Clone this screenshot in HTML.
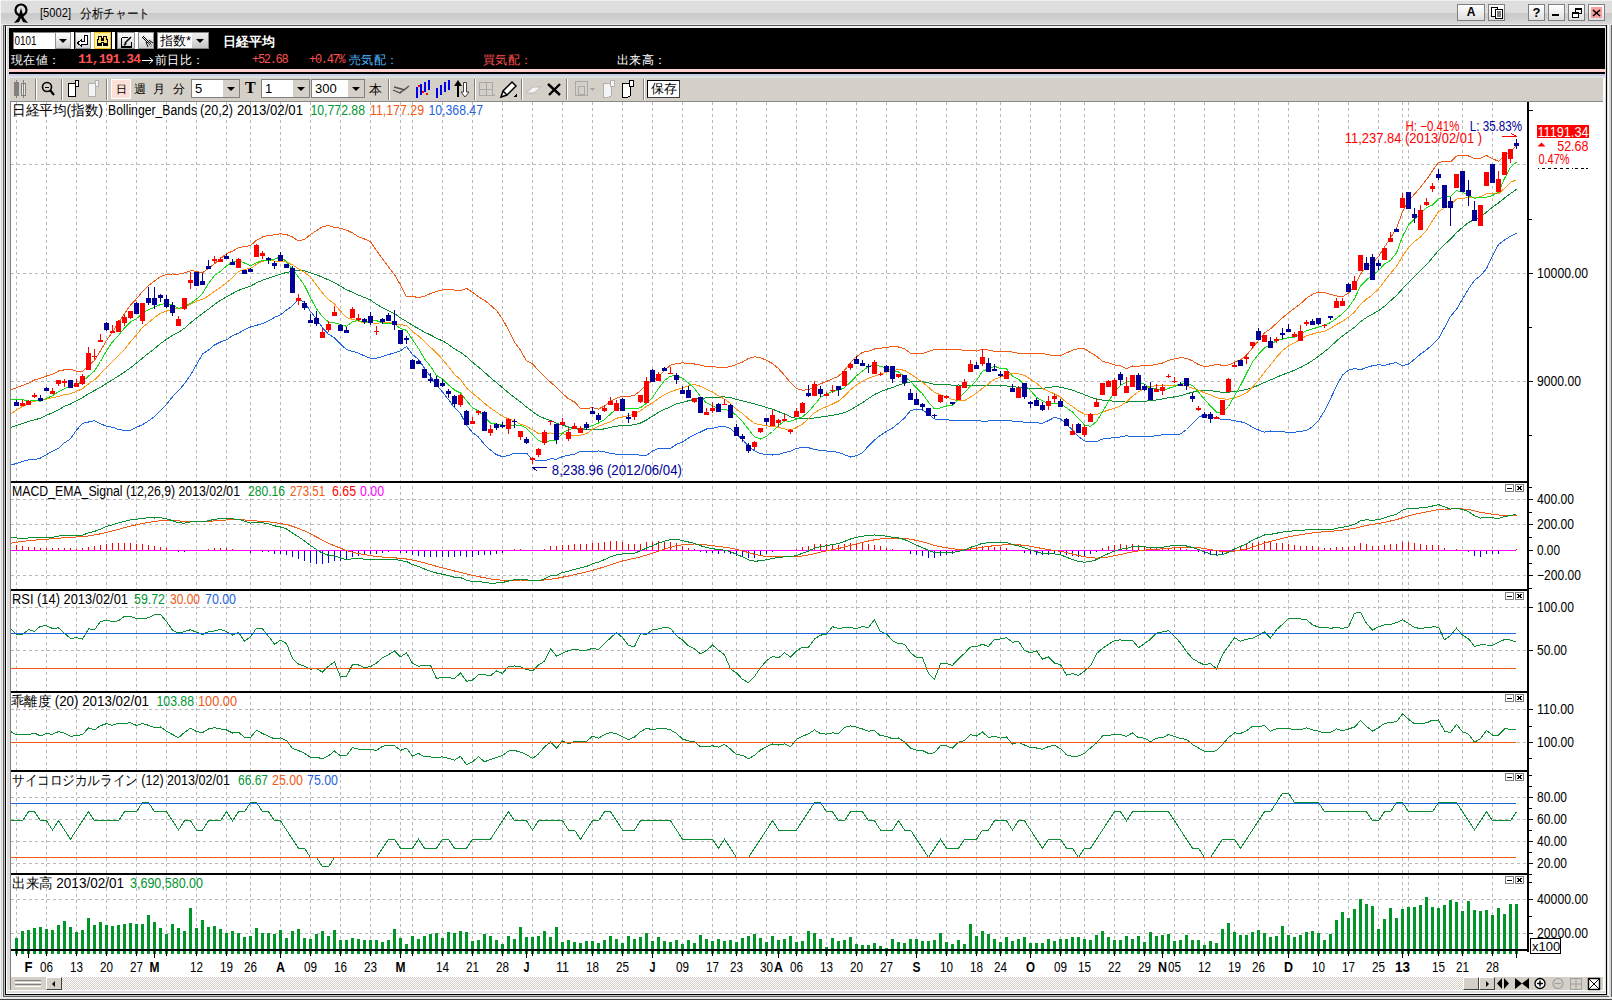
<!DOCTYPE html>
<html><head><meta charset="utf-8"><style>
*{margin:0;padding:0;box-sizing:border-box}
html,body{width:1612px;height:1000px;overflow:hidden;background:#d4d0c8;font-family:"Liberation Sans", sans-serif}
.a{position:absolute}
svg text{font-family:"Liberation Sans", sans-serif}
</style></head><body>
<!-- window frame -->
<div class="a" style="left:0;top:0;width:1612px;height:1000px;background:#ececec"></div>
<div class="a" style="left:0;top:0;width:1612px;height:25px;background:linear-gradient(#f0f0f0 0,#f0f0f0 1px,#dedede 1px,#dedede 13px,#cccccc 13px,#cccccc 17px,#dadada 24px,#e8e8e8 24px,#e8e8e8 25px)"></div>
<div class="a" style="left:0;top:0;width:1px;height:1000px;background:#f4f4f4"></div>
<div class="a" style="left:1px;top:25px;width:1px;height:975px;background:#d0d0d0"></div>
<div class="a" style="left:3px;top:25px;width:1606px;height:1px;background:#555"></div>
<div class="a" style="left:3px;top:25px;width:1px;height:972px;background:#606060"></div>
<div class="a" style="left:4px;top:26px;width:1px;height:970px;background:#c0c0c0"></div>
<div class="a" style="left:5px;top:26px;width:1px;height:969px;background:#000"></div>
<div class="a" style="left:6px;top:26px;width:1600px;height:2px;background:#f2f2f2"></div>
<div class="a" style="left:6px;top:27px;width:1px;height:967px;background:#fff"></div>
<div class="a" style="left:7px;top:27px;width:3px;height:964px;background:#dcdcdc"></div>
<div class="a" style="left:1603px;top:77px;width:2px;height:914px;background:#fafafa"></div>
<div class="a" style="left:1605px;top:26px;width:1px;height:968px;background:#dcdcdc"></div>
<div class="a" style="left:1606px;top:25px;width:1px;height:970px;background:#000"></div>
<div class="a" style="left:1607px;top:25px;width:1px;height:972px;background:#e0e0e0"></div>
<div class="a" style="left:1608px;top:25px;width:1px;height:974px;background:#fafafa"></div>
<div class="a" style="left:1609px;top:25px;width:2px;height:975px;background:#d8d8d8"></div>
<div class="a" style="left:1611px;top:25px;width:1px;height:975px;background:#606060"></div>
<div class="a" style="left:6px;top:990px;width:1600px;height:1px;background:#fff"></div>
<div class="a" style="left:7px;top:991px;width:1599px;height:2px;background:#dcdcdc"></div>
<div class="a" style="left:6px;top:993px;width:1600px;height:1px;background:#fff"></div>
<div class="a" style="left:5px;top:994px;width:1602px;height:1px;background:#000"></div>
<div class="a" style="left:4px;top:995px;width:1604px;height:1px;background:#c0c0c0"></div>
<div class="a" style="left:3px;top:996px;width:1606px;height:1px;background:#606060"></div>
<div class="a" style="left:0;top:997px;width:1612px;height:2px;background:#e8e8e8"></div>
<div class="a" style="left:0;top:999px;width:1612px;height:1px;background:#404040"></div>
<!-- title -->
<svg class="a" style="left:12px;top:2px" width="18" height="22" viewBox="0 0 18 22">
 <circle cx="9" cy="8" r="5.5" fill="none" stroke="#000" stroke-width="2.2"/>
 <path d="M9 6 L6 16 L2 21 L7 20 L9 16 L11 20 L16 21 L12 16 Z" fill="#000"/>
</svg>
<svg class="a" style="left:0;top:0" width="200" height="26"><text x="40" y="17" font-size="13" textLength="31" lengthAdjust="spacingAndGlyphs" font-family="Liberation Sans">[5002]</text><text x="80" y="17.5" font-size="13" textLength="70" lengthAdjust="spacingAndGlyphs" font-family="Liberation Sans">分析チャート</text></svg>
<div class="a" style="left:1457px;top:4px;width:28px;height:17px;background:linear-gradient(#fff,#e0e0e0);border:1px solid #808080;font:bold 12px 'Liberation Sans';text-align:center;line-height:15px">A</div>
<div class="a" style="left:1488px;top:4px;width:17px;height:17px;background:linear-gradient(#fff,#e0e0e0);border:1px solid #808080"></div>
<svg class="a" style="left:1490px;top:6px" width="14" height="14"><rect x="1.5" y="1.5" width="6" height="9" fill="#fff" stroke="#000"/><rect x="5.5" y="3.5" width="7" height="9" fill="#fff" stroke="#000"/><path d="M7 6h4M7 8h4M7 10h4" stroke="#000"/></svg>
<div class="a" style="left:1528px;top:4px;width:17px;height:17px;background:linear-gradient(#fff,#e0e0e0);border:1px solid #808080;font:bold 13px 'Liberation Sans';text-align:center;line-height:15px">?</div>
<div class="a" style="left:1548px;top:4px;width:17px;height:17px;background:linear-gradient(#fff,#e0e0e0);border:1px solid #808080"><div class="a" style="left:3px;top:9px;width:7px;height:2px;background:#000"></div></div>
<div class="a" style="left:1568px;top:4px;width:17px;height:17px;background:linear-gradient(#fff,#e0e0e0);border:1px solid #808080"><svg class="a" style="left:2px;top:2px" width="12" height="12"><rect x="4.5" y="1.5" width="6" height="5" fill="none" stroke="#000" stroke-width="1"/><rect x="4" y="1" width="7" height="2" fill="#000"/><rect x="1.5" y="5.5" width="6" height="5" fill="#fff" stroke="#000"/><rect x="1" y="5" width="7" height="2" fill="#000"/></svg></div>
<div class="a" style="left:1588px;top:4px;width:17px;height:17px;background:linear-gradient(#fff,#e0e0e0);border:1px solid #808080"></div>
<div class="a" style="left:1591px;top:7px;width:11px;height:11px;background:#f8a0a0"></div>
<svg class="a" style="left:1588px;top:4px" width="17" height="17"><path d="M5 6L12 12M12 6L5 12" stroke="#000" stroke-width="1.6"/></svg>

<!-- header black -->
<div class="a" style="left:9px;top:28px;width:1596px;height:41px;background:#000"></div>
<div class="a" style="left:9px;top:69px;width:1596px;height:3px;background:#ffd0d0"></div>
<div class="a" style="left:9px;top:72px;width:1596px;height:2px;background:#000"></div>
<div class="a" style="left:9px;top:74px;width:1596px;height:2px;background:#c8d0e8"></div>
<div class="a" style="left:9px;top:76px;width:1596px;height:2px;background:#e0e0e0"></div>
<!-- header row1 -->
<div class="a" style="left:13px;top:32px;width:42px;height:17px;background:#fff;border-top:1px solid #808080;border-left:1px solid #808080"></div>
<svg class="a" style="left:13px;top:32px" width="42" height="17"><text x="1.5" y="13" font-size="13" font-family="Liberation Sans" textLength="22" lengthAdjust="spacingAndGlyphs">0101</text></svg>
<div class="a" style="left:55px;top:32px;width:16px;height:17px;background:linear-gradient(#fff,#d0d0d0);border:1px solid #909090"><div class="a" style="left:3px;top:6px;width:0;height:0;border-left:4px solid transparent;border-right:4px solid transparent;border-top:4px solid #000"></div></div>
<div class="a" style="left:71px;top:32px;width:3px;height:17px;background:#fff"></div>
<div class="a" style="left:75px;top:32px;width:16px;height:17px;background:linear-gradient(#fff,#d0d0d0);border:1px solid #909090"></div>
<svg class="a" style="left:75px;top:32px" width="16" height="17" shape-rendering="crispEdges"><path d="M9.5 3.5h3v9h-6v2l-4-3.5 4-3.5v2h3z" fill="#fff" stroke="#000"/></svg>
<div class="a" style="left:91px;top:32px;width:3px;height:17px;background:#fff"></div>
<div class="a" style="left:94px;top:32px;width:17px;height:17px;background:#fff2a0;border:1px solid #f0c020"><svg class="a" style="left:0px;top:0px" width="16" height="16" shape-rendering="crispEdges"><path d="M3.5 3.5h3v2h2v-2h3v3h1v6h-4v-3h-2v3h-4v-6h1z" fill="#ffe060" stroke="#000"/><rect x="3" y="10" width="3" height="2" fill="#000"/><rect x="9" y="10" width="3" height="2" fill="#000"/><rect x="6" y="6" width="3" height="2" fill="#000"/></svg></div>
<div class="a" style="left:112px;top:32px;width:3px;height:17px;background:#fff"></div>
<div class="a" style="left:117px;top:32px;width:18px;height:17px;background:linear-gradient(#fff,#d0d0d0);border:1px solid #909090"><svg class="a" style="left:1px;top:1px" width="16" height="15" shape-rendering="crispEdges"><path d="M2.5 3.5h6M2.5 3.5v9h10v-5" fill="none" stroke="#000"/><path d="M6 9L12 3M6 8l1 2M7 10l-2 1" stroke="#000" stroke-width="1.5" shape-rendering="auto"/><rect x="2" y="12" width="11" height="1.5" fill="#000"/></svg></div>
<div class="a" style="left:135px;top:32px;width:3px;height:17px;background:#fff"></div>
<div class="a" style="left:138px;top:32px;width:16px;height:17px;background:linear-gradient(#fff,#d0d0d0);border:1px solid #909090"><svg class="a" style="left:1px;top:1px" width="14" height="15"><path d="M2 3L10 11M3 2L11 10M5 3L3 5M6 8L8 13M9 6L13 9" stroke="#000" stroke-width="1"/><path d="M8 9h4M9 11h3M11 8v5" stroke="#808080" stroke-dasharray="1,1"/></svg></div>
<div class="a" style="left:157px;top:32px;width:52px;height:17px;background:#fff;border:1px solid #808080;font:13px 'Liberation Sans';line-height:15px;padding-left:2px">指数*</div>
<div class="a" style="left:192px;top:33px;width:16px;height:15px;background:linear-gradient(#eee,#c8c8c8)"><div class="a" style="left:4px;top:6px;width:0;height:0;border-left:4px solid transparent;border-right:4px solid transparent;border-top:4px solid #000"></div></div>
<div class="a" style="left:223px;top:33px;font:bold 13px 'Liberation Sans';color:#fff;white-space:nowrap;letter-spacing:0px">日経平均</div>
<!-- header row2 -->
<div class="a" style="left:11px;top:52px;font:12px 'Liberation Sans';color:#fff;white-space:nowrap;letter-spacing:0.4px">現在値：</div>
<div class="a" style="left:78px;top:52px;font:bold 13px 'Liberation Mono';color:#ff5050;white-space:nowrap;letter-spacing:-0.9px">11,191.34</div>
<svg class="a" style="left:141px;top:51px" width="14" height="16"><path d="M1 9.5H12M8.5 6.5L12 9.5L8.5 12.5" stroke="#fff" fill="none" stroke-width="1"/></svg>
<div class="a" style="left:155px;top:52px;font:12px 'Liberation Sans';color:#fff;white-space:nowrap;letter-spacing:0.4px">前日比：</div>
<div class="a" style="left:252px;top:52.5px;font:12px 'Liberation Mono';color:#ff5050;white-space:nowrap;letter-spacing:-1.3px">+52.68</div>
<div class="a" style="left:309px;top:52.5px;font:12px 'Liberation Mono';color:#ff5050;white-space:nowrap;letter-spacing:-1.3px">+0.47%</div>
<div class="a" style="left:349px;top:52px;font:12px 'Liberation Sans';color:#50b8ff;white-space:nowrap;letter-spacing:0.4px">売気配：</div>
<div class="a" style="left:483px;top:52px;font:12px 'Liberation Sans';color:#ff5050;white-space:nowrap;letter-spacing:0.4px">買気配：</div>
<div class="a" style="left:617px;top:52px;font:12px 'Liberation Sans';color:#fff;white-space:nowrap;letter-spacing:0.4px">出来高：</div>

<!-- toolbar -->
<div class="a" style="left:10px;top:78px;width:1593px;height:23px;background:#d4d0c8"></div>
<div class="a" style="left:10px;top:101px;width:1593px;height:1px;background:#888"></div>
<svg class="a" style="left:10px;top:78px" width="700" height="23" shape-rendering="crispEdges">
 <rect x="4" y="4" width="5" height="14" fill="#808080"/><rect x="6" y="2" width="1" height="18" fill="#808080"/>
 <rect x="11.5" y="5.5" width="4" height="12" fill="#e8e8e8" stroke="#808080"/><rect x="13" y="2" width="1" height="18" fill="#808080"/>
 <rect x="25" y="1" width="1" height="21" fill="#808080"/><rect x="26" y="1" width="1" height="21" fill="#fff"/>
 <circle cx="37" cy="9" r="4.5" fill="none" stroke="#000" stroke-width="1.6" shape-rendering="auto"/><path d="M40 12L44 17" stroke="#000" stroke-width="2.2" shape-rendering="auto"/><path d="M35 9h4" stroke="#000"/>
 <rect x="51" y="1" width="1" height="21" fill="#808080"/><rect x="52" y="1" width="1" height="21" fill="#fff"/>
 <path d="M58.5 5.5h7v13h-7z" fill="#fff" stroke="#000"/><rect x="65.5" y="2.5" width="3" height="6" fill="#fff" stroke="#000"/>
 <path d="M78.5 5.5h7v13h-7z" fill="#f4f4f4" stroke="#b0b0b0"/><rect x="85.5" y="2.5" width="3" height="6" fill="#f4f4f4" stroke="#b0b0b0"/>
 <rect x="96" y="1" width="1" height="21" fill="#808080"/><rect x="97" y="1" width="1" height="21" fill="#fff"/>
 <rect x="101.5" y="1.5" width="19" height="19" fill="#fde0d8" stroke="#fff"/>
</svg>
<div class="a" style="left:116px;top:81.5px;font:11px 'Liberation Sans';white-space:nowrap">日</div>
<div class="a" style="left:134px;top:81px;font:12px 'Liberation Sans';white-space:nowrap">週</div>
<div class="a" style="left:153px;top:81px;font:12px 'Liberation Sans';white-space:nowrap">月</div>
<div class="a" style="left:173px;top:81px;font:12px 'Liberation Sans';white-space:nowrap">分</div>
<div class="a" style="left:191px;top:79px;width:49px;height:19px;background:#fff;border:1px solid #808080;font:13px 'Liberation Sans';line-height:17px;padding-left:3px">5</div>
<div class="a" style="left:223px;top:80px;width:16px;height:17px;background:#d4d0c8"><div class="a" style="left:4px;top:7px;border-left:4px solid transparent;border-right:4px solid transparent;border-top:4px solid #000"></div></div>
<div class="a" style="left:245px;top:79px;font:bold 16px 'Liberation Serif';white-space:nowrap">T</div>
<div class="a" style="left:261px;top:79px;width:49px;height:19px;background:#fff;border:1px solid #808080;font:13px 'Liberation Sans';line-height:17px;padding-left:3px">1</div>
<div class="a" style="left:293px;top:80px;width:16px;height:17px;background:#d4d0c8"><div class="a" style="left:4px;top:7px;border-left:4px solid transparent;border-right:4px solid transparent;border-top:4px solid #000"></div></div>
<div class="a" style="left:311px;top:79px;width:54px;height:19px;background:#fff;border:1px solid #808080;font:13px 'Liberation Sans';line-height:17px;padding-left:3px">300</div>
<div class="a" style="left:348px;top:80px;width:16px;height:17px;background:#d4d0c8"><div class="a" style="left:4px;top:7px;border-left:4px solid transparent;border-right:4px solid transparent;border-top:4px solid #000"></div></div>
<div class="a" style="left:369px;top:81px;font:13px 'Liberation Sans';white-space:nowrap">本</div>
<svg class="a" style="left:385px;top:78px" width="320" height="23" shape-rendering="crispEdges">
 <rect x="3" y="1" width="1" height="21" fill="#808080"/><rect x="4" y="1" width="1" height="21" fill="#fff"/>
 <path d="M8 12 L15 15 L24 8 M9 9 L20 12 M14 15 L22 10" stroke="#505050" fill="none" stroke-width="1.3" shape-rendering="auto"/>
 <rect x="31" y="9" width="2" height="11" fill="#0000f0"/><rect x="35" y="6" width="2" height="11" fill="#0000f0"/><rect x="39" y="4" width="2" height="10" fill="#0000f0"/><rect x="43" y="2" width="2" height="10" fill="#0000f0"/><rect x="33" y="7" width="2" height="2" fill="#f00"/><rect x="37" y="13" width="2" height="2" fill="#f00"/><rect x="41" y="15" width="2" height="2" fill="#f00"/>
 <rect x="51" y="10" width="2" height="10" fill="#0000f0"/><rect x="55" y="7" width="2" height="10" fill="#0000f0"/><rect x="59" y="4" width="2" height="10" fill="#0000f0"/><rect x="63" y="2" width="2" height="10" fill="#0000f0"/>
 <path d="M69 8 L73 2 L77 8 Z" fill="#000" shape-rendering="auto"/><rect x="72" y="6" width="2" height="13" fill="#000"/>
 <path d="M78.5 4.5 V14 H76 L80 19 L84 14 H81.5 V4.5 Z" fill="#fff" stroke="#404040" shape-rendering="auto"/>
 <rect x="89" y="1" width="1" height="21" fill="#808080"/><rect x="90" y="1" width="1" height="21" fill="#fff"/>
 <rect x="94.5" y="4.5" width="13" height="13" fill="none" stroke="#a8a8a8"/><path d="M101.5 4v14M94 11.5h14" stroke="#a8a8a8"/><path d="M107 18h3v-3z" fill="#a8a8a8"/>
 <path d="M116 19 L118 13 L127 4 L131 8 L122 17 Z M118 13 L122 17" fill="#fff" stroke="#000" stroke-width="1.5" shape-rendering="auto"/><path d="M128 19h4v-4z" fill="#000"/>
 <rect x="136" y="1" width="1" height="21" fill="#808080"/><rect x="137" y="1" width="1" height="21" fill="#fff"/>
 <path d="M141 15 L148 9 L156 9 L149 15 Z" fill="#f4f4f4" stroke="#b8b8b8" shape-rendering="auto"/>
 <path d="M163 6 L175 17 M175 6 L164 17" stroke="#000" stroke-width="2.4" shape-rendering="auto"/>
 <rect x="181" y="1" width="1" height="21" fill="#808080"/><rect x="182" y="1" width="1" height="21" fill="#fff"/>
 <rect x="190.5" y="3.5" width="12" height="14" fill="none" stroke="#a8a8a8"/><rect x="193.5" y="8.5" width="6" height="8" fill="none" stroke="#a8a8a8"/><rect x="193" y="4" width="7" height="3" fill="#d0d0d0"/><path d="M204 10h6l-3 3z" fill="#a8a8a8"/>
 <path d="M218.5 5.5h8v12l-3 2h-5z" fill="#f4f4f4" stroke="#b0b0b0"/><rect x="225.5" y="2.5" width="4" height="6" fill="#f4f4f4" stroke="#b0b0b0"/>
 <path d="M237.5 5.5h8v12l-3 2h-5z" fill="#fff" stroke="#000"/><rect x="244.5" y="2.5" width="4" height="6" fill="#fff" stroke="#000"/>
 <rect x="258" y="1" width="1" height="21" fill="#808080"/><rect x="259" y="1" width="1" height="21" fill="#fff"/>
</svg>
<div class="a" style="left:647px;top:80px;width:33px;height:18px;background:#fff;border:1px solid #000;border-right-color:#404040;border-bottom-color:#404040;font:13px 'Liberation Sans';line-height:16px;text-align:center">保存</div>

<!-- scrollbar -->
<div class="a" style="left:11px;top:977px;width:1592px;height:13px;background-color:#e8e8e8;background-image:repeating-conic-gradient(#d4d0c8 0 25%,#fff 0 50%);background-size:2px 2px"></div>
<div class="a" style="left:11px;top:977px;width:35px;height:13px;background:#d4d0c8"></div>
<div class="a" style="left:15px;top:980px;width:26px;height:1px;background:#808080"></div>
<div class="a" style="left:15px;top:982px;width:26px;height:1px;background:#fff"></div>
<div class="a" style="left:15px;top:984px;width:26px;height:1px;background:#808080"></div>
<div class="a" style="left:15px;top:986px;width:26px;height:1px;background:#fff"></div>
<div class="a" style="left:46px;top:977px;width:16px;height:13px;background:#d4d0c8;border-right:1px solid #404040;border-bottom:1px solid #404040;border-top:1px solid #fff;border-left:1px solid #fff"><div class="a" style="left:5px;top:3px;border-top:3px solid transparent;border-bottom:3px solid transparent;border-right:3px solid #000"></div></div>
<div class="a" style="left:1463px;top:977px;width:16px;height:13px;background:#d4d0c8;border-right:1px solid #404040;border-bottom:1px solid #404040;border-top:1px solid #fff;border-left:1px solid #fff"></div>
<div class="a" style="left:1479px;top:977px;width:16px;height:13px;background:#d4d0c8;border-right:1px solid #404040;border-bottom:1px solid #404040;border-top:1px solid #fff;border-left:1px solid #fff"><div class="a" style="left:6px;top:3px;border-top:3px solid transparent;border-bottom:3px solid transparent;border-left:3px solid #000"></div></div>
<div class="a" style="left:1495px;top:977px;width:108px;height:13px;background:#d4d0c8"></div>
<svg class="a" style="left:1495px;top:977px" width="110" height="14" shape-rendering="auto">
 <path d="M2 6.5 L7 1 V12 Z M9 1 L14 6.5 L9 12 Z" fill="#000"/>
 <path d="M20 1 L27 6.5 L20 12 Z M34 1 L27 6.5 L34 12 Z" fill="#000"/>
 <circle cx="45" cy="6.5" r="5" fill="#fff" stroke="#000" stroke-width="1.3"/><path d="M42 6.5h6M45 3.5v6" stroke="#000" stroke-width="1.5"/>
 <circle cx="63" cy="6.5" r="5" fill="none" stroke="#a0a0a0" stroke-width="1.2"/><path d="M60 6.5h6" stroke="#a0a0a0" stroke-width="1.3"/>
 <rect x="75.5" y="1.5" width="11" height="11" fill="none" stroke="#a0a0a0"/><path d="M81 1v12M75 7h12" stroke="#a0a0a0"/>
 <rect x="93.5" y="1.5" width="11" height="11" fill="#fff" stroke="#000" stroke-width="1.4"/><path d="M94 2L104 12M104 2L94 12" stroke="#000"/>
</svg>

<svg class="a" style="left:0;top:0" width="1612" height="1000" viewBox="0 0 1612 1000" shape-rendering="crispEdges">
<rect x="10" y="102" width="1593" height="875" fill="#fff"/>
<rect x="10" y="102" width="1" height="888" fill="#808080"/>
<line x1="16.5" y1="102" x2="16.5" y2="481" stroke="#b8b8b8" stroke-dasharray="3,3"/>
<line x1="46.5" y1="102" x2="46.5" y2="481" stroke="#b8b8b8" stroke-dasharray="3,3"/>
<line x1="76.5" y1="102" x2="76.5" y2="481" stroke="#b8b8b8" stroke-dasharray="3,3"/>
<line x1="106.5" y1="102" x2="106.5" y2="481" stroke="#b8b8b8" stroke-dasharray="3,3"/>
<line x1="136.5" y1="102" x2="136.5" y2="481" stroke="#b8b8b8" stroke-dasharray="3,3"/>
<line x1="166.5" y1="102" x2="166.5" y2="481" stroke="#b8b8b8" stroke-dasharray="3,3"/>
<line x1="196.5" y1="102" x2="196.5" y2="481" stroke="#b8b8b8" stroke-dasharray="3,3"/>
<line x1="226.5" y1="102" x2="226.5" y2="481" stroke="#b8b8b8" stroke-dasharray="3,3"/>
<line x1="250.5" y1="102" x2="250.5" y2="481" stroke="#b8b8b8" stroke-dasharray="3,3"/>
<line x1="280.5" y1="102" x2="280.5" y2="481" stroke="#b8b8b8" stroke-dasharray="3,3"/>
<line x1="310.5" y1="102" x2="310.5" y2="481" stroke="#b8b8b8" stroke-dasharray="3,3"/>
<line x1="340.5" y1="102" x2="340.5" y2="481" stroke="#b8b8b8" stroke-dasharray="3,3"/>
<line x1="370.5" y1="102" x2="370.5" y2="481" stroke="#b8b8b8" stroke-dasharray="3,3"/>
<line x1="400.5" y1="102" x2="400.5" y2="481" stroke="#b8b8b8" stroke-dasharray="3,3"/>
<line x1="412.5" y1="102" x2="412.5" y2="481" stroke="#b8b8b8" stroke-dasharray="3,3"/>
<line x1="442.5" y1="102" x2="442.5" y2="481" stroke="#b8b8b8" stroke-dasharray="3,3"/>
<line x1="472.5" y1="102" x2="472.5" y2="481" stroke="#b8b8b8" stroke-dasharray="3,3"/>
<line x1="502.5" y1="102" x2="502.5" y2="481" stroke="#b8b8b8" stroke-dasharray="3,3"/>
<line x1="532.5" y1="102" x2="532.5" y2="481" stroke="#b8b8b8" stroke-dasharray="3,3"/>
<line x1="562.5" y1="102" x2="562.5" y2="481" stroke="#b8b8b8" stroke-dasharray="3,3"/>
<line x1="592.5" y1="102" x2="592.5" y2="481" stroke="#b8b8b8" stroke-dasharray="3,3"/>
<line x1="622.5" y1="102" x2="622.5" y2="481" stroke="#b8b8b8" stroke-dasharray="3,3"/>
<line x1="652.5" y1="102" x2="652.5" y2="481" stroke="#b8b8b8" stroke-dasharray="3,3"/>
<line x1="682.5" y1="102" x2="682.5" y2="481" stroke="#b8b8b8" stroke-dasharray="3,3"/>
<line x1="712.5" y1="102" x2="712.5" y2="481" stroke="#b8b8b8" stroke-dasharray="3,3"/>
<line x1="736.5" y1="102" x2="736.5" y2="481" stroke="#b8b8b8" stroke-dasharray="3,3"/>
<line x1="766.5" y1="102" x2="766.5" y2="481" stroke="#b8b8b8" stroke-dasharray="3,3"/>
<line x1="796.5" y1="102" x2="796.5" y2="481" stroke="#b8b8b8" stroke-dasharray="3,3"/>
<line x1="826.5" y1="102" x2="826.5" y2="481" stroke="#b8b8b8" stroke-dasharray="3,3"/>
<line x1="856.5" y1="102" x2="856.5" y2="481" stroke="#b8b8b8" stroke-dasharray="3,3"/>
<line x1="886.5" y1="102" x2="886.5" y2="481" stroke="#b8b8b8" stroke-dasharray="3,3"/>
<line x1="916.5" y1="102" x2="916.5" y2="481" stroke="#b8b8b8" stroke-dasharray="3,3"/>
<line x1="946.5" y1="102" x2="946.5" y2="481" stroke="#b8b8b8" stroke-dasharray="3,3"/>
<line x1="976.5" y1="102" x2="976.5" y2="481" stroke="#b8b8b8" stroke-dasharray="3,3"/>
<line x1="1000.5" y1="102" x2="1000.5" y2="481" stroke="#b8b8b8" stroke-dasharray="3,3"/>
<line x1="1030.5" y1="102" x2="1030.5" y2="481" stroke="#b8b8b8" stroke-dasharray="3,3"/>
<line x1="1060.5" y1="102" x2="1060.5" y2="481" stroke="#b8b8b8" stroke-dasharray="3,3"/>
<line x1="1084.5" y1="102" x2="1084.5" y2="481" stroke="#b8b8b8" stroke-dasharray="3,3"/>
<line x1="1114.5" y1="102" x2="1114.5" y2="481" stroke="#b8b8b8" stroke-dasharray="3,3"/>
<line x1="1144.5" y1="102" x2="1144.5" y2="481" stroke="#b8b8b8" stroke-dasharray="3,3"/>
<line x1="1174.5" y1="102" x2="1174.5" y2="481" stroke="#b8b8b8" stroke-dasharray="3,3"/>
<line x1="1204.5" y1="102" x2="1204.5" y2="481" stroke="#b8b8b8" stroke-dasharray="3,3"/>
<line x1="1234.5" y1="102" x2="1234.5" y2="481" stroke="#b8b8b8" stroke-dasharray="3,3"/>
<line x1="1258.5" y1="102" x2="1258.5" y2="481" stroke="#b8b8b8" stroke-dasharray="3,3"/>
<line x1="1288.5" y1="102" x2="1288.5" y2="481" stroke="#b8b8b8" stroke-dasharray="3,3"/>
<line x1="1318.5" y1="102" x2="1318.5" y2="481" stroke="#b8b8b8" stroke-dasharray="3,3"/>
<line x1="1348.5" y1="102" x2="1348.5" y2="481" stroke="#b8b8b8" stroke-dasharray="3,3"/>
<line x1="1378.5" y1="102" x2="1378.5" y2="481" stroke="#b8b8b8" stroke-dasharray="3,3"/>
<line x1="1402.5" y1="102" x2="1402.5" y2="481" stroke="#b8b8b8" stroke-dasharray="3,3"/>
<line x1="1408.5" y1="102" x2="1408.5" y2="481" stroke="#b8b8b8" stroke-dasharray="3,3"/>
<line x1="1438.5" y1="102" x2="1438.5" y2="481" stroke="#b8b8b8" stroke-dasharray="3,3"/>
<line x1="1462.5" y1="102" x2="1462.5" y2="481" stroke="#b8b8b8" stroke-dasharray="3,3"/>
<line x1="1492.5" y1="102" x2="1492.5" y2="481" stroke="#b8b8b8" stroke-dasharray="3,3"/>
<line x1="16.5" y1="480" x2="16.5" y2="589" stroke="#b8b8b8" stroke-dasharray="3,3"/>
<line x1="46.5" y1="480" x2="46.5" y2="589" stroke="#b8b8b8" stroke-dasharray="3,3"/>
<line x1="76.5" y1="480" x2="76.5" y2="589" stroke="#b8b8b8" stroke-dasharray="3,3"/>
<line x1="106.5" y1="480" x2="106.5" y2="589" stroke="#b8b8b8" stroke-dasharray="3,3"/>
<line x1="136.5" y1="480" x2="136.5" y2="589" stroke="#b8b8b8" stroke-dasharray="3,3"/>
<line x1="166.5" y1="480" x2="166.5" y2="589" stroke="#b8b8b8" stroke-dasharray="3,3"/>
<line x1="196.5" y1="480" x2="196.5" y2="589" stroke="#b8b8b8" stroke-dasharray="3,3"/>
<line x1="226.5" y1="480" x2="226.5" y2="589" stroke="#b8b8b8" stroke-dasharray="3,3"/>
<line x1="250.5" y1="480" x2="250.5" y2="589" stroke="#b8b8b8" stroke-dasharray="3,3"/>
<line x1="280.5" y1="480" x2="280.5" y2="589" stroke="#b8b8b8" stroke-dasharray="3,3"/>
<line x1="310.5" y1="480" x2="310.5" y2="589" stroke="#b8b8b8" stroke-dasharray="3,3"/>
<line x1="340.5" y1="480" x2="340.5" y2="589" stroke="#b8b8b8" stroke-dasharray="3,3"/>
<line x1="370.5" y1="480" x2="370.5" y2="589" stroke="#b8b8b8" stroke-dasharray="3,3"/>
<line x1="400.5" y1="480" x2="400.5" y2="589" stroke="#b8b8b8" stroke-dasharray="3,3"/>
<line x1="412.5" y1="480" x2="412.5" y2="589" stroke="#b8b8b8" stroke-dasharray="3,3"/>
<line x1="442.5" y1="480" x2="442.5" y2="589" stroke="#b8b8b8" stroke-dasharray="3,3"/>
<line x1="472.5" y1="480" x2="472.5" y2="589" stroke="#b8b8b8" stroke-dasharray="3,3"/>
<line x1="502.5" y1="480" x2="502.5" y2="589" stroke="#b8b8b8" stroke-dasharray="3,3"/>
<line x1="532.5" y1="480" x2="532.5" y2="589" stroke="#b8b8b8" stroke-dasharray="3,3"/>
<line x1="562.5" y1="480" x2="562.5" y2="589" stroke="#b8b8b8" stroke-dasharray="3,3"/>
<line x1="592.5" y1="480" x2="592.5" y2="589" stroke="#b8b8b8" stroke-dasharray="3,3"/>
<line x1="622.5" y1="480" x2="622.5" y2="589" stroke="#b8b8b8" stroke-dasharray="3,3"/>
<line x1="652.5" y1="480" x2="652.5" y2="589" stroke="#b8b8b8" stroke-dasharray="3,3"/>
<line x1="682.5" y1="480" x2="682.5" y2="589" stroke="#b8b8b8" stroke-dasharray="3,3"/>
<line x1="712.5" y1="480" x2="712.5" y2="589" stroke="#b8b8b8" stroke-dasharray="3,3"/>
<line x1="736.5" y1="480" x2="736.5" y2="589" stroke="#b8b8b8" stroke-dasharray="3,3"/>
<line x1="766.5" y1="480" x2="766.5" y2="589" stroke="#b8b8b8" stroke-dasharray="3,3"/>
<line x1="796.5" y1="480" x2="796.5" y2="589" stroke="#b8b8b8" stroke-dasharray="3,3"/>
<line x1="826.5" y1="480" x2="826.5" y2="589" stroke="#b8b8b8" stroke-dasharray="3,3"/>
<line x1="856.5" y1="480" x2="856.5" y2="589" stroke="#b8b8b8" stroke-dasharray="3,3"/>
<line x1="886.5" y1="480" x2="886.5" y2="589" stroke="#b8b8b8" stroke-dasharray="3,3"/>
<line x1="916.5" y1="480" x2="916.5" y2="589" stroke="#b8b8b8" stroke-dasharray="3,3"/>
<line x1="946.5" y1="480" x2="946.5" y2="589" stroke="#b8b8b8" stroke-dasharray="3,3"/>
<line x1="976.5" y1="480" x2="976.5" y2="589" stroke="#b8b8b8" stroke-dasharray="3,3"/>
<line x1="1000.5" y1="480" x2="1000.5" y2="589" stroke="#b8b8b8" stroke-dasharray="3,3"/>
<line x1="1030.5" y1="480" x2="1030.5" y2="589" stroke="#b8b8b8" stroke-dasharray="3,3"/>
<line x1="1060.5" y1="480" x2="1060.5" y2="589" stroke="#b8b8b8" stroke-dasharray="3,3"/>
<line x1="1084.5" y1="480" x2="1084.5" y2="589" stroke="#b8b8b8" stroke-dasharray="3,3"/>
<line x1="1114.5" y1="480" x2="1114.5" y2="589" stroke="#b8b8b8" stroke-dasharray="3,3"/>
<line x1="1144.5" y1="480" x2="1144.5" y2="589" stroke="#b8b8b8" stroke-dasharray="3,3"/>
<line x1="1174.5" y1="480" x2="1174.5" y2="589" stroke="#b8b8b8" stroke-dasharray="3,3"/>
<line x1="1204.5" y1="480" x2="1204.5" y2="589" stroke="#b8b8b8" stroke-dasharray="3,3"/>
<line x1="1234.5" y1="480" x2="1234.5" y2="589" stroke="#b8b8b8" stroke-dasharray="3,3"/>
<line x1="1258.5" y1="480" x2="1258.5" y2="589" stroke="#b8b8b8" stroke-dasharray="3,3"/>
<line x1="1288.5" y1="480" x2="1288.5" y2="589" stroke="#b8b8b8" stroke-dasharray="3,3"/>
<line x1="1318.5" y1="480" x2="1318.5" y2="589" stroke="#b8b8b8" stroke-dasharray="3,3"/>
<line x1="1348.5" y1="480" x2="1348.5" y2="589" stroke="#b8b8b8" stroke-dasharray="3,3"/>
<line x1="1378.5" y1="480" x2="1378.5" y2="589" stroke="#b8b8b8" stroke-dasharray="3,3"/>
<line x1="1402.5" y1="480" x2="1402.5" y2="589" stroke="#b8b8b8" stroke-dasharray="3,3"/>
<line x1="1408.5" y1="480" x2="1408.5" y2="589" stroke="#b8b8b8" stroke-dasharray="3,3"/>
<line x1="1438.5" y1="480" x2="1438.5" y2="589" stroke="#b8b8b8" stroke-dasharray="3,3"/>
<line x1="1462.5" y1="480" x2="1462.5" y2="589" stroke="#b8b8b8" stroke-dasharray="3,3"/>
<line x1="1492.5" y1="480" x2="1492.5" y2="589" stroke="#b8b8b8" stroke-dasharray="3,3"/>
<line x1="16.5" y1="588" x2="16.5" y2="691" stroke="#b8b8b8" stroke-dasharray="3,3"/>
<line x1="46.5" y1="588" x2="46.5" y2="691" stroke="#b8b8b8" stroke-dasharray="3,3"/>
<line x1="76.5" y1="588" x2="76.5" y2="691" stroke="#b8b8b8" stroke-dasharray="3,3"/>
<line x1="106.5" y1="588" x2="106.5" y2="691" stroke="#b8b8b8" stroke-dasharray="3,3"/>
<line x1="136.5" y1="588" x2="136.5" y2="691" stroke="#b8b8b8" stroke-dasharray="3,3"/>
<line x1="166.5" y1="588" x2="166.5" y2="691" stroke="#b8b8b8" stroke-dasharray="3,3"/>
<line x1="196.5" y1="588" x2="196.5" y2="691" stroke="#b8b8b8" stroke-dasharray="3,3"/>
<line x1="226.5" y1="588" x2="226.5" y2="691" stroke="#b8b8b8" stroke-dasharray="3,3"/>
<line x1="250.5" y1="588" x2="250.5" y2="691" stroke="#b8b8b8" stroke-dasharray="3,3"/>
<line x1="280.5" y1="588" x2="280.5" y2="691" stroke="#b8b8b8" stroke-dasharray="3,3"/>
<line x1="310.5" y1="588" x2="310.5" y2="691" stroke="#b8b8b8" stroke-dasharray="3,3"/>
<line x1="340.5" y1="588" x2="340.5" y2="691" stroke="#b8b8b8" stroke-dasharray="3,3"/>
<line x1="370.5" y1="588" x2="370.5" y2="691" stroke="#b8b8b8" stroke-dasharray="3,3"/>
<line x1="400.5" y1="588" x2="400.5" y2="691" stroke="#b8b8b8" stroke-dasharray="3,3"/>
<line x1="412.5" y1="588" x2="412.5" y2="691" stroke="#b8b8b8" stroke-dasharray="3,3"/>
<line x1="442.5" y1="588" x2="442.5" y2="691" stroke="#b8b8b8" stroke-dasharray="3,3"/>
<line x1="472.5" y1="588" x2="472.5" y2="691" stroke="#b8b8b8" stroke-dasharray="3,3"/>
<line x1="502.5" y1="588" x2="502.5" y2="691" stroke="#b8b8b8" stroke-dasharray="3,3"/>
<line x1="532.5" y1="588" x2="532.5" y2="691" stroke="#b8b8b8" stroke-dasharray="3,3"/>
<line x1="562.5" y1="588" x2="562.5" y2="691" stroke="#b8b8b8" stroke-dasharray="3,3"/>
<line x1="592.5" y1="588" x2="592.5" y2="691" stroke="#b8b8b8" stroke-dasharray="3,3"/>
<line x1="622.5" y1="588" x2="622.5" y2="691" stroke="#b8b8b8" stroke-dasharray="3,3"/>
<line x1="652.5" y1="588" x2="652.5" y2="691" stroke="#b8b8b8" stroke-dasharray="3,3"/>
<line x1="682.5" y1="588" x2="682.5" y2="691" stroke="#b8b8b8" stroke-dasharray="3,3"/>
<line x1="712.5" y1="588" x2="712.5" y2="691" stroke="#b8b8b8" stroke-dasharray="3,3"/>
<line x1="736.5" y1="588" x2="736.5" y2="691" stroke="#b8b8b8" stroke-dasharray="3,3"/>
<line x1="766.5" y1="588" x2="766.5" y2="691" stroke="#b8b8b8" stroke-dasharray="3,3"/>
<line x1="796.5" y1="588" x2="796.5" y2="691" stroke="#b8b8b8" stroke-dasharray="3,3"/>
<line x1="826.5" y1="588" x2="826.5" y2="691" stroke="#b8b8b8" stroke-dasharray="3,3"/>
<line x1="856.5" y1="588" x2="856.5" y2="691" stroke="#b8b8b8" stroke-dasharray="3,3"/>
<line x1="886.5" y1="588" x2="886.5" y2="691" stroke="#b8b8b8" stroke-dasharray="3,3"/>
<line x1="916.5" y1="588" x2="916.5" y2="691" stroke="#b8b8b8" stroke-dasharray="3,3"/>
<line x1="946.5" y1="588" x2="946.5" y2="691" stroke="#b8b8b8" stroke-dasharray="3,3"/>
<line x1="976.5" y1="588" x2="976.5" y2="691" stroke="#b8b8b8" stroke-dasharray="3,3"/>
<line x1="1000.5" y1="588" x2="1000.5" y2="691" stroke="#b8b8b8" stroke-dasharray="3,3"/>
<line x1="1030.5" y1="588" x2="1030.5" y2="691" stroke="#b8b8b8" stroke-dasharray="3,3"/>
<line x1="1060.5" y1="588" x2="1060.5" y2="691" stroke="#b8b8b8" stroke-dasharray="3,3"/>
<line x1="1084.5" y1="588" x2="1084.5" y2="691" stroke="#b8b8b8" stroke-dasharray="3,3"/>
<line x1="1114.5" y1="588" x2="1114.5" y2="691" stroke="#b8b8b8" stroke-dasharray="3,3"/>
<line x1="1144.5" y1="588" x2="1144.5" y2="691" stroke="#b8b8b8" stroke-dasharray="3,3"/>
<line x1="1174.5" y1="588" x2="1174.5" y2="691" stroke="#b8b8b8" stroke-dasharray="3,3"/>
<line x1="1204.5" y1="588" x2="1204.5" y2="691" stroke="#b8b8b8" stroke-dasharray="3,3"/>
<line x1="1234.5" y1="588" x2="1234.5" y2="691" stroke="#b8b8b8" stroke-dasharray="3,3"/>
<line x1="1258.5" y1="588" x2="1258.5" y2="691" stroke="#b8b8b8" stroke-dasharray="3,3"/>
<line x1="1288.5" y1="588" x2="1288.5" y2="691" stroke="#b8b8b8" stroke-dasharray="3,3"/>
<line x1="1318.5" y1="588" x2="1318.5" y2="691" stroke="#b8b8b8" stroke-dasharray="3,3"/>
<line x1="1348.5" y1="588" x2="1348.5" y2="691" stroke="#b8b8b8" stroke-dasharray="3,3"/>
<line x1="1378.5" y1="588" x2="1378.5" y2="691" stroke="#b8b8b8" stroke-dasharray="3,3"/>
<line x1="1402.5" y1="588" x2="1402.5" y2="691" stroke="#b8b8b8" stroke-dasharray="3,3"/>
<line x1="1408.5" y1="588" x2="1408.5" y2="691" stroke="#b8b8b8" stroke-dasharray="3,3"/>
<line x1="1438.5" y1="588" x2="1438.5" y2="691" stroke="#b8b8b8" stroke-dasharray="3,3"/>
<line x1="1462.5" y1="588" x2="1462.5" y2="691" stroke="#b8b8b8" stroke-dasharray="3,3"/>
<line x1="1492.5" y1="588" x2="1492.5" y2="691" stroke="#b8b8b8" stroke-dasharray="3,3"/>
<line x1="16.5" y1="690" x2="16.5" y2="770" stroke="#b8b8b8" stroke-dasharray="3,3"/>
<line x1="46.5" y1="690" x2="46.5" y2="770" stroke="#b8b8b8" stroke-dasharray="3,3"/>
<line x1="76.5" y1="690" x2="76.5" y2="770" stroke="#b8b8b8" stroke-dasharray="3,3"/>
<line x1="106.5" y1="690" x2="106.5" y2="770" stroke="#b8b8b8" stroke-dasharray="3,3"/>
<line x1="136.5" y1="690" x2="136.5" y2="770" stroke="#b8b8b8" stroke-dasharray="3,3"/>
<line x1="166.5" y1="690" x2="166.5" y2="770" stroke="#b8b8b8" stroke-dasharray="3,3"/>
<line x1="196.5" y1="690" x2="196.5" y2="770" stroke="#b8b8b8" stroke-dasharray="3,3"/>
<line x1="226.5" y1="690" x2="226.5" y2="770" stroke="#b8b8b8" stroke-dasharray="3,3"/>
<line x1="250.5" y1="690" x2="250.5" y2="770" stroke="#b8b8b8" stroke-dasharray="3,3"/>
<line x1="280.5" y1="690" x2="280.5" y2="770" stroke="#b8b8b8" stroke-dasharray="3,3"/>
<line x1="310.5" y1="690" x2="310.5" y2="770" stroke="#b8b8b8" stroke-dasharray="3,3"/>
<line x1="340.5" y1="690" x2="340.5" y2="770" stroke="#b8b8b8" stroke-dasharray="3,3"/>
<line x1="370.5" y1="690" x2="370.5" y2="770" stroke="#b8b8b8" stroke-dasharray="3,3"/>
<line x1="400.5" y1="690" x2="400.5" y2="770" stroke="#b8b8b8" stroke-dasharray="3,3"/>
<line x1="412.5" y1="690" x2="412.5" y2="770" stroke="#b8b8b8" stroke-dasharray="3,3"/>
<line x1="442.5" y1="690" x2="442.5" y2="770" stroke="#b8b8b8" stroke-dasharray="3,3"/>
<line x1="472.5" y1="690" x2="472.5" y2="770" stroke="#b8b8b8" stroke-dasharray="3,3"/>
<line x1="502.5" y1="690" x2="502.5" y2="770" stroke="#b8b8b8" stroke-dasharray="3,3"/>
<line x1="532.5" y1="690" x2="532.5" y2="770" stroke="#b8b8b8" stroke-dasharray="3,3"/>
<line x1="562.5" y1="690" x2="562.5" y2="770" stroke="#b8b8b8" stroke-dasharray="3,3"/>
<line x1="592.5" y1="690" x2="592.5" y2="770" stroke="#b8b8b8" stroke-dasharray="3,3"/>
<line x1="622.5" y1="690" x2="622.5" y2="770" stroke="#b8b8b8" stroke-dasharray="3,3"/>
<line x1="652.5" y1="690" x2="652.5" y2="770" stroke="#b8b8b8" stroke-dasharray="3,3"/>
<line x1="682.5" y1="690" x2="682.5" y2="770" stroke="#b8b8b8" stroke-dasharray="3,3"/>
<line x1="712.5" y1="690" x2="712.5" y2="770" stroke="#b8b8b8" stroke-dasharray="3,3"/>
<line x1="736.5" y1="690" x2="736.5" y2="770" stroke="#b8b8b8" stroke-dasharray="3,3"/>
<line x1="766.5" y1="690" x2="766.5" y2="770" stroke="#b8b8b8" stroke-dasharray="3,3"/>
<line x1="796.5" y1="690" x2="796.5" y2="770" stroke="#b8b8b8" stroke-dasharray="3,3"/>
<line x1="826.5" y1="690" x2="826.5" y2="770" stroke="#b8b8b8" stroke-dasharray="3,3"/>
<line x1="856.5" y1="690" x2="856.5" y2="770" stroke="#b8b8b8" stroke-dasharray="3,3"/>
<line x1="886.5" y1="690" x2="886.5" y2="770" stroke="#b8b8b8" stroke-dasharray="3,3"/>
<line x1="916.5" y1="690" x2="916.5" y2="770" stroke="#b8b8b8" stroke-dasharray="3,3"/>
<line x1="946.5" y1="690" x2="946.5" y2="770" stroke="#b8b8b8" stroke-dasharray="3,3"/>
<line x1="976.5" y1="690" x2="976.5" y2="770" stroke="#b8b8b8" stroke-dasharray="3,3"/>
<line x1="1000.5" y1="690" x2="1000.5" y2="770" stroke="#b8b8b8" stroke-dasharray="3,3"/>
<line x1="1030.5" y1="690" x2="1030.5" y2="770" stroke="#b8b8b8" stroke-dasharray="3,3"/>
<line x1="1060.5" y1="690" x2="1060.5" y2="770" stroke="#b8b8b8" stroke-dasharray="3,3"/>
<line x1="1084.5" y1="690" x2="1084.5" y2="770" stroke="#b8b8b8" stroke-dasharray="3,3"/>
<line x1="1114.5" y1="690" x2="1114.5" y2="770" stroke="#b8b8b8" stroke-dasharray="3,3"/>
<line x1="1144.5" y1="690" x2="1144.5" y2="770" stroke="#b8b8b8" stroke-dasharray="3,3"/>
<line x1="1174.5" y1="690" x2="1174.5" y2="770" stroke="#b8b8b8" stroke-dasharray="3,3"/>
<line x1="1204.5" y1="690" x2="1204.5" y2="770" stroke="#b8b8b8" stroke-dasharray="3,3"/>
<line x1="1234.5" y1="690" x2="1234.5" y2="770" stroke="#b8b8b8" stroke-dasharray="3,3"/>
<line x1="1258.5" y1="690" x2="1258.5" y2="770" stroke="#b8b8b8" stroke-dasharray="3,3"/>
<line x1="1288.5" y1="690" x2="1288.5" y2="770" stroke="#b8b8b8" stroke-dasharray="3,3"/>
<line x1="1318.5" y1="690" x2="1318.5" y2="770" stroke="#b8b8b8" stroke-dasharray="3,3"/>
<line x1="1348.5" y1="690" x2="1348.5" y2="770" stroke="#b8b8b8" stroke-dasharray="3,3"/>
<line x1="1378.5" y1="690" x2="1378.5" y2="770" stroke="#b8b8b8" stroke-dasharray="3,3"/>
<line x1="1402.5" y1="690" x2="1402.5" y2="770" stroke="#b8b8b8" stroke-dasharray="3,3"/>
<line x1="1408.5" y1="690" x2="1408.5" y2="770" stroke="#b8b8b8" stroke-dasharray="3,3"/>
<line x1="1438.5" y1="690" x2="1438.5" y2="770" stroke="#b8b8b8" stroke-dasharray="3,3"/>
<line x1="1462.5" y1="690" x2="1462.5" y2="770" stroke="#b8b8b8" stroke-dasharray="3,3"/>
<line x1="1492.5" y1="690" x2="1492.5" y2="770" stroke="#b8b8b8" stroke-dasharray="3,3"/>
<line x1="16.5" y1="768" x2="16.5" y2="873" stroke="#b8b8b8" stroke-dasharray="3,3"/>
<line x1="46.5" y1="768" x2="46.5" y2="873" stroke="#b8b8b8" stroke-dasharray="3,3"/>
<line x1="76.5" y1="768" x2="76.5" y2="873" stroke="#b8b8b8" stroke-dasharray="3,3"/>
<line x1="106.5" y1="768" x2="106.5" y2="873" stroke="#b8b8b8" stroke-dasharray="3,3"/>
<line x1="136.5" y1="768" x2="136.5" y2="873" stroke="#b8b8b8" stroke-dasharray="3,3"/>
<line x1="166.5" y1="768" x2="166.5" y2="873" stroke="#b8b8b8" stroke-dasharray="3,3"/>
<line x1="196.5" y1="768" x2="196.5" y2="873" stroke="#b8b8b8" stroke-dasharray="3,3"/>
<line x1="226.5" y1="768" x2="226.5" y2="873" stroke="#b8b8b8" stroke-dasharray="3,3"/>
<line x1="250.5" y1="768" x2="250.5" y2="873" stroke="#b8b8b8" stroke-dasharray="3,3"/>
<line x1="280.5" y1="768" x2="280.5" y2="873" stroke="#b8b8b8" stroke-dasharray="3,3"/>
<line x1="310.5" y1="768" x2="310.5" y2="873" stroke="#b8b8b8" stroke-dasharray="3,3"/>
<line x1="340.5" y1="768" x2="340.5" y2="873" stroke="#b8b8b8" stroke-dasharray="3,3"/>
<line x1="370.5" y1="768" x2="370.5" y2="873" stroke="#b8b8b8" stroke-dasharray="3,3"/>
<line x1="400.5" y1="768" x2="400.5" y2="873" stroke="#b8b8b8" stroke-dasharray="3,3"/>
<line x1="412.5" y1="768" x2="412.5" y2="873" stroke="#b8b8b8" stroke-dasharray="3,3"/>
<line x1="442.5" y1="768" x2="442.5" y2="873" stroke="#b8b8b8" stroke-dasharray="3,3"/>
<line x1="472.5" y1="768" x2="472.5" y2="873" stroke="#b8b8b8" stroke-dasharray="3,3"/>
<line x1="502.5" y1="768" x2="502.5" y2="873" stroke="#b8b8b8" stroke-dasharray="3,3"/>
<line x1="532.5" y1="768" x2="532.5" y2="873" stroke="#b8b8b8" stroke-dasharray="3,3"/>
<line x1="562.5" y1="768" x2="562.5" y2="873" stroke="#b8b8b8" stroke-dasharray="3,3"/>
<line x1="592.5" y1="768" x2="592.5" y2="873" stroke="#b8b8b8" stroke-dasharray="3,3"/>
<line x1="622.5" y1="768" x2="622.5" y2="873" stroke="#b8b8b8" stroke-dasharray="3,3"/>
<line x1="652.5" y1="768" x2="652.5" y2="873" stroke="#b8b8b8" stroke-dasharray="3,3"/>
<line x1="682.5" y1="768" x2="682.5" y2="873" stroke="#b8b8b8" stroke-dasharray="3,3"/>
<line x1="712.5" y1="768" x2="712.5" y2="873" stroke="#b8b8b8" stroke-dasharray="3,3"/>
<line x1="736.5" y1="768" x2="736.5" y2="873" stroke="#b8b8b8" stroke-dasharray="3,3"/>
<line x1="766.5" y1="768" x2="766.5" y2="873" stroke="#b8b8b8" stroke-dasharray="3,3"/>
<line x1="796.5" y1="768" x2="796.5" y2="873" stroke="#b8b8b8" stroke-dasharray="3,3"/>
<line x1="826.5" y1="768" x2="826.5" y2="873" stroke="#b8b8b8" stroke-dasharray="3,3"/>
<line x1="856.5" y1="768" x2="856.5" y2="873" stroke="#b8b8b8" stroke-dasharray="3,3"/>
<line x1="886.5" y1="768" x2="886.5" y2="873" stroke="#b8b8b8" stroke-dasharray="3,3"/>
<line x1="916.5" y1="768" x2="916.5" y2="873" stroke="#b8b8b8" stroke-dasharray="3,3"/>
<line x1="946.5" y1="768" x2="946.5" y2="873" stroke="#b8b8b8" stroke-dasharray="3,3"/>
<line x1="976.5" y1="768" x2="976.5" y2="873" stroke="#b8b8b8" stroke-dasharray="3,3"/>
<line x1="1000.5" y1="768" x2="1000.5" y2="873" stroke="#b8b8b8" stroke-dasharray="3,3"/>
<line x1="1030.5" y1="768" x2="1030.5" y2="873" stroke="#b8b8b8" stroke-dasharray="3,3"/>
<line x1="1060.5" y1="768" x2="1060.5" y2="873" stroke="#b8b8b8" stroke-dasharray="3,3"/>
<line x1="1084.5" y1="768" x2="1084.5" y2="873" stroke="#b8b8b8" stroke-dasharray="3,3"/>
<line x1="1114.5" y1="768" x2="1114.5" y2="873" stroke="#b8b8b8" stroke-dasharray="3,3"/>
<line x1="1144.5" y1="768" x2="1144.5" y2="873" stroke="#b8b8b8" stroke-dasharray="3,3"/>
<line x1="1174.5" y1="768" x2="1174.5" y2="873" stroke="#b8b8b8" stroke-dasharray="3,3"/>
<line x1="1204.5" y1="768" x2="1204.5" y2="873" stroke="#b8b8b8" stroke-dasharray="3,3"/>
<line x1="1234.5" y1="768" x2="1234.5" y2="873" stroke="#b8b8b8" stroke-dasharray="3,3"/>
<line x1="1258.5" y1="768" x2="1258.5" y2="873" stroke="#b8b8b8" stroke-dasharray="3,3"/>
<line x1="1288.5" y1="768" x2="1288.5" y2="873" stroke="#b8b8b8" stroke-dasharray="3,3"/>
<line x1="1318.5" y1="768" x2="1318.5" y2="873" stroke="#b8b8b8" stroke-dasharray="3,3"/>
<line x1="1348.5" y1="768" x2="1348.5" y2="873" stroke="#b8b8b8" stroke-dasharray="3,3"/>
<line x1="1378.5" y1="768" x2="1378.5" y2="873" stroke="#b8b8b8" stroke-dasharray="3,3"/>
<line x1="1402.5" y1="768" x2="1402.5" y2="873" stroke="#b8b8b8" stroke-dasharray="3,3"/>
<line x1="1408.5" y1="768" x2="1408.5" y2="873" stroke="#b8b8b8" stroke-dasharray="3,3"/>
<line x1="1438.5" y1="768" x2="1438.5" y2="873" stroke="#b8b8b8" stroke-dasharray="3,3"/>
<line x1="1462.5" y1="768" x2="1462.5" y2="873" stroke="#b8b8b8" stroke-dasharray="3,3"/>
<line x1="1492.5" y1="768" x2="1492.5" y2="873" stroke="#b8b8b8" stroke-dasharray="3,3"/>
<line x1="16.5" y1="870" x2="16.5" y2="949" stroke="#b8b8b8" stroke-dasharray="3,3"/>
<line x1="46.5" y1="870" x2="46.5" y2="949" stroke="#b8b8b8" stroke-dasharray="3,3"/>
<line x1="76.5" y1="870" x2="76.5" y2="949" stroke="#b8b8b8" stroke-dasharray="3,3"/>
<line x1="106.5" y1="870" x2="106.5" y2="949" stroke="#b8b8b8" stroke-dasharray="3,3"/>
<line x1="136.5" y1="870" x2="136.5" y2="949" stroke="#b8b8b8" stroke-dasharray="3,3"/>
<line x1="166.5" y1="870" x2="166.5" y2="949" stroke="#b8b8b8" stroke-dasharray="3,3"/>
<line x1="196.5" y1="870" x2="196.5" y2="949" stroke="#b8b8b8" stroke-dasharray="3,3"/>
<line x1="226.5" y1="870" x2="226.5" y2="949" stroke="#b8b8b8" stroke-dasharray="3,3"/>
<line x1="250.5" y1="870" x2="250.5" y2="949" stroke="#b8b8b8" stroke-dasharray="3,3"/>
<line x1="280.5" y1="870" x2="280.5" y2="949" stroke="#b8b8b8" stroke-dasharray="3,3"/>
<line x1="310.5" y1="870" x2="310.5" y2="949" stroke="#b8b8b8" stroke-dasharray="3,3"/>
<line x1="340.5" y1="870" x2="340.5" y2="949" stroke="#b8b8b8" stroke-dasharray="3,3"/>
<line x1="370.5" y1="870" x2="370.5" y2="949" stroke="#b8b8b8" stroke-dasharray="3,3"/>
<line x1="400.5" y1="870" x2="400.5" y2="949" stroke="#b8b8b8" stroke-dasharray="3,3"/>
<line x1="412.5" y1="870" x2="412.5" y2="949" stroke="#b8b8b8" stroke-dasharray="3,3"/>
<line x1="442.5" y1="870" x2="442.5" y2="949" stroke="#b8b8b8" stroke-dasharray="3,3"/>
<line x1="472.5" y1="870" x2="472.5" y2="949" stroke="#b8b8b8" stroke-dasharray="3,3"/>
<line x1="502.5" y1="870" x2="502.5" y2="949" stroke="#b8b8b8" stroke-dasharray="3,3"/>
<line x1="532.5" y1="870" x2="532.5" y2="949" stroke="#b8b8b8" stroke-dasharray="3,3"/>
<line x1="562.5" y1="870" x2="562.5" y2="949" stroke="#b8b8b8" stroke-dasharray="3,3"/>
<line x1="592.5" y1="870" x2="592.5" y2="949" stroke="#b8b8b8" stroke-dasharray="3,3"/>
<line x1="622.5" y1="870" x2="622.5" y2="949" stroke="#b8b8b8" stroke-dasharray="3,3"/>
<line x1="652.5" y1="870" x2="652.5" y2="949" stroke="#b8b8b8" stroke-dasharray="3,3"/>
<line x1="682.5" y1="870" x2="682.5" y2="949" stroke="#b8b8b8" stroke-dasharray="3,3"/>
<line x1="712.5" y1="870" x2="712.5" y2="949" stroke="#b8b8b8" stroke-dasharray="3,3"/>
<line x1="736.5" y1="870" x2="736.5" y2="949" stroke="#b8b8b8" stroke-dasharray="3,3"/>
<line x1="766.5" y1="870" x2="766.5" y2="949" stroke="#b8b8b8" stroke-dasharray="3,3"/>
<line x1="796.5" y1="870" x2="796.5" y2="949" stroke="#b8b8b8" stroke-dasharray="3,3"/>
<line x1="826.5" y1="870" x2="826.5" y2="949" stroke="#b8b8b8" stroke-dasharray="3,3"/>
<line x1="856.5" y1="870" x2="856.5" y2="949" stroke="#b8b8b8" stroke-dasharray="3,3"/>
<line x1="886.5" y1="870" x2="886.5" y2="949" stroke="#b8b8b8" stroke-dasharray="3,3"/>
<line x1="916.5" y1="870" x2="916.5" y2="949" stroke="#b8b8b8" stroke-dasharray="3,3"/>
<line x1="946.5" y1="870" x2="946.5" y2="949" stroke="#b8b8b8" stroke-dasharray="3,3"/>
<line x1="976.5" y1="870" x2="976.5" y2="949" stroke="#b8b8b8" stroke-dasharray="3,3"/>
<line x1="1000.5" y1="870" x2="1000.5" y2="949" stroke="#b8b8b8" stroke-dasharray="3,3"/>
<line x1="1030.5" y1="870" x2="1030.5" y2="949" stroke="#b8b8b8" stroke-dasharray="3,3"/>
<line x1="1060.5" y1="870" x2="1060.5" y2="949" stroke="#b8b8b8" stroke-dasharray="3,3"/>
<line x1="1084.5" y1="870" x2="1084.5" y2="949" stroke="#b8b8b8" stroke-dasharray="3,3"/>
<line x1="1114.5" y1="870" x2="1114.5" y2="949" stroke="#b8b8b8" stroke-dasharray="3,3"/>
<line x1="1144.5" y1="870" x2="1144.5" y2="949" stroke="#b8b8b8" stroke-dasharray="3,3"/>
<line x1="1174.5" y1="870" x2="1174.5" y2="949" stroke="#b8b8b8" stroke-dasharray="3,3"/>
<line x1="1204.5" y1="870" x2="1204.5" y2="949" stroke="#b8b8b8" stroke-dasharray="3,3"/>
<line x1="1234.5" y1="870" x2="1234.5" y2="949" stroke="#b8b8b8" stroke-dasharray="3,3"/>
<line x1="1258.5" y1="870" x2="1258.5" y2="949" stroke="#b8b8b8" stroke-dasharray="3,3"/>
<line x1="1288.5" y1="870" x2="1288.5" y2="949" stroke="#b8b8b8" stroke-dasharray="3,3"/>
<line x1="1318.5" y1="870" x2="1318.5" y2="949" stroke="#b8b8b8" stroke-dasharray="3,3"/>
<line x1="1348.5" y1="870" x2="1348.5" y2="949" stroke="#b8b8b8" stroke-dasharray="3,3"/>
<line x1="1378.5" y1="870" x2="1378.5" y2="949" stroke="#b8b8b8" stroke-dasharray="3,3"/>
<line x1="1402.5" y1="870" x2="1402.5" y2="949" stroke="#b8b8b8" stroke-dasharray="3,3"/>
<line x1="1408.5" y1="870" x2="1408.5" y2="949" stroke="#b8b8b8" stroke-dasharray="3,3"/>
<line x1="1438.5" y1="870" x2="1438.5" y2="949" stroke="#b8b8b8" stroke-dasharray="3,3"/>
<line x1="1462.5" y1="870" x2="1462.5" y2="949" stroke="#b8b8b8" stroke-dasharray="3,3"/>
<line x1="1492.5" y1="870" x2="1492.5" y2="949" stroke="#b8b8b8" stroke-dasharray="3,3"/>
<line x1="11" y1="164.5" x2="1527" y2="164.5" stroke="#b8b8b8" stroke-dasharray="3,3"/>
<line x1="11" y1="273.5" x2="1527" y2="273.5" stroke="#b8b8b8" stroke-dasharray="3,3"/>
<line x1="1528" y1="273.5" x2="1533" y2="273.5" stroke="#000"/>
<text x="1537" y="278" fill="#000" font-size="14" text-anchor="start" font-weight="normal" textLength="51" lengthAdjust="spacingAndGlyphs">10000.00</text>
<line x1="11" y1="381.5" x2="1527" y2="381.5" stroke="#b8b8b8" stroke-dasharray="3,3"/>
<line x1="1528" y1="381.5" x2="1533" y2="381.5" stroke="#000"/>
<text x="1537" y="386" fill="#000" font-size="14" text-anchor="start" font-weight="normal" textLength="44" lengthAdjust="spacingAndGlyphs">9000.00</text>
<line x1="1528" y1="219.5" x2="1532" y2="219.5" stroke="#000"/>
<line x1="1528" y1="327.5" x2="1532" y2="327.5" stroke="#000"/>
<line x1="1528" y1="435.5" x2="1532" y2="435.5" stroke="#000"/>
<line x1="1528" y1="110.5" x2="1533" y2="110.5" stroke="#000"/>
<line x1="11" y1="499.5" x2="1527" y2="499.5" stroke="#b8b8b8" stroke-dasharray="3,3"/>
<line x1="1528" y1="499.5" x2="1533" y2="499.5" stroke="#000"/>
<text x="1537" y="504" fill="#000" font-size="14" text-anchor="start" font-weight="normal" textLength="37" lengthAdjust="spacingAndGlyphs">400.00</text>
<line x1="11" y1="524.5" x2="1527" y2="524.5" stroke="#b8b8b8" stroke-dasharray="3,3"/>
<line x1="1528" y1="524.5" x2="1533" y2="524.5" stroke="#000"/>
<text x="1537" y="529" fill="#000" font-size="14" text-anchor="start" font-weight="normal" textLength="37" lengthAdjust="spacingAndGlyphs">200.00</text>
<line x1="11" y1="575.5" x2="1527" y2="575.5" stroke="#b8b8b8" stroke-dasharray="3,3"/>
<line x1="1528" y1="575.5" x2="1533" y2="575.5" stroke="#000"/>
<text x="1537" y="580" fill="#000" font-size="14" text-anchor="start" font-weight="normal" textLength="44" lengthAdjust="spacingAndGlyphs">&#8722;200.00</text>
<line x1="1528" y1="550.5" x2="1533" y2="550.5" stroke="#000"/>
<text x="1537" y="555" fill="#000" font-size="14" text-anchor="start" font-weight="normal" textLength="23" lengthAdjust="spacingAndGlyphs">0.00</text>
<line x1="1528" y1="487.5" x2="1532" y2="487.5" stroke="#000"/>
<line x1="1528" y1="512.5" x2="1532" y2="512.5" stroke="#000"/>
<line x1="1528" y1="537.5" x2="1532" y2="537.5" stroke="#000"/>
<line x1="1528" y1="563.5" x2="1532" y2="563.5" stroke="#000"/>
<line x1="1528" y1="588.5" x2="1532" y2="588.5" stroke="#000"/>
<line x1="11" y1="607.5" x2="1527" y2="607.5" stroke="#b8b8b8" stroke-dasharray="3,3"/>
<line x1="1528" y1="607.5" x2="1533" y2="607.5" stroke="#000"/>
<text x="1537" y="612" fill="#000" font-size="14" text-anchor="start" font-weight="normal" textLength="37" lengthAdjust="spacingAndGlyphs">100.00</text>
<line x1="11" y1="650.5" x2="1527" y2="650.5" stroke="#b8b8b8" stroke-dasharray="3,3"/>
<line x1="1528" y1="650.5" x2="1533" y2="650.5" stroke="#000"/>
<text x="1537" y="655" fill="#000" font-size="14" text-anchor="start" font-weight="normal" textLength="30" lengthAdjust="spacingAndGlyphs">50.00</text>
<line x1="11" y1="709.5" x2="1527" y2="709.5" stroke="#b8b8b8" stroke-dasharray="3,3"/>
<line x1="1528" y1="709.5" x2="1533" y2="709.5" stroke="#000"/>
<text x="1537" y="714" fill="#000" font-size="14" text-anchor="start" font-weight="normal" textLength="37" lengthAdjust="spacingAndGlyphs">110.00</text>
<line x1="11" y1="742.5" x2="1527" y2="742.5" stroke="#b8b8b8" stroke-dasharray="3,3"/>
<line x1="1528" y1="742.5" x2="1533" y2="742.5" stroke="#000"/>
<text x="1537" y="747" fill="#000" font-size="14" text-anchor="start" font-weight="normal" textLength="37" lengthAdjust="spacingAndGlyphs">100.00</text>
<line x1="1528" y1="726.5" x2="1532" y2="726.5" stroke="#000"/>
<line x1="1528" y1="758.5" x2="1532" y2="758.5" stroke="#000"/>
<line x1="11" y1="797.5" x2="1527" y2="797.5" stroke="#b8b8b8" stroke-dasharray="3,3"/>
<line x1="1528" y1="797.5" x2="1533" y2="797.5" stroke="#000"/>
<text x="1537" y="802" fill="#000" font-size="14" text-anchor="start" font-weight="normal" textLength="30" lengthAdjust="spacingAndGlyphs">80.00</text>
<line x1="11" y1="819.5" x2="1527" y2="819.5" stroke="#b8b8b8" stroke-dasharray="3,3"/>
<line x1="1528" y1="819.5" x2="1533" y2="819.5" stroke="#000"/>
<text x="1537" y="824" fill="#000" font-size="14" text-anchor="start" font-weight="normal" textLength="30" lengthAdjust="spacingAndGlyphs">60.00</text>
<line x1="11" y1="841.5" x2="1527" y2="841.5" stroke="#b8b8b8" stroke-dasharray="3,3"/>
<line x1="1528" y1="841.5" x2="1533" y2="841.5" stroke="#000"/>
<text x="1537" y="846" fill="#000" font-size="14" text-anchor="start" font-weight="normal" textLength="30" lengthAdjust="spacingAndGlyphs">40.00</text>
<line x1="11" y1="863.5" x2="1527" y2="863.5" stroke="#b8b8b8" stroke-dasharray="3,3"/>
<line x1="1528" y1="863.5" x2="1533" y2="863.5" stroke="#000"/>
<text x="1537" y="868" fill="#000" font-size="14" text-anchor="start" font-weight="normal" textLength="30" lengthAdjust="spacingAndGlyphs">20.00</text>
<line x1="1528" y1="775.5" x2="1532" y2="775.5" stroke="#000"/>
<line x1="1528" y1="786.5" x2="1532" y2="786.5" stroke="#000"/>
<line x1="1528" y1="808.5" x2="1532" y2="808.5" stroke="#000"/>
<line x1="1528" y1="830.5" x2="1532" y2="830.5" stroke="#000"/>
<line x1="1528" y1="852.5" x2="1532" y2="852.5" stroke="#000"/>
<line x1="1528" y1="874.5" x2="1532" y2="874.5" stroke="#000"/>
<line x1="11" y1="899.5" x2="1527" y2="899.5" stroke="#b8b8b8" stroke-dasharray="3,3"/>
<line x1="1528" y1="899.5" x2="1533" y2="899.5" stroke="#000"/>
<text x="1537" y="904" fill="#000" font-size="14" text-anchor="start" font-weight="normal" textLength="51" lengthAdjust="spacingAndGlyphs">40000.00</text>
<line x1="11" y1="933.5" x2="1527" y2="933.5" stroke="#b8b8b8" stroke-dasharray="3,3"/>
<line x1="1528" y1="933.5" x2="1533" y2="933.5" stroke="#000"/>
<text x="1537" y="938" fill="#000" font-size="14" text-anchor="start" font-weight="normal" textLength="51" lengthAdjust="spacingAndGlyphs">20000.00</text>
<line x1="1528" y1="882.5" x2="1532" y2="882.5" stroke="#000"/>
<line x1="1528" y1="916.5" x2="1532" y2="916.5" stroke="#000"/>
<svg x="11" y="102" width="1516" height="379" viewBox="11 102 1516 379" overflow="hidden">
<polyline points="10.5,389.9 16.5,387.7 22.5,385.5 28.5,383.2 34.5,380.0 40.5,378.1 46.5,376.0 52.5,374.3 58.5,371.0 64.5,369.8 70.5,369.1 76.5,371.2 82.5,371.8 88.5,365.5 94.5,360.3 100.5,350.8 106.5,340.4 112.5,332.2 118.5,322.7 124.5,313.8 130.5,305.0 136.5,298.8 142.5,291.5 148.5,285.5 154.5,280.9 160.5,276.7 166.5,274.3 172.5,274.0 178.5,274.2 184.5,272.8 190.5,270.7 196.5,271.3 202.5,272.8 208.5,268.4 214.5,263.8 220.5,258.6 226.5,253.6 232.5,251.2 238.5,247.6 244.5,246.6 250.5,245.5 256.5,240.3 262.5,237.0 268.5,235.3 274.5,234.9 280.5,233.8 286.5,234.6 292.5,237.0 298.5,240.9 304.5,239.4 310.5,234.4 316.5,230.6 322.5,226.6 328.5,225.6 334.5,227.4 340.5,228.3 346.5,230.1 352.5,232.9 358.5,236.8 364.5,239.0 370.5,241.8 376.5,250.5 382.5,258.9 388.5,266.9 394.5,274.7 400.5,285.0 406.5,296.6 412.5,296.3 418.5,297.7 424.5,296.1 430.5,293.6 436.5,291.5 442.5,289.9 448.5,289.1 454.5,290.1 460.5,290.7 466.5,288.4 472.5,292.2 478.5,296.9 484.5,300.3 490.5,305.3 496.5,310.4 502.5,318.9 508.5,330.0 514.5,342.0 520.5,350.3 526.5,360.9 532.5,363.8 538.5,370.6 544.5,376.4 550.5,382.2 556.5,387.3 562.5,393.4 568.5,398.8 574.5,402.0 580.5,408.4 586.5,408.7 592.5,407.5 598.5,409.1 604.5,405.9 610.5,401.4 616.5,398.1 622.5,396.4 628.5,396.5 634.5,395.3 640.5,390.8 646.5,384.4 652.5,381.4 658.5,376.4 664.5,370.3 670.5,365.2 676.5,363.5 682.5,362.8 688.5,363.5 694.5,364.0 700.5,365.1 706.5,366.5 712.5,366.7 718.5,367.2 724.5,367.3 730.5,366.8 736.5,364.3 742.5,362.0 748.5,358.5 754.5,356.8 760.5,357.6 766.5,360.4 772.5,363.5 778.5,368.7 784.5,375.3 790.5,382.6 796.5,388.5 802.5,390.2 808.5,389.8 814.5,386.5 820.5,383.8 826.5,381.5 832.5,378.8 838.5,376.2 844.5,370.3 850.5,362.8 856.5,356.7 862.5,352.4 868.5,351.1 874.5,349.0 880.5,348.2 886.5,347.2 892.5,346.8 898.5,347.0 904.5,348.6 910.5,353.2 916.5,354.0 922.5,353.6 928.5,351.3 934.5,349.7 940.5,349.7 946.5,349.7 952.5,349.4 958.5,349.3 964.5,350.4 970.5,350.3 976.5,351.1 982.5,349.4 988.5,350.1 994.5,351.4 1000.5,351.5 1006.5,351.4 1012.5,352.1 1018.5,353.4 1024.5,353.8 1030.5,353.7 1036.5,353.7 1042.5,353.5 1048.5,354.6 1054.5,356.0 1060.5,355.5 1066.5,352.9 1072.5,350.2 1078.5,348.5 1084.5,348.6 1090.5,352.6 1096.5,356.2 1102.5,361.4 1108.5,362.9 1114.5,364.9 1120.5,365.9 1126.5,368.6 1132.5,366.0 1138.5,366.2 1144.5,365.6 1150.5,365.4 1156.5,364.3 1162.5,363.0 1168.5,360.3 1174.5,358.8 1180.5,357.8 1186.5,358.2 1192.5,360.9 1198.5,364.6 1204.5,366.5 1210.5,365.8 1216.5,364.4 1222.5,365.3 1228.5,365.0 1234.5,362.2 1240.5,359.9 1246.5,355.1 1252.5,348.1 1258.5,340.5 1264.5,332.8 1270.5,328.8 1276.5,323.4 1282.5,317.8 1288.5,312.7 1294.5,308.2 1300.5,303.7 1306.5,298.2 1312.5,294.3 1318.5,292.0 1324.5,292.5 1330.5,294.5 1336.5,295.9 1342.5,296.7 1348.5,293.1 1354.5,286.3 1360.5,273.9 1366.5,267.3 1372.5,263.0 1378.5,256.6 1384.5,247.1 1390.5,237.9 1396.5,228.3 1402.5,211.8 1408.5,200.9 1414.5,194.1 1420.5,187.2 1426.5,179.6 1432.5,170.8 1438.5,162.3 1444.5,161.6 1450.5,161.9 1456.5,156.1 1462.5,155.5 1468.5,156.0 1474.5,158.7 1480.5,158.2 1486.5,155.5 1492.5,158.8 1498.5,161.2 1504.5,156.3 1510.5,151.0 1516.5,145.6" fill="none" stroke="#f05a14" stroke-width="1" shape-rendering="crispEdges"/>
<polyline points="10.5,465.0 16.5,463.5 22.5,461.4 28.5,459.9 34.5,459.7 40.5,458.0 46.5,454.6 52.5,451.1 58.5,448.3 64.5,442.8 70.5,438.8 76.5,430.2 82.5,423.3 88.5,422.0 94.5,420.7 100.5,423.6 106.5,426.4 112.5,427.2 118.5,429.5 124.5,430.4 130.5,430.4 136.5,427.4 142.5,424.7 148.5,420.9 154.5,416.6 160.5,410.4 166.5,404.4 172.5,396.8 178.5,390.6 184.5,383.7 190.5,375.1 196.5,364.7 202.5,354.1 208.5,350.0 214.5,345.0 220.5,342.0 226.5,339.9 232.5,335.7 238.5,333.2 244.5,329.8 250.5,327.0 256.5,325.3 262.5,323.6 268.5,320.9 274.5,317.4 280.5,314.8 286.5,310.1 292.5,305.8 298.5,299.7 304.5,302.2 310.5,311.4 316.5,319.0 322.5,327.8 328.5,334.3 334.5,337.8 340.5,344.0 346.5,349.7 352.5,351.3 358.5,353.3 364.5,355.9 370.5,358.3 376.5,358.2 382.5,356.6 388.5,354.6 394.5,352.8 400.5,350.8 406.5,346.4 412.5,354.4 418.5,359.5 424.5,368.2 430.5,376.5 436.5,384.9 442.5,391.9 448.5,399.6 454.5,407.7 460.5,413.6 466.5,425.1 472.5,432.5 478.5,437.1 484.5,444.5 490.5,450.1 496.5,454.7 502.5,456.7 508.5,455.5 514.5,453.2 520.5,453.6 526.5,453.2 532.5,459.3 538.5,460.9 544.5,460.6 550.5,458.9 556.5,459.1 562.5,456.6 568.5,455.2 574.5,454.2 580.5,451.1 586.5,451.1 592.5,451.6 598.5,450.9 604.5,451.8 610.5,453.4 616.5,454.3 622.5,454.3 628.5,454.3 634.5,454.4 640.5,455.2 646.5,455.6 652.5,450.9 658.5,448.4 664.5,448.3 670.5,448.6 676.5,444.2 682.5,442.1 688.5,438.0 694.5,434.7 700.5,432.0 706.5,429.0 712.5,428.3 718.5,426.9 724.5,426.5 730.5,428.7 736.5,434.5 742.5,439.6 748.5,446.2 754.5,450.9 760.5,453.6 766.5,454.7 772.5,455.0 778.5,454.4 784.5,452.7 790.5,451.1 796.5,448.3 802.5,447.5 808.5,447.7 814.5,449.6 820.5,450.3 826.5,450.9 832.5,451.7 838.5,452.2 844.5,454.8 850.5,457.0 856.5,455.8 862.5,452.9 868.5,445.9 874.5,440.0 880.5,435.3 886.5,431.4 892.5,428.1 898.5,423.2 904.5,418.0 910.5,410.5 916.5,409.1 922.5,409.9 928.5,414.2 934.5,419.0 940.5,419.2 946.5,419.4 952.5,421.0 958.5,420.6 964.5,420.6 970.5,420.7 976.5,420.4 982.5,421.2 988.5,421.0 994.5,420.5 1000.5,420.5 1006.5,420.5 1012.5,421.1 1018.5,421.3 1024.5,422.2 1030.5,422.8 1036.5,422.8 1042.5,423.3 1048.5,420.6 1054.5,417.3 1060.5,418.9 1066.5,424.5 1072.5,430.0 1078.5,436.5 1084.5,440.9 1090.5,441.9 1096.5,441.6 1102.5,439.1 1108.5,438.4 1114.5,437.5 1120.5,437.0 1126.5,435.8 1132.5,436.7 1138.5,436.7 1144.5,436.6 1150.5,436.4 1156.5,435.8 1162.5,434.8 1168.5,435.0 1174.5,434.9 1180.5,433.9 1186.5,429.5 1192.5,423.6 1198.5,417.4 1204.5,414.6 1210.5,415.7 1216.5,418.6 1222.5,419.4 1228.5,419.5 1234.5,420.8 1240.5,421.7 1246.5,423.6 1252.5,427.3 1258.5,430.0 1264.5,432.2 1270.5,431.0 1276.5,431.4 1282.5,431.7 1288.5,432.4 1294.5,432.2 1300.5,431.3 1306.5,430.5 1312.5,426.8 1318.5,420.7 1324.5,410.9 1330.5,398.9 1336.5,385.8 1342.5,375.1 1348.5,370.1 1354.5,368.5 1360.5,369.7 1366.5,367.6 1372.5,365.7 1378.5,364.7 1384.5,365.5 1390.5,363.7 1396.5,362.6 1402.5,365.6 1408.5,364.1 1414.5,359.3 1420.5,354.1 1426.5,349.7 1432.5,344.7 1438.5,338.6 1444.5,327.6 1450.5,316.3 1456.5,309.4 1462.5,299.0 1468.5,289.0 1474.5,280.2 1480.5,275.7 1486.5,268.6 1492.5,255.6 1498.5,244.6 1504.5,239.9 1510.5,236.3 1516.5,233.1" fill="none" stroke="#1e64dc" stroke-width="1" shape-rendering="crispEdges"/>
<polyline points="10.5,427.5 16.5,425.6 22.5,423.5 28.5,421.5 34.5,419.9 40.5,418.1 46.5,415.3 52.5,412.7 58.5,409.7 64.5,406.3 70.5,404.0 76.5,400.7 82.5,397.6 88.5,393.7 94.5,390.5 100.5,387.2 106.5,383.4 112.5,379.7 118.5,376.1 124.5,372.1 130.5,367.7 136.5,363.1 142.5,358.1 148.5,353.2 154.5,348.7 160.5,343.6 166.5,339.3 172.5,335.4 178.5,332.4 184.5,328.2 190.5,322.9 196.5,318.0 202.5,313.4 208.5,309.2 214.5,304.4 220.5,300.3 226.5,296.8 232.5,293.5 238.5,290.4 244.5,288.2 250.5,286.2 256.5,282.8 262.5,280.3 268.5,278.1 274.5,276.1 280.5,274.3 286.5,272.4 292.5,271.4 298.5,270.3 304.5,270.8 310.5,272.9 316.5,274.8 322.5,277.2 328.5,279.9 334.5,282.6 340.5,286.2 346.5,289.9 352.5,292.1 358.5,295.1 364.5,297.5 370.5,300.0 376.5,304.3 382.5,307.7 388.5,310.8 394.5,313.7 400.5,317.9 406.5,321.5 412.5,325.3 418.5,328.6 424.5,332.1 430.5,335.0 436.5,338.2 442.5,340.9 448.5,344.4 454.5,348.9 460.5,352.2 466.5,356.7 472.5,362.3 478.5,367.0 484.5,372.4 490.5,377.7 496.5,382.6 502.5,387.8 508.5,392.8 514.5,397.6 520.5,401.9 526.5,407.1 532.5,411.5 538.5,415.8 544.5,418.5 550.5,420.5 556.5,423.2 562.5,425.0 568.5,427.0 574.5,428.1 580.5,429.7 586.5,429.9 592.5,429.5 598.5,430.0 604.5,428.8 610.5,427.4 616.5,426.2 622.5,425.4 628.5,425.4 634.5,424.8 640.5,423.0 646.5,420.0 652.5,416.2 658.5,412.4 664.5,409.3 670.5,406.9 676.5,403.9 682.5,402.5 688.5,400.7 694.5,399.3 700.5,398.6 706.5,397.8 712.5,397.5 718.5,397.1 724.5,396.9 730.5,397.7 736.5,399.4 742.5,400.8 748.5,402.4 754.5,403.9 760.5,405.6 766.5,407.6 772.5,409.2 778.5,411.6 784.5,414.0 790.5,416.8 796.5,418.4 802.5,418.9 808.5,418.8 814.5,418.0 820.5,417.1 826.5,416.2 832.5,415.3 838.5,414.2 844.5,412.6 850.5,409.9 856.5,406.3 862.5,402.6 868.5,398.5 874.5,394.5 880.5,391.7 886.5,389.3 892.5,387.5 898.5,385.1 904.5,383.3 910.5,381.8 916.5,381.5 922.5,381.7 928.5,382.8 934.5,384.4 940.5,384.4 946.5,384.5 952.5,385.2 958.5,385.0 964.5,385.5 970.5,385.5 976.5,385.7 982.5,385.3 988.5,385.6 994.5,385.9 1000.5,386.0 1006.5,385.9 1012.5,386.6 1018.5,387.3 1024.5,388.0 1030.5,388.2 1036.5,388.2 1042.5,388.4 1048.5,387.6 1054.5,386.6 1060.5,387.2 1066.5,388.7 1072.5,390.1 1078.5,392.5 1084.5,394.7 1090.5,397.2 1096.5,398.9 1102.5,400.2 1108.5,400.7 1114.5,401.2 1120.5,401.5 1126.5,402.2 1132.5,401.4 1138.5,401.4 1144.5,401.1 1150.5,400.9 1156.5,400.0 1162.5,398.9 1168.5,397.6 1174.5,396.9 1180.5,395.8 1186.5,393.8 1192.5,392.2 1198.5,391.0 1204.5,390.5 1210.5,390.7 1216.5,391.5 1222.5,392.4 1228.5,392.2 1234.5,391.5 1240.5,390.8 1246.5,389.4 1252.5,387.7 1258.5,385.2 1264.5,382.5 1270.5,379.9 1276.5,377.4 1282.5,374.7 1288.5,372.6 1294.5,370.2 1300.5,367.5 1306.5,364.3 1312.5,360.6 1318.5,356.3 1324.5,351.7 1330.5,346.7 1336.5,340.9 1342.5,335.9 1348.5,331.6 1354.5,327.4 1360.5,321.8 1366.5,317.4 1372.5,314.3 1378.5,310.7 1384.5,306.3 1390.5,300.8 1396.5,295.5 1402.5,288.7 1408.5,282.5 1414.5,276.7 1420.5,270.7 1426.5,264.7 1432.5,257.7 1438.5,250.4 1444.5,244.6 1450.5,239.1 1456.5,232.7 1462.5,227.3 1468.5,222.5 1474.5,219.5 1480.5,216.9 1486.5,212.1 1492.5,207.2 1498.5,202.9 1504.5,198.1 1510.5,193.6 1516.5,189.3" fill="none" stroke="#0a8c32" stroke-width="1" shape-rendering="crispEdges"/>
<polyline points="10.5,414.2 16.5,410.0 22.5,406.5 28.5,403.6 34.5,401.1 40.5,400.6 46.5,399.0 52.5,397.7 58.5,396.4 64.5,394.7 70.5,393.7 76.5,391.4 82.5,388.7 88.5,383.9 94.5,379.9 100.5,373.8 106.5,367.7 112.5,361.7 118.5,355.8 124.5,349.4 130.5,341.8 136.5,334.8 142.5,327.5 148.5,322.6 154.5,317.5 160.5,313.3 166.5,311.0 172.5,309.1 178.5,308.9 184.5,307.1 190.5,304.0 196.5,301.2 202.5,299.3 208.5,295.9 214.5,291.2 220.5,287.4 226.5,282.6 232.5,277.8 238.5,271.8 244.5,269.3 250.5,268.5 256.5,264.4 262.5,261.3 268.5,260.4 274.5,261.1 280.5,261.3 286.5,262.1 292.5,264.9 298.5,268.9 304.5,272.3 310.5,277.3 316.5,285.2 322.5,293.1 328.5,299.5 334.5,304.1 340.5,311.1 346.5,317.6 352.5,319.3 358.5,321.3 364.5,322.7 370.5,322.7 376.5,323.4 382.5,322.4 388.5,322.1 394.5,323.4 400.5,324.7 406.5,325.4 412.5,331.4 418.5,336.0 424.5,341.6 430.5,347.3 436.5,352.9 442.5,359.3 448.5,366.6 454.5,374.5 460.5,379.6 466.5,388.0 472.5,393.3 478.5,398.0 484.5,403.3 490.5,408.1 496.5,412.2 502.5,416.3 508.5,418.9 514.5,420.7 520.5,424.3 526.5,426.1 532.5,429.8 538.5,433.6 544.5,433.8 550.5,432.9 556.5,434.2 562.5,433.7 568.5,435.0 574.5,435.5 580.5,435.2 586.5,433.7 592.5,429.3 598.5,426.3 604.5,423.9 610.5,421.9 616.5,418.2 622.5,417.0 628.5,415.7 634.5,414.2 640.5,410.8 646.5,406.2 652.5,403.0 658.5,398.4 664.5,394.7 670.5,391.9 676.5,389.6 682.5,387.9 688.5,385.8 694.5,384.5 700.5,386.3 706.5,389.3 712.5,392.0 718.5,395.8 724.5,399.1 730.5,403.6 736.5,409.2 742.5,413.6 748.5,418.9 754.5,423.3 760.5,424.8 766.5,425.8 772.5,426.5 778.5,427.3 784.5,428.9 790.5,430.1 796.5,427.6 802.5,424.1 808.5,418.6 814.5,412.8 820.5,409.3 826.5,406.6 832.5,404.0 838.5,401.0 844.5,396.2 850.5,389.7 856.5,384.9 862.5,381.2 868.5,378.3 874.5,376.1 880.5,374.1 886.5,372.0 892.5,370.9 898.5,369.2 904.5,370.4 910.5,374.0 916.5,378.1 922.5,382.2 928.5,387.2 934.5,392.6 940.5,394.7 946.5,397.1 952.5,399.5 958.5,400.7 964.5,400.6 970.5,397.0 976.5,393.3 982.5,388.3 988.5,383.9 994.5,379.3 1000.5,377.3 1006.5,374.8 1012.5,373.7 1018.5,373.9 1024.5,375.4 1030.5,379.4 1036.5,383.1 1042.5,388.5 1048.5,391.3 1054.5,393.9 1060.5,397.1 1066.5,402.6 1072.5,406.5 1078.5,411.0 1084.5,414.1 1090.5,415.0 1096.5,414.7 1102.5,412.0 1108.5,410.0 1114.5,408.4 1120.5,405.8 1126.5,401.8 1132.5,396.2 1138.5,391.9 1144.5,388.1 1150.5,386.7 1156.5,385.4 1162.5,385.8 1168.5,385.3 1174.5,385.3 1180.5,385.9 1186.5,385.9 1192.5,388.3 1198.5,390.1 1204.5,392.9 1210.5,394.8 1216.5,397.6 1222.5,398.9 1228.5,399.2 1234.5,397.7 1240.5,395.8 1246.5,392.9 1252.5,387.1 1258.5,380.3 1264.5,372.0 1270.5,365.0 1276.5,357.2 1282.5,350.6 1288.5,345.9 1294.5,342.8 1300.5,339.3 1306.5,335.8 1312.5,334.0 1318.5,332.4 1324.5,331.4 1330.5,328.3 1336.5,324.6 1342.5,321.3 1348.5,317.2 1354.5,312.0 1360.5,304.4 1366.5,299.1 1372.5,294.7 1378.5,288.9 1384.5,281.3 1390.5,273.3 1396.5,266.4 1402.5,256.1 1408.5,247.8 1414.5,241.5 1420.5,237.0 1426.5,230.2 1432.5,220.8 1438.5,211.9 1444.5,207.9 1450.5,204.8 1456.5,199.1 1462.5,198.5 1468.5,197.2 1474.5,197.4 1480.5,196.9 1486.5,193.9 1492.5,193.7 1498.5,193.9 1504.5,188.3 1510.5,182.4 1516.5,179.6" fill="none" stroke="#ff9614" stroke-width="1" shape-rendering="crispEdges"/>
<polyline points="10.5,399.9 16.5,399.9 22.5,399.6 28.5,401.1 34.5,400.6 40.5,401.2 46.5,398.2 52.5,395.8 58.5,391.6 64.5,388.8 70.5,386.1 76.5,384.5 82.5,381.5 88.5,376.1 94.5,371.0 100.5,361.5 106.5,350.9 112.5,341.9 118.5,335.5 124.5,327.8 130.5,322.0 136.5,318.7 142.5,313.2 148.5,309.6 154.5,307.3 160.5,304.6 166.5,303.2 172.5,305.1 178.5,308.3 184.5,306.9 190.5,303.3 196.5,299.2 202.5,293.5 208.5,283.4 214.5,275.6 220.5,271.4 226.5,266.0 232.5,262.0 238.5,260.2 244.5,263.0 250.5,265.6 256.5,262.8 262.5,260.5 268.5,260.7 274.5,259.1 280.5,256.9 286.5,261.4 292.5,269.4 298.5,277.1 304.5,285.4 310.5,297.7 316.5,309.0 322.5,316.8 328.5,321.9 334.5,322.8 340.5,324.4 346.5,326.3 352.5,321.8 358.5,320.6 364.5,322.6 370.5,321.0 376.5,320.6 382.5,323.1 388.5,323.5 394.5,324.1 400.5,328.4 406.5,330.3 412.5,339.7 418.5,348.4 424.5,359.0 430.5,366.3 436.5,375.5 442.5,378.9 448.5,384.9 454.5,390.0 460.5,393.0 466.5,400.6 472.5,407.6 478.5,411.1 484.5,416.5 490.5,423.2 496.5,423.8 502.5,425.1 508.5,426.7 514.5,424.9 520.5,425.3 526.5,428.3 532.5,434.5 538.5,440.5 544.5,442.6 550.5,440.6 556.5,440.1 562.5,433.0 568.5,429.6 574.5,428.4 580.5,429.9 586.5,427.4 592.5,425.6 598.5,423.1 604.5,419.5 610.5,414.0 616.5,409.0 622.5,408.4 628.5,408.3 634.5,408.9 640.5,407.7 646.5,403.4 652.5,397.6 658.5,388.5 664.5,380.5 670.5,376.1 676.5,375.8 682.5,378.2 688.5,383.0 694.5,388.5 700.5,396.5 706.5,402.9 712.5,405.8 718.5,408.5 724.5,409.6 730.5,410.6 736.5,415.5 742.5,421.5 748.5,429.3 754.5,436.9 760.5,439.0 766.5,436.2 772.5,431.5 778.5,425.4 784.5,420.9 790.5,421.2 796.5,419.1 802.5,416.7 808.5,411.8 814.5,404.7 820.5,397.5 826.5,394.1 832.5,391.4 838.5,390.3 844.5,387.7 850.5,381.9 856.5,375.8 862.5,371.0 868.5,366.4 874.5,364.6 880.5,366.4 886.5,368.1 892.5,370.7 898.5,372.0 904.5,376.3 910.5,381.5 916.5,388.1 922.5,393.7 928.5,402.3 934.5,408.9 940.5,407.9 946.5,406.0 952.5,405.3 958.5,399.2 964.5,392.3 970.5,386.2 976.5,380.7 982.5,371.3 988.5,368.7 994.5,366.3 1000.5,368.4 1006.5,368.9 1012.5,376.1 1018.5,379.2 1024.5,384.6 1030.5,390.5 1036.5,397.4 1042.5,400.9 1048.5,403.4 1054.5,403.3 1060.5,403.8 1066.5,407.8 1072.5,412.1 1078.5,418.6 1084.5,424.8 1090.5,426.3 1096.5,421.5 1102.5,411.8 1108.5,401.5 1114.5,392.1 1120.5,385.2 1126.5,382.1 1132.5,380.6 1138.5,382.2 1144.5,384.2 1150.5,388.2 1156.5,388.7 1162.5,391.0 1168.5,388.3 1174.5,386.5 1180.5,383.6 1186.5,383.0 1192.5,385.5 1198.5,392.0 1204.5,399.4 1210.5,406.0 1216.5,412.2 1222.5,412.3 1228.5,406.5 1234.5,396.0 1240.5,385.5 1246.5,373.5 1252.5,362.0 1258.5,354.1 1264.5,348.1 1270.5,344.5 1276.5,340.8 1282.5,339.1 1288.5,337.7 1294.5,337.5 1300.5,334.0 1306.5,330.7 1312.5,328.9 1318.5,327.1 1324.5,325.3 1330.5,322.6 1336.5,318.4 1342.5,313.7 1348.5,307.3 1354.5,298.7 1360.5,286.1 1366.5,279.8 1372.5,275.7 1378.5,270.5 1384.5,263.9 1390.5,260.5 1396.5,252.9 1402.5,236.5 1408.5,225.1 1414.5,219.1 1420.5,213.4 1426.5,207.5 1432.5,205.0 1438.5,198.8 1444.5,196.8 1450.5,196.3 1456.5,190.6 1462.5,191.9 1468.5,195.6 1474.5,198.1 1480.5,197.6 1486.5,197.2 1492.5,195.5 1498.5,192.2 1504.5,178.5 1510.5,167.3 1516.5,162.0" fill="none" stroke="#14dc14" stroke-width="1" shape-rendering="crispEdges"/>
<rect x="16" y="400.0" width="1" height="6.0" fill="#000096"/>
<rect x="14" y="402.0" width="5" height="4.0" fill="#000096"/>
<rect x="22" y="400.0" width="1" height="6.0" fill="#ff0000"/>
<rect x="20" y="403.0" width="5" height="3.0" fill="#ff0000"/>
<rect x="28" y="400.0" width="1" height="5.0" fill="#ff0000"/>
<rect x="26" y="401.0" width="5" height="4.0" fill="#ff0000"/>
<rect x="34" y="393.0" width="1" height="5.0" fill="#ff0000"/>
<rect x="32" y="395.0" width="5" height="2.0" fill="#ff0000"/>
<rect x="40" y="395.0" width="1" height="6.0" fill="#000096"/>
<rect x="38" y="397.5" width="5" height="3.5" fill="#000096"/>
<rect x="46" y="387.0" width="1" height="4.0" fill="#000096"/>
<rect x="44" y="388.0" width="5" height="3.0" fill="#000096"/>
<rect x="52" y="388.0" width="1" height="6.0" fill="#ff0000"/>
<rect x="50" y="391.2" width="5" height="2.3" fill="#ff0000"/>
<rect x="58" y="380.0" width="1" height="6.0" fill="#ff0000"/>
<rect x="56" y="380.0" width="5" height="4.0" fill="#ff0000"/>
<rect x="64" y="379.0" width="1" height="8.0" fill="#ff0000"/>
<rect x="62" y="381.0" width="5" height="1.5" fill="#ff0000"/>
<rect x="70" y="380.0" width="1" height="8.0" fill="#000096"/>
<rect x="68" y="380.0" width="5" height="7.5" fill="#000096"/>
<rect x="76" y="379.0" width="1" height="8.0" fill="#ff0000"/>
<rect x="74" y="383.0" width="5" height="4.0" fill="#ff0000"/>
<rect x="82" y="374.0" width="1" height="11.0" fill="#ff0000"/>
<rect x="80" y="376.0" width="5" height="8.0" fill="#ff0000"/>
<rect x="88" y="347.0" width="1" height="23.0" fill="#ff0000"/>
<rect x="86" y="353.0" width="5" height="17.0" fill="#ff0000"/>
<rect x="94" y="348.5" width="1" height="10.5" fill="#ff0000"/>
<rect x="92" y="355.5" width="5" height="1.5" fill="#ff0000"/>
<rect x="100" y="334.0" width="1" height="7.5" fill="#ff0000"/>
<rect x="98" y="340.0" width="5" height="1.5" fill="#ff0000"/>
<rect x="106" y="322.0" width="1" height="9.0" fill="#000096"/>
<rect x="104" y="323.0" width="5" height="7.0" fill="#000096"/>
<rect x="112" y="325.0" width="1" height="8.0" fill="#ff0000"/>
<rect x="110" y="331.0" width="5" height="2.0" fill="#ff0000"/>
<rect x="118" y="320.0" width="1" height="12.0" fill="#ff0000"/>
<rect x="116" y="321.0" width="5" height="11.0" fill="#ff0000"/>
<rect x="124" y="315.0" width="1" height="11.0" fill="#ff0000"/>
<rect x="122" y="317.0" width="5" height="6.0" fill="#ff0000"/>
<rect x="130" y="311.0" width="1" height="7.6" fill="#ff0000"/>
<rect x="128" y="311.0" width="5" height="6.5" fill="#ff0000"/>
<rect x="136" y="302.0" width="1" height="11.7" fill="#000096"/>
<rect x="134" y="303.2" width="5" height="10.5" fill="#000096"/>
<rect x="142" y="303.2" width="1" height="20.4" fill="#ff0000"/>
<rect x="140" y="303.2" width="5" height="17.6" fill="#ff0000"/>
<rect x="148" y="286.7" width="1" height="18.2" fill="#000096"/>
<rect x="146" y="298.3" width="5" height="4.8" fill="#000096"/>
<rect x="154" y="286.7" width="1" height="22.0" fill="#000096"/>
<rect x="152" y="298.3" width="5" height="7.1" fill="#000096"/>
<rect x="160" y="293.9" width="1" height="7.7" fill="#000096"/>
<rect x="158" y="295.0" width="5" height="2.7" fill="#000096"/>
<rect x="166" y="295.0" width="1" height="13.2" fill="#000096"/>
<rect x="164" y="299.4" width="5" height="7.1" fill="#000096"/>
<rect x="172" y="302.1" width="1" height="13.8" fill="#000096"/>
<rect x="170" y="305.4" width="5" height="7.2" fill="#000096"/>
<rect x="178" y="316.4" width="1" height="9.9" fill="#ff0000"/>
<rect x="176" y="319.2" width="5" height="7.1" fill="#ff0000"/>
<rect x="184" y="298.3" width="1" height="11.5" fill="#ff0000"/>
<rect x="182" y="298.3" width="5" height="10.4" fill="#ff0000"/>
<rect x="190" y="272.4" width="1" height="16.5" fill="#ff0000"/>
<rect x="188" y="280.1" width="5" height="3.3" fill="#ff0000"/>
<rect x="196" y="271.9" width="1" height="13.7" fill="#000096"/>
<rect x="194" y="271.9" width="5" height="13.7" fill="#000096"/>
<rect x="202" y="273.0" width="1" height="11.5" fill="#000096"/>
<rect x="200" y="281.2" width="5" height="3.3" fill="#000096"/>
<rect x="208" y="260.3" width="1" height="8.3" fill="#000096"/>
<rect x="206" y="266.4" width="5" height="2.2" fill="#000096"/>
<rect x="214" y="255.9" width="1" height="6.6" fill="#ff0000"/>
<rect x="212" y="259.2" width="5" height="1.7" fill="#ff0000"/>
<rect x="220" y="257.0" width="1" height="5.0" fill="#ff0000"/>
<rect x="218" y="259.0" width="5" height="3.0" fill="#ff0000"/>
<rect x="226" y="253.7" width="1" height="5.0" fill="#000096"/>
<rect x="224" y="255.9" width="5" height="2.8" fill="#000096"/>
<rect x="232" y="258.7" width="1" height="6.0" fill="#000096"/>
<rect x="230" y="262.0" width="5" height="2.7" fill="#000096"/>
<rect x="238" y="258.1" width="1" height="9.4" fill="#ff0000"/>
<rect x="236" y="259.2" width="5" height="8.3" fill="#ff0000"/>
<rect x="244" y="270.0" width="1" height="3.5" fill="#000096"/>
<rect x="242" y="270.2" width="5" height="3.3" fill="#000096"/>
<rect x="250" y="268.0" width="1" height="3.9" fill="#000096"/>
<rect x="248" y="268.6" width="5" height="3.3" fill="#000096"/>
<rect x="256" y="244.0" width="1" height="12.5" fill="#ff0000"/>
<rect x="254" y="244.9" width="5" height="11.6" fill="#ff0000"/>
<rect x="262" y="251.0" width="1" height="7.7" fill="#ff0000"/>
<rect x="260" y="253.2" width="5" height="2.7" fill="#ff0000"/>
<rect x="268" y="256.5" width="1" height="7.1" fill="#000096"/>
<rect x="266" y="257.6" width="5" height="2.2" fill="#000096"/>
<rect x="274" y="260.9" width="1" height="7.7" fill="#000096"/>
<rect x="272" y="263.0" width="5" height="2.8" fill="#000096"/>
<rect x="280" y="252.0" width="1" height="8.9" fill="#000096"/>
<rect x="278" y="254.8" width="5" height="6.1" fill="#000096"/>
<rect x="286" y="264.0" width="1" height="3.5" fill="#000096"/>
<rect x="284" y="264.2" width="5" height="3.3" fill="#000096"/>
<rect x="292" y="266.4" width="1" height="26.4" fill="#000096"/>
<rect x="290" y="268.0" width="5" height="24.8" fill="#000096"/>
<rect x="298" y="294.4" width="1" height="11.0" fill="#ff0000"/>
<rect x="296" y="298.3" width="5" height="2.7" fill="#ff0000"/>
<rect x="304" y="301.0" width="1" height="8.8" fill="#000096"/>
<rect x="302" y="302.7" width="5" height="4.9" fill="#000096"/>
<rect x="310" y="313.7" width="1" height="8.8" fill="#000096"/>
<rect x="308" y="320.3" width="5" height="2.2" fill="#000096"/>
<rect x="316" y="310.9" width="1" height="14.9" fill="#000096"/>
<rect x="314" y="318.1" width="5" height="5.5" fill="#000096"/>
<rect x="322" y="328.0" width="1" height="10.4" fill="#ff0000"/>
<rect x="320" y="331.8" width="5" height="6.6" fill="#ff0000"/>
<rect x="328" y="320.8" width="1" height="11.6" fill="#ff0000"/>
<rect x="326" y="324.1" width="5" height="5.5" fill="#ff0000"/>
<rect x="334" y="306.0" width="1" height="9.9" fill="#ff0000"/>
<rect x="332" y="312.0" width="5" height="3.9" fill="#ff0000"/>
<rect x="340" y="324.0" width="1" height="6.7" fill="#000096"/>
<rect x="338" y="324.7" width="5" height="6.0" fill="#000096"/>
<rect x="346" y="326.9" width="1" height="6.0" fill="#000096"/>
<rect x="344" y="330.2" width="5" height="2.7" fill="#000096"/>
<rect x="352" y="307.1" width="1" height="10.4" fill="#ff0000"/>
<rect x="350" y="309.3" width="5" height="8.2" fill="#ff0000"/>
<rect x="358" y="314.2" width="1" height="6.6" fill="#ff0000"/>
<rect x="356" y="318.1" width="5" height="1.6" fill="#ff0000"/>
<rect x="364" y="317.5" width="1" height="6.1" fill="#000096"/>
<rect x="362" y="318.6" width="5" height="3.3" fill="#000096"/>
<rect x="370" y="312.0" width="1" height="13.2" fill="#000096"/>
<rect x="368" y="316.4" width="5" height="6.6" fill="#000096"/>
<rect x="376" y="326.3" width="1" height="8.3" fill="#ff0000"/>
<rect x="374" y="330.7" width="5" height="1.7" fill="#ff0000"/>
<rect x="382" y="318.3" width="1" height="5.5" fill="#000096"/>
<rect x="380" y="319.4" width="5" height="2.2" fill="#000096"/>
<rect x="388" y="313.3" width="1" height="7.2" fill="#000096"/>
<rect x="386" y="315.0" width="5" height="5.5" fill="#000096"/>
<rect x="394" y="310.0" width="1" height="20.4" fill="#000096"/>
<rect x="392" y="320.5" width="5" height="4.4" fill="#000096"/>
<rect x="400" y="330.0" width="1" height="14.1" fill="#000096"/>
<rect x="398" y="330.4" width="5" height="13.7" fill="#000096"/>
<rect x="406" y="336.4" width="1" height="7.2" fill="#000096"/>
<rect x="404" y="338.4" width="5" height="1.9" fill="#000096"/>
<rect x="412" y="359.0" width="1" height="9.9" fill="#000096"/>
<rect x="410" y="360.0" width="5" height="8.9" fill="#000096"/>
<rect x="418" y="360.0" width="1" height="3.9" fill="#000096"/>
<rect x="416" y="360.6" width="5" height="3.3" fill="#000096"/>
<rect x="424" y="369.0" width="1" height="8.7" fill="#000096"/>
<rect x="422" y="369.4" width="5" height="8.3" fill="#000096"/>
<rect x="430" y="373.3" width="1" height="9.3" fill="#000096"/>
<rect x="428" y="379.0" width="5" height="1.6" fill="#000096"/>
<rect x="436" y="376.0" width="1" height="10.5" fill="#000096"/>
<rect x="434" y="379.3" width="5" height="7.2" fill="#000096"/>
<rect x="442" y="378.8" width="1" height="8.2" fill="#000096"/>
<rect x="440" y="383.2" width="5" height="2.7" fill="#000096"/>
<rect x="448" y="389.2" width="1" height="8.8" fill="#000096"/>
<rect x="446" y="391.4" width="5" height="2.2" fill="#000096"/>
<rect x="454" y="394.7" width="1" height="12.1" fill="#000096"/>
<rect x="452" y="396.4" width="5" height="7.1" fill="#000096"/>
<rect x="460" y="394.2" width="1" height="12.6" fill="#ff0000"/>
<rect x="458" y="395.3" width="5" height="9.3" fill="#ff0000"/>
<rect x="466" y="410.0" width="1" height="14.6" fill="#000096"/>
<rect x="464" y="411.1" width="5" height="13.5" fill="#000096"/>
<rect x="472" y="416.9" width="1" height="6.9" fill="#ff0000"/>
<rect x="470" y="421.0" width="5" height="2.8" fill="#ff0000"/>
<rect x="478" y="410.0" width="1" height="5.0" fill="#ff0000"/>
<rect x="476" y="410.9" width="5" height="1.9" fill="#ff0000"/>
<rect x="484" y="411.0" width="1" height="19.7" fill="#000096"/>
<rect x="482" y="412.0" width="5" height="18.7" fill="#000096"/>
<rect x="490" y="425.2" width="1" height="10.7" fill="#ff0000"/>
<rect x="488" y="429.0" width="5" height="3.6" fill="#ff0000"/>
<rect x="496" y="422.8" width="1" height="7.0" fill="#000096"/>
<rect x="494" y="423.8" width="5" height="3.8" fill="#000096"/>
<rect x="502" y="421.7" width="1" height="6.6" fill="#000096"/>
<rect x="500" y="425.0" width="5" height="2.2" fill="#000096"/>
<rect x="508" y="417.9" width="1" height="15.9" fill="#ff0000"/>
<rect x="506" y="419.0" width="5" height="10.4" fill="#ff0000"/>
<rect x="514" y="419.0" width="1" height="8.8" fill="#000096"/>
<rect x="512" y="420.6" width="5" height="1.5" fill="#000096"/>
<rect x="520" y="431.0" width="1" height="9.4" fill="#ff0000"/>
<rect x="518" y="431.0" width="5" height="5.6" fill="#ff0000"/>
<rect x="526" y="437.1" width="1" height="6.6" fill="#000096"/>
<rect x="524" y="438.8" width="5" height="3.8" fill="#000096"/>
<rect x="532" y="456.9" width="1" height="7.1" fill="#ff0000"/>
<rect x="530" y="458.0" width="5" height="2.2" fill="#ff0000"/>
<rect x="538" y="448.1" width="1" height="8.8" fill="#ff0000"/>
<rect x="536" y="449.2" width="5" height="5.5" fill="#ff0000"/>
<rect x="544" y="430.0" width="1" height="14.8" fill="#ff0000"/>
<rect x="542" y="432.2" width="5" height="10.4" fill="#ff0000"/>
<rect x="550" y="420.6" width="1" height="4.4" fill="#ff0000"/>
<rect x="548" y="420.8" width="5" height="1.5" fill="#ff0000"/>
<rect x="556" y="423.9" width="1" height="19.8" fill="#000096"/>
<rect x="554" y="423.9" width="5" height="16.5" fill="#000096"/>
<rect x="562" y="417.9" width="1" height="7.1" fill="#ff0000"/>
<rect x="560" y="422.3" width="5" height="2.7" fill="#ff0000"/>
<rect x="568" y="428.3" width="1" height="12.7" fill="#ff0000"/>
<rect x="566" y="432.2" width="5" height="6.6" fill="#ff0000"/>
<rect x="574" y="422.8" width="1" height="6.6" fill="#ff0000"/>
<rect x="572" y="426.1" width="5" height="3.3" fill="#ff0000"/>
<rect x="580" y="426.1" width="1" height="6.6" fill="#ff0000"/>
<rect x="578" y="428.3" width="5" height="4.4" fill="#ff0000"/>
<rect x="586" y="421.7" width="1" height="8.3" fill="#000096"/>
<rect x="584" y="423.9" width="5" height="4.1" fill="#000096"/>
<rect x="592" y="407.4" width="1" height="6.1" fill="#000096"/>
<rect x="590" y="410.7" width="5" height="2.8" fill="#000096"/>
<rect x="598" y="412.9" width="1" height="8.8" fill="#000096"/>
<rect x="596" y="415.1" width="5" height="4.4" fill="#000096"/>
<rect x="604" y="405.2" width="1" height="7.2" fill="#ff0000"/>
<rect x="602" y="408.0" width="5" height="2.7" fill="#ff0000"/>
<rect x="610" y="397.0" width="1" height="7.7" fill="#ff0000"/>
<rect x="608" y="400.8" width="5" height="3.9" fill="#ff0000"/>
<rect x="616" y="399.7" width="1" height="11.0" fill="#ff0000"/>
<rect x="614" y="403.0" width="5" height="7.7" fill="#ff0000"/>
<rect x="622" y="398.0" width="1" height="12.5" fill="#000096"/>
<rect x="620" y="399.0" width="5" height="11.5" fill="#000096"/>
<rect x="628" y="413.3" width="1" height="9.3" fill="#000096"/>
<rect x="626" y="417.1" width="5" height="2.2" fill="#000096"/>
<rect x="634" y="411.0" width="1" height="8.9" fill="#ff0000"/>
<rect x="632" y="411.0" width="5" height="5.6" fill="#ff0000"/>
<rect x="640" y="394.6" width="1" height="8.2" fill="#ff0000"/>
<rect x="638" y="394.6" width="5" height="7.1" fill="#ff0000"/>
<rect x="646" y="377.0" width="1" height="25.8" fill="#ff0000"/>
<rect x="644" y="381.4" width="5" height="21.4" fill="#ff0000"/>
<rect x="652" y="369.0" width="1" height="12.9" fill="#000096"/>
<rect x="650" y="369.8" width="5" height="12.1" fill="#000096"/>
<rect x="658" y="372.0" width="1" height="8.8" fill="#ff0000"/>
<rect x="656" y="373.7" width="5" height="7.1" fill="#ff0000"/>
<rect x="664" y="367.0" width="1" height="3.9" fill="#000096"/>
<rect x="662" y="367.8" width="5" height="3.1" fill="#000096"/>
<rect x="670" y="367.0" width="1" height="6.7" fill="#ff0000"/>
<rect x="668" y="372.6" width="5" height="1.5" fill="#ff0000"/>
<rect x="676" y="373.1" width="1" height="10.5" fill="#000096"/>
<rect x="674" y="375.3" width="5" height="4.4" fill="#000096"/>
<rect x="682" y="385.8" width="1" height="8.2" fill="#000096"/>
<rect x="680" y="390.2" width="5" height="3.8" fill="#000096"/>
<rect x="688" y="386.3" width="1" height="11.6" fill="#000096"/>
<rect x="686" y="390.2" width="5" height="7.7" fill="#000096"/>
<rect x="694" y="398.0" width="1" height="4.8" fill="#ff0000"/>
<rect x="692" y="398.4" width="5" height="3.3" fill="#ff0000"/>
<rect x="700" y="397.0" width="1" height="15.7" fill="#000096"/>
<rect x="698" y="397.3" width="5" height="15.4" fill="#000096"/>
<rect x="706" y="407.8" width="1" height="7.1" fill="#ff0000"/>
<rect x="704" y="411.6" width="5" height="3.3" fill="#ff0000"/>
<rect x="712" y="402.3" width="1" height="10.4" fill="#ff0000"/>
<rect x="710" y="408.3" width="5" height="2.2" fill="#ff0000"/>
<rect x="718" y="402.8" width="1" height="8.8" fill="#000096"/>
<rect x="716" y="403.9" width="5" height="7.7" fill="#000096"/>
<rect x="724" y="399.0" width="1" height="6.0" fill="#ff0000"/>
<rect x="722" y="403.9" width="5" height="1.5" fill="#ff0000"/>
<rect x="730" y="404.0" width="1" height="13.7" fill="#000096"/>
<rect x="728" y="404.5" width="5" height="13.2" fill="#000096"/>
<rect x="736" y="424.3" width="1" height="11.5" fill="#000096"/>
<rect x="734" y="427.0" width="5" height="8.8" fill="#000096"/>
<rect x="742" y="433.6" width="1" height="8.3" fill="#000096"/>
<rect x="740" y="436.4" width="5" height="2.2" fill="#000096"/>
<rect x="748" y="443.0" width="1" height="10.4" fill="#000096"/>
<rect x="746" y="445.2" width="5" height="5.5" fill="#000096"/>
<rect x="754" y="441.0" width="1" height="8.6" fill="#ff0000"/>
<rect x="752" y="441.9" width="5" height="5.0" fill="#ff0000"/>
<rect x="760" y="428.0" width="1" height="4.6" fill="#ff0000"/>
<rect x="758" y="428.2" width="5" height="3.3" fill="#ff0000"/>
<rect x="766" y="418.0" width="1" height="6.9" fill="#000096"/>
<rect x="764" y="418.3" width="5" height="3.3" fill="#000096"/>
<rect x="772" y="410.0" width="1" height="16.0" fill="#ff0000"/>
<rect x="770" y="415.0" width="5" height="11.0" fill="#ff0000"/>
<rect x="778" y="418.8" width="1" height="8.3" fill="#ff0000"/>
<rect x="776" y="420.1" width="5" height="2.6" fill="#ff0000"/>
<rect x="784" y="413.9" width="1" height="6.9" fill="#ff0000"/>
<rect x="782" y="419.4" width="5" height="1.5" fill="#ff0000"/>
<rect x="790" y="428.9" width="1" height="4.8" fill="#ff0000"/>
<rect x="788" y="429.8" width="5" height="1.7" fill="#ff0000"/>
<rect x="796" y="408.4" width="1" height="8.2" fill="#ff0000"/>
<rect x="794" y="411.1" width="5" height="5.5" fill="#ff0000"/>
<rect x="802" y="402.1" width="1" height="10.7" fill="#ff0000"/>
<rect x="800" y="402.9" width="5" height="9.9" fill="#ff0000"/>
<rect x="808" y="384.7" width="1" height="12.7" fill="#000096"/>
<rect x="806" y="393.0" width="5" height="2.7" fill="#000096"/>
<rect x="814" y="380.9" width="1" height="14.8" fill="#ff0000"/>
<rect x="812" y="384.2" width="5" height="11.5" fill="#ff0000"/>
<rect x="820" y="386.4" width="1" height="10.4" fill="#000096"/>
<rect x="818" y="389.1" width="5" height="4.4" fill="#000096"/>
<rect x="826" y="392.4" width="1" height="3.3" fill="#ff0000"/>
<rect x="824" y="394.0" width="5" height="1.7" fill="#ff0000"/>
<rect x="832" y="385.3" width="1" height="7.7" fill="#ff0000"/>
<rect x="830" y="389.7" width="5" height="1.6" fill="#ff0000"/>
<rect x="838" y="386.0" width="1" height="9.7" fill="#000096"/>
<rect x="836" y="386.4" width="5" height="3.8" fill="#000096"/>
<rect x="844" y="371.0" width="1" height="14.8" fill="#ff0000"/>
<rect x="842" y="371.0" width="5" height="14.8" fill="#ff0000"/>
<rect x="850" y="362.7" width="1" height="7.7" fill="#ff0000"/>
<rect x="848" y="364.4" width="5" height="3.8" fill="#ff0000"/>
<rect x="856" y="356.1" width="1" height="7.7" fill="#000096"/>
<rect x="854" y="358.9" width="5" height="4.9" fill="#000096"/>
<rect x="862" y="360.0" width="1" height="6.0" fill="#000096"/>
<rect x="860" y="362.9" width="5" height="2.6" fill="#000096"/>
<rect x="868" y="364.4" width="1" height="8.2" fill="#000096"/>
<rect x="866" y="365.5" width="5" height="1.6" fill="#000096"/>
<rect x="874" y="360.0" width="1" height="14.3" fill="#ff0000"/>
<rect x="872" y="362.2" width="5" height="12.1" fill="#ff0000"/>
<rect x="880" y="372.0" width="1" height="3.5" fill="#ff0000"/>
<rect x="878" y="373.5" width="5" height="1.5" fill="#ff0000"/>
<rect x="886" y="364.7" width="1" height="7.7" fill="#000096"/>
<rect x="884" y="366.4" width="5" height="6.0" fill="#000096"/>
<rect x="892" y="366.0" width="1" height="16.9" fill="#000096"/>
<rect x="890" y="366.4" width="5" height="12.1" fill="#000096"/>
<rect x="898" y="373.5" width="1" height="4.4" fill="#ff0000"/>
<rect x="896" y="373.5" width="5" height="3.3" fill="#ff0000"/>
<rect x="904" y="375.0" width="1" height="10.6" fill="#000096"/>
<rect x="902" y="375.2" width="5" height="8.2" fill="#000096"/>
<rect x="910" y="388.9" width="1" height="11.0" fill="#000096"/>
<rect x="908" y="392.8" width="5" height="7.1" fill="#000096"/>
<rect x="916" y="392.8" width="1" height="12.6" fill="#000096"/>
<rect x="914" y="398.8" width="5" height="6.6" fill="#000096"/>
<rect x="922" y="403.2" width="1" height="7.2" fill="#000096"/>
<rect x="920" y="403.8" width="5" height="2.7" fill="#000096"/>
<rect x="928" y="408.0" width="1" height="8.4" fill="#000096"/>
<rect x="926" y="408.2" width="5" height="8.2" fill="#000096"/>
<rect x="934" y="413.7" width="1" height="3.8" fill="#000096"/>
<rect x="932" y="414.8" width="5" height="1.5" fill="#000096"/>
<rect x="940" y="395.0" width="1" height="7.7" fill="#ff0000"/>
<rect x="938" y="395.0" width="5" height="6.6" fill="#ff0000"/>
<rect x="946" y="395.0" width="1" height="3.8" fill="#ff0000"/>
<rect x="944" y="396.0" width="5" height="1.7" fill="#ff0000"/>
<rect x="952" y="402.0" width="1" height="3.4" fill="#000096"/>
<rect x="950" y="402.3" width="5" height="1.5" fill="#000096"/>
<rect x="958" y="385.6" width="1" height="14.3" fill="#ff0000"/>
<rect x="956" y="385.6" width="5" height="14.3" fill="#ff0000"/>
<rect x="964" y="379.0" width="1" height="8.8" fill="#ff0000"/>
<rect x="962" y="381.8" width="5" height="6.0" fill="#ff0000"/>
<rect x="970" y="360.3" width="1" height="11.6" fill="#ff0000"/>
<rect x="968" y="364.2" width="5" height="7.7" fill="#ff0000"/>
<rect x="976" y="362.0" width="1" height="6.6" fill="#000096"/>
<rect x="974" y="365.3" width="5" height="3.3" fill="#000096"/>
<rect x="982" y="349.3" width="1" height="16.5" fill="#ff0000"/>
<rect x="980" y="356.5" width="5" height="7.7" fill="#ff0000"/>
<rect x="988" y="358.1" width="1" height="14.3" fill="#000096"/>
<rect x="986" y="363.0" width="5" height="9.4" fill="#000096"/>
<rect x="994" y="364.2" width="1" height="5.5" fill="#000096"/>
<rect x="992" y="369.1" width="5" height="1.5" fill="#000096"/>
<rect x="1000" y="371.3" width="1" height="5.5" fill="#000096"/>
<rect x="998" y="374.0" width="5" height="1.5" fill="#000096"/>
<rect x="1006" y="371.3" width="1" height="7.2" fill="#ff0000"/>
<rect x="1004" y="371.3" width="5" height="7.2" fill="#ff0000"/>
<rect x="1012" y="384.0" width="1" height="8.3" fill="#000096"/>
<rect x="1010" y="387.9" width="5" height="4.4" fill="#000096"/>
<rect x="1018" y="386.3" width="1" height="11.5" fill="#ff0000"/>
<rect x="1016" y="387.9" width="5" height="9.9" fill="#ff0000"/>
<rect x="1024" y="383.0" width="1" height="15.9" fill="#000096"/>
<rect x="1022" y="383.0" width="5" height="13.7" fill="#000096"/>
<rect x="1030" y="400.6" width="1" height="7.1" fill="#000096"/>
<rect x="1028" y="401.7" width="5" height="2.7" fill="#000096"/>
<rect x="1036" y="398.4" width="1" height="7.1" fill="#000096"/>
<rect x="1034" y="400.0" width="5" height="5.5" fill="#000096"/>
<rect x="1042" y="402.2" width="1" height="8.8" fill="#000096"/>
<rect x="1040" y="405.0" width="5" height="4.9" fill="#000096"/>
<rect x="1048" y="396.2" width="1" height="13.7" fill="#ff0000"/>
<rect x="1046" y="400.6" width="5" height="4.9" fill="#ff0000"/>
<rect x="1054" y="394.0" width="1" height="8.8" fill="#ff0000"/>
<rect x="1052" y="396.2" width="5" height="2.7" fill="#ff0000"/>
<rect x="1060" y="398.9" width="1" height="7.7" fill="#000096"/>
<rect x="1058" y="401.1" width="5" height="5.5" fill="#000096"/>
<rect x="1066" y="417.6" width="1" height="8.3" fill="#000096"/>
<rect x="1064" y="418.7" width="5" height="7.2" fill="#000096"/>
<rect x="1072" y="424.2" width="1" height="10.5" fill="#ff0000"/>
<rect x="1070" y="431.4" width="5" height="3.3" fill="#ff0000"/>
<rect x="1078" y="423.1" width="1" height="9.9" fill="#000096"/>
<rect x="1076" y="424.2" width="5" height="8.8" fill="#000096"/>
<rect x="1084" y="425.3" width="1" height="11.6" fill="#ff0000"/>
<rect x="1082" y="427.0" width="5" height="7.7" fill="#ff0000"/>
<rect x="1090" y="413.2" width="1" height="8.3" fill="#ff0000"/>
<rect x="1088" y="414.3" width="5" height="7.2" fill="#ff0000"/>
<rect x="1096" y="398.9" width="1" height="8.3" fill="#ff0000"/>
<rect x="1094" y="401.7" width="5" height="5.5" fill="#ff0000"/>
<rect x="1102" y="383.0" width="1" height="11.5" fill="#ff0000"/>
<rect x="1100" y="383.0" width="5" height="11.5" fill="#ff0000"/>
<rect x="1108" y="380.2" width="1" height="7.2" fill="#ff0000"/>
<rect x="1106" y="381.3" width="5" height="6.1" fill="#ff0000"/>
<rect x="1114" y="378.0" width="1" height="17.6" fill="#ff0000"/>
<rect x="1112" y="380.2" width="5" height="15.4" fill="#ff0000"/>
<rect x="1120" y="372.0" width="1" height="12.6" fill="#000096"/>
<rect x="1118" y="374.2" width="5" height="5.7" fill="#000096"/>
<rect x="1126" y="376.9" width="1" height="16.5" fill="#ff0000"/>
<rect x="1124" y="386.3" width="5" height="7.1" fill="#ff0000"/>
<rect x="1132" y="375.0" width="1" height="12.4" fill="#ff0000"/>
<rect x="1130" y="375.3" width="5" height="12.1" fill="#ff0000"/>
<rect x="1138" y="373.0" width="1" height="16.5" fill="#000096"/>
<rect x="1136" y="375.2" width="5" height="14.3" fill="#000096"/>
<rect x="1144" y="383.5" width="1" height="7.1" fill="#000096"/>
<rect x="1142" y="386.2" width="5" height="3.6" fill="#000096"/>
<rect x="1150" y="382.4" width="1" height="17.6" fill="#000096"/>
<rect x="1148" y="388.4" width="5" height="11.6" fill="#000096"/>
<rect x="1156" y="383.5" width="1" height="8.2" fill="#ff0000"/>
<rect x="1154" y="389.0" width="5" height="2.7" fill="#ff0000"/>
<rect x="1162" y="384.0" width="1" height="11.0" fill="#ff0000"/>
<rect x="1160" y="386.8" width="5" height="3.8" fill="#ff0000"/>
<rect x="1168" y="374.1" width="1" height="3.9" fill="#ff0000"/>
<rect x="1166" y="375.8" width="5" height="1.5" fill="#ff0000"/>
<rect x="1174" y="377.4" width="1" height="5.5" fill="#ff0000"/>
<rect x="1172" y="380.7" width="5" height="1.7" fill="#ff0000"/>
<rect x="1180" y="382.4" width="1" height="3.3" fill="#000096"/>
<rect x="1178" y="383.5" width="5" height="2.2" fill="#000096"/>
<rect x="1186" y="378.0" width="1" height="11.5" fill="#000096"/>
<rect x="1184" y="378.0" width="5" height="8.0" fill="#000096"/>
<rect x="1192" y="392.8" width="1" height="8.8" fill="#000096"/>
<rect x="1190" y="396.1" width="5" height="3.3" fill="#000096"/>
<rect x="1198" y="405.5" width="1" height="5.5" fill="#ff0000"/>
<rect x="1196" y="408.2" width="5" height="1.7" fill="#ff0000"/>
<rect x="1204" y="411.5" width="1" height="6.1" fill="#000096"/>
<rect x="1202" y="414.3" width="5" height="3.3" fill="#000096"/>
<rect x="1210" y="411.5" width="1" height="11.0" fill="#000096"/>
<rect x="1208" y="413.7" width="5" height="5.0" fill="#000096"/>
<rect x="1216" y="415.9" width="1" height="2.4" fill="#ff0000"/>
<rect x="1214" y="417.0" width="5" height="1.5" fill="#ff0000"/>
<rect x="1222" y="400.0" width="1" height="14.8" fill="#ff0000"/>
<rect x="1220" y="400.0" width="5" height="14.8" fill="#ff0000"/>
<rect x="1228" y="378.0" width="1" height="13.7" fill="#ff0000"/>
<rect x="1226" y="379.0" width="5" height="12.7" fill="#ff0000"/>
<rect x="1234" y="362.0" width="1" height="4.4" fill="#ff0000"/>
<rect x="1232" y="365.3" width="5" height="1.5" fill="#ff0000"/>
<rect x="1240" y="360.0" width="1" height="6.4" fill="#000096"/>
<rect x="1238" y="360.4" width="5" height="6.0" fill="#000096"/>
<rect x="1246" y="354.3" width="1" height="9.4" fill="#ff0000"/>
<rect x="1244" y="357.0" width="5" height="1.7" fill="#ff0000"/>
<rect x="1252" y="342.0" width="1" height="5.7" fill="#ff0000"/>
<rect x="1250" y="342.2" width="5" height="3.3" fill="#ff0000"/>
<rect x="1258" y="328.0" width="1" height="11.6" fill="#000096"/>
<rect x="1256" y="330.8" width="5" height="8.8" fill="#000096"/>
<rect x="1264" y="335.0" width="1" height="6.8" fill="#ff0000"/>
<rect x="1262" y="335.2" width="5" height="6.6" fill="#ff0000"/>
<rect x="1270" y="336.8" width="1" height="11.6" fill="#000096"/>
<rect x="1268" y="341.2" width="5" height="7.2" fill="#000096"/>
<rect x="1276" y="336.8" width="1" height="6.1" fill="#ff0000"/>
<rect x="1274" y="338.5" width="5" height="2.7" fill="#ff0000"/>
<rect x="1282" y="328.0" width="1" height="11.0" fill="#000096"/>
<rect x="1280" y="333.0" width="5" height="1.5" fill="#000096"/>
<rect x="1288" y="324.2" width="1" height="8.2" fill="#000096"/>
<rect x="1286" y="329.1" width="5" height="3.3" fill="#000096"/>
<rect x="1294" y="331.9" width="1" height="4.9" fill="#ff0000"/>
<rect x="1292" y="334.0" width="5" height="2.8" fill="#ff0000"/>
<rect x="1300" y="325.3" width="1" height="15.4" fill="#ff0000"/>
<rect x="1298" y="331.3" width="5" height="9.4" fill="#ff0000"/>
<rect x="1306" y="320.3" width="1" height="6.1" fill="#ff0000"/>
<rect x="1304" y="322.0" width="5" height="1.6" fill="#ff0000"/>
<rect x="1312" y="319.2" width="1" height="5.5" fill="#000096"/>
<rect x="1310" y="321.4" width="5" height="3.3" fill="#000096"/>
<rect x="1318" y="318.0" width="1" height="6.7" fill="#000096"/>
<rect x="1316" y="318.1" width="5" height="5.5" fill="#000096"/>
<rect x="1324" y="323.6" width="1" height="3.9" fill="#ff0000"/>
<rect x="1322" y="324.7" width="5" height="1.7" fill="#ff0000"/>
<rect x="1330" y="315.9" width="1" height="3.9" fill="#000096"/>
<rect x="1328" y="315.9" width="5" height="2.2" fill="#000096"/>
<rect x="1336" y="298.3" width="1" height="9.4" fill="#ff0000"/>
<rect x="1334" y="301.1" width="5" height="6.6" fill="#ff0000"/>
<rect x="1342" y="297.8" width="1" height="8.2" fill="#ff0000"/>
<rect x="1340" y="301.1" width="5" height="4.9" fill="#ff0000"/>
<rect x="1348" y="282.9" width="1" height="8.8" fill="#000096"/>
<rect x="1346" y="284.0" width="5" height="7.7" fill="#000096"/>
<rect x="1354" y="276.3" width="1" height="13.2" fill="#ff0000"/>
<rect x="1352" y="281.3" width="5" height="8.2" fill="#ff0000"/>
<rect x="1360" y="255.0" width="1" height="15.8" fill="#ff0000"/>
<rect x="1358" y="255.4" width="5" height="15.4" fill="#ff0000"/>
<rect x="1366" y="257.1" width="1" height="12.6" fill="#000096"/>
<rect x="1364" y="263.1" width="5" height="6.6" fill="#000096"/>
<rect x="1372" y="254.3" width="1" height="25.9" fill="#000096"/>
<rect x="1370" y="257.1" width="5" height="23.1" fill="#000096"/>
<rect x="1378" y="259.8" width="1" height="10.5" fill="#000096"/>
<rect x="1376" y="263.1" width="5" height="2.8" fill="#000096"/>
<rect x="1384" y="248.0" width="1" height="12.4" fill="#ff0000"/>
<rect x="1382" y="248.3" width="5" height="12.1" fill="#ff0000"/>
<rect x="1390" y="232.4" width="1" height="9.5" fill="#ff0000"/>
<rect x="1388" y="238.3" width="5" height="3.6" fill="#ff0000"/>
<rect x="1396" y="228.0" width="1" height="3.8" fill="#000096"/>
<rect x="1394" y="228.9" width="5" height="2.9" fill="#000096"/>
<rect x="1402" y="192.9" width="1" height="14.7" fill="#ff0000"/>
<rect x="1400" y="198.2" width="5" height="9.4" fill="#ff0000"/>
<rect x="1408" y="192.0" width="1" height="16.8" fill="#000096"/>
<rect x="1406" y="192.3" width="5" height="16.5" fill="#000096"/>
<rect x="1414" y="208.2" width="1" height="14.8" fill="#000096"/>
<rect x="1412" y="214.1" width="5" height="4.2" fill="#000096"/>
<rect x="1420" y="205.3" width="1" height="24.2" fill="#ff0000"/>
<rect x="1418" y="210.0" width="5" height="19.5" fill="#ff0000"/>
<rect x="1426" y="198.2" width="1" height="7.7" fill="#ff0000"/>
<rect x="1424" y="202.3" width="5" height="2.4" fill="#ff0000"/>
<rect x="1432" y="182.9" width="1" height="8.8" fill="#ff0000"/>
<rect x="1430" y="185.8" width="5" height="3.0" fill="#ff0000"/>
<rect x="1438" y="169.3" width="1" height="10.6" fill="#000096"/>
<rect x="1436" y="174.0" width="5" height="3.5" fill="#000096"/>
<rect x="1444" y="185.0" width="1" height="23.2" fill="#000096"/>
<rect x="1442" y="185.2" width="5" height="23.0" fill="#000096"/>
<rect x="1450" y="197.0" width="1" height="29.0" fill="#000096"/>
<rect x="1448" y="201.2" width="5" height="6.4" fill="#000096"/>
<rect x="1456" y="174.0" width="1" height="13.6" fill="#ff0000"/>
<rect x="1454" y="174.0" width="5" height="13.6" fill="#ff0000"/>
<rect x="1462" y="171.0" width="1" height="21.3" fill="#000096"/>
<rect x="1460" y="171.0" width="5" height="21.3" fill="#000096"/>
<rect x="1468" y="179.9" width="1" height="26.0" fill="#000096"/>
<rect x="1466" y="189.9" width="5" height="5.9" fill="#000096"/>
<rect x="1474" y="201.2" width="1" height="19.4" fill="#000096"/>
<rect x="1472" y="210.0" width="5" height="10.6" fill="#000096"/>
<rect x="1480" y="205.3" width="1" height="20.6" fill="#ff0000"/>
<rect x="1478" y="205.3" width="5" height="20.6" fill="#ff0000"/>
<rect x="1486" y="172.2" width="1" height="14.2" fill="#ff0000"/>
<rect x="1484" y="172.2" width="5" height="14.2" fill="#ff0000"/>
<rect x="1492" y="164.0" width="1" height="19.4" fill="#000096"/>
<rect x="1490" y="164.0" width="5" height="19.4" fill="#000096"/>
<rect x="1498" y="171.0" width="1" height="21.3" fill="#ff0000"/>
<rect x="1496" y="179.3" width="5" height="13.0" fill="#ff0000"/>
<rect x="1504" y="152.0" width="1" height="22.6" fill="#ff0000"/>
<rect x="1502" y="152.2" width="5" height="22.4" fill="#ff0000"/>
<rect x="1510" y="149.0" width="1" height="13.8" fill="#ff0000"/>
<rect x="1508" y="149.2" width="5" height="9.4" fill="#ff0000"/>
<rect x="1516" y="139.2" width="1" height="9.4" fill="#000096"/>
<rect x="1514" y="142.7" width="5" height="3.0" fill="#000096"/>
</svg>
<svg x="11" y="483" width="1516" height="106" viewBox="11 483 1516 106" overflow="hidden">
<rect x="16" y="545.4" width="1" height="4.6" fill="#ff0000"/>
<rect x="22" y="546.3" width="1" height="3.7" fill="#ff0000"/>
<rect x="28" y="547.0" width="1" height="3.0" fill="#ff0000"/>
<rect x="34" y="547.2" width="1" height="2.8" fill="#ff0000"/>
<rect x="40" y="548.1" width="1" height="1.9" fill="#ff0000"/>
<rect x="46" y="548.0" width="1" height="2.0" fill="#ff0000"/>
<rect x="52" y="548.2" width="1" height="1.8" fill="#ff0000"/>
<rect x="58" y="547.6" width="1" height="2.4" fill="#ff0000"/>
<rect x="64" y="547.5" width="1" height="2.5" fill="#ff0000"/>
<rect x="70" y="548.3" width="1" height="1.7" fill="#ff0000"/>
<rect x="76" y="548.6" width="1" height="1.4" fill="#ff0000"/>
<rect x="82" y="548.4" width="1" height="1.6" fill="#ff0000"/>
<rect x="88" y="546.7" width="1" height="3.3" fill="#ff0000"/>
<rect x="94" y="546.1" width="1" height="3.9" fill="#ff0000"/>
<rect x="100" y="544.8" width="1" height="5.2" fill="#ff0000"/>
<rect x="106" y="543.6" width="1" height="6.4" fill="#ff0000"/>
<rect x="112" y="543.4" width="1" height="6.6" fill="#ff0000"/>
<rect x="118" y="543.0" width="1" height="7.0" fill="#ff0000"/>
<rect x="124" y="543.0" width="1" height="7.0" fill="#ff0000"/>
<rect x="130" y="543.1" width="1" height="6.9" fill="#ff0000"/>
<rect x="136" y="544.0" width="1" height="6.0" fill="#ff0000"/>
<rect x="142" y="544.3" width="1" height="5.7" fill="#ff0000"/>
<rect x="148" y="545.0" width="1" height="5.0" fill="#ff0000"/>
<rect x="154" y="546.2" width="1" height="3.8" fill="#ff0000"/>
<rect x="160" y="546.8" width="1" height="3.2" fill="#ff0000"/>
<rect x="166" y="548.3" width="1" height="1.7" fill="#ff0000"/>
<rect x="172" y="550" width="1" height="0.2" fill="#0000ff"/>
<rect x="178" y="550" width="1" height="2.2" fill="#0000ff"/>
<rect x="184" y="550" width="1" height="1.9" fill="#0000ff"/>
<rect x="190" y="550" width="1" height="0.4" fill="#0000ff"/>
<rect x="196" y="550" width="1" height="0.2" fill="#0000ff"/>
<rect x="202" y="550" width="1" height="0.2" fill="#0000ff"/>
<rect x="208" y="549.2" width="1" height="0.8" fill="#ff0000"/>
<rect x="214" y="548.2" width="1" height="1.8" fill="#ff0000"/>
<rect x="220" y="547.9" width="1" height="2.1" fill="#ff0000"/>
<rect x="226" y="548.1" width="1" height="1.9" fill="#ff0000"/>
<rect x="232" y="549.1" width="1" height="0.9" fill="#ff0000"/>
<rect x="238" y="549.6" width="1" height="0.4" fill="#ff0000"/>
<rect x="244" y="550" width="1" height="1.4" fill="#0000ff"/>
<rect x="250" y="550" width="1" height="2.7" fill="#0000ff"/>
<rect x="256" y="550" width="1" height="1.4" fill="#0000ff"/>
<rect x="262" y="550" width="1" height="1.5" fill="#0000ff"/>
<rect x="268" y="550" width="1" height="2.3" fill="#0000ff"/>
<rect x="274" y="550" width="1" height="3.5" fill="#0000ff"/>
<rect x="280" y="550" width="1" height="3.9" fill="#0000ff"/>
<rect x="286" y="550" width="1" height="4.8" fill="#0000ff"/>
<rect x="292" y="550" width="1" height="7.4" fill="#0000ff"/>
<rect x="298" y="550" width="1" height="9.3" fill="#0000ff"/>
<rect x="304" y="550" width="1" height="11.1" fill="#0000ff"/>
<rect x="310" y="550" width="1" height="13.0" fill="#0000ff"/>
<rect x="316" y="550" width="1" height="13.7" fill="#0000ff"/>
<rect x="322" y="550" width="1" height="14.3" fill="#0000ff"/>
<rect x="328" y="550" width="1" height="13.4" fill="#0000ff"/>
<rect x="334" y="550" width="1" height="11.2" fill="#0000ff"/>
<rect x="340" y="550" width="1" height="10.8" fill="#0000ff"/>
<rect x="346" y="550" width="1" height="10.2" fill="#0000ff"/>
<rect x="352" y="550" width="1" height="7.3" fill="#0000ff"/>
<rect x="358" y="550" width="1" height="5.8" fill="#0000ff"/>
<rect x="364" y="550" width="1" height="4.9" fill="#0000ff"/>
<rect x="370" y="550" width="1" height="4.1" fill="#0000ff"/>
<rect x="376" y="550" width="1" height="3.9" fill="#0000ff"/>
<rect x="382" y="550" width="1" height="2.8" fill="#0000ff"/>
<rect x="388" y="550" width="1" height="1.8" fill="#0000ff"/>
<rect x="394" y="550" width="1" height="1.4" fill="#0000ff"/>
<rect x="400" y="550" width="1" height="2.5" fill="#0000ff"/>
<rect x="406" y="550" width="1" height="2.7" fill="#0000ff"/>
<rect x="412" y="550" width="1" height="5.0" fill="#0000ff"/>
<rect x="418" y="550" width="1" height="5.6" fill="#0000ff"/>
<rect x="424" y="550" width="1" height="6.7" fill="#0000ff"/>
<rect x="430" y="550" width="1" height="7.2" fill="#0000ff"/>
<rect x="436" y="550" width="1" height="7.4" fill="#0000ff"/>
<rect x="442" y="550" width="1" height="7.0" fill="#0000ff"/>
<rect x="448" y="550" width="1" height="6.8" fill="#0000ff"/>
<rect x="454" y="550" width="1" height="6.9" fill="#0000ff"/>
<rect x="460" y="550" width="1" height="5.8" fill="#0000ff"/>
<rect x="466" y="550" width="1" height="6.9" fill="#0000ff"/>
<rect x="472" y="550" width="1" height="6.8" fill="#0000ff"/>
<rect x="478" y="550" width="1" height="5.2" fill="#0000ff"/>
<rect x="484" y="550" width="1" height="5.3" fill="#0000ff"/>
<rect x="490" y="550" width="1" height="4.7" fill="#0000ff"/>
<rect x="496" y="550" width="1" height="3.7" fill="#0000ff"/>
<rect x="502" y="550" width="1" height="2.5" fill="#0000ff"/>
<rect x="508" y="550" width="1" height="0.6" fill="#0000ff"/>
<rect x="514" y="549.4" width="1" height="0.6" fill="#ff0000"/>
<rect x="520" y="549.1" width="1" height="0.9" fill="#ff0000"/>
<rect x="526" y="549.6" width="1" height="0.4" fill="#ff0000"/>
<rect x="532" y="550" width="1" height="0.9" fill="#0000ff"/>
<rect x="538" y="550" width="1" height="0.6" fill="#0000ff"/>
<rect x="544" y="548.7" width="1" height="1.3" fill="#ff0000"/>
<rect x="550" y="546.4" width="1" height="3.6" fill="#ff0000"/>
<rect x="556" y="546.4" width="1" height="3.6" fill="#ff0000"/>
<rect x="562" y="544.8" width="1" height="5.2" fill="#ff0000"/>
<rect x="568" y="544.7" width="1" height="5.3" fill="#ff0000"/>
<rect x="574" y="544.1" width="1" height="5.9" fill="#ff0000"/>
<rect x="580" y="544.0" width="1" height="6.0" fill="#ff0000"/>
<rect x="586" y="543.9" width="1" height="6.1" fill="#ff0000"/>
<rect x="592" y="542.8" width="1" height="7.2" fill="#ff0000"/>
<rect x="598" y="542.8" width="1" height="7.2" fill="#ff0000"/>
<rect x="604" y="542.0" width="1" height="8.0" fill="#ff0000"/>
<rect x="610" y="541.2" width="1" height="8.8" fill="#ff0000"/>
<rect x="616" y="541.2" width="1" height="8.8" fill="#ff0000"/>
<rect x="622" y="542.1" width="1" height="7.9" fill="#ff0000"/>
<rect x="628" y="543.7" width="1" height="6.3" fill="#ff0000"/>
<rect x="634" y="544.3" width="1" height="5.7" fill="#ff0000"/>
<rect x="640" y="543.5" width="1" height="6.5" fill="#ff0000"/>
<rect x="646" y="542.2" width="1" height="7.8" fill="#ff0000"/>
<rect x="652" y="541.8" width="1" height="8.2" fill="#ff0000"/>
<rect x="658" y="541.2" width="1" height="8.8" fill="#ff0000"/>
<rect x="664" y="541.1" width="1" height="8.9" fill="#ff0000"/>
<rect x="670" y="541.7" width="1" height="8.3" fill="#ff0000"/>
<rect x="676" y="543.1" width="1" height="6.9" fill="#ff0000"/>
<rect x="682" y="545.5" width="1" height="4.5" fill="#ff0000"/>
<rect x="688" y="547.6" width="1" height="2.4" fill="#ff0000"/>
<rect x="694" y="549.2" width="1" height="0.8" fill="#ff0000"/>
<rect x="700" y="550" width="1" height="1.5" fill="#0000ff"/>
<rect x="706" y="550" width="1" height="2.8" fill="#0000ff"/>
<rect x="712" y="550" width="1" height="3.2" fill="#0000ff"/>
<rect x="718" y="550" width="1" height="3.7" fill="#0000ff"/>
<rect x="724" y="550" width="1" height="3.1" fill="#0000ff"/>
<rect x="730" y="550" width="1" height="3.8" fill="#0000ff"/>
<rect x="736" y="550" width="1" height="5.5" fill="#0000ff"/>
<rect x="742" y="550" width="1" height="6.6" fill="#0000ff"/>
<rect x="748" y="550" width="1" height="7.9" fill="#0000ff"/>
<rect x="754" y="550" width="1" height="7.5" fill="#0000ff"/>
<rect x="760" y="550" width="1" height="5.7" fill="#0000ff"/>
<rect x="766" y="550" width="1" height="3.7" fill="#0000ff"/>
<rect x="772" y="550" width="1" height="1.6" fill="#0000ff"/>
<rect x="778" y="550" width="1" height="0.6" fill="#0000ff"/>
<rect x="784" y="549.8" width="1" height="0.2" fill="#ff0000"/>
<rect x="790" y="550" width="1" height="0.1" fill="#0000ff"/>
<rect x="796" y="548.7" width="1" height="1.3" fill="#ff0000"/>
<rect x="802" y="547.1" width="1" height="2.9" fill="#ff0000"/>
<rect x="808" y="545.6" width="1" height="4.4" fill="#ff0000"/>
<rect x="814" y="543.9" width="1" height="6.1" fill="#ff0000"/>
<rect x="820" y="543.9" width="1" height="6.1" fill="#ff0000"/>
<rect x="826" y="544.2" width="1" height="5.8" fill="#ff0000"/>
<rect x="832" y="544.4" width="1" height="5.6" fill="#ff0000"/>
<rect x="838" y="544.8" width="1" height="5.2" fill="#ff0000"/>
<rect x="844" y="543.8" width="1" height="6.2" fill="#ff0000"/>
<rect x="850" y="543.0" width="1" height="7.0" fill="#ff0000"/>
<rect x="856" y="542.8" width="1" height="7.2" fill="#ff0000"/>
<rect x="862" y="543.3" width="1" height="6.7" fill="#ff0000"/>
<rect x="868" y="544.2" width="1" height="5.8" fill="#ff0000"/>
<rect x="874" y="544.7" width="1" height="5.3" fill="#ff0000"/>
<rect x="880" y="546.3" width="1" height="3.7" fill="#ff0000"/>
<rect x="886" y="547.6" width="1" height="2.4" fill="#ff0000"/>
<rect x="892" y="549.1" width="1" height="0.9" fill="#ff0000"/>
<rect x="898" y="549.8" width="1" height="0.2" fill="#ff0000"/>
<rect x="904" y="550" width="1" height="1.2" fill="#0000ff"/>
<rect x="910" y="550" width="1" height="3.5" fill="#0000ff"/>
<rect x="916" y="550" width="1" height="5.3" fill="#0000ff"/>
<rect x="922" y="550" width="1" height="6.3" fill="#0000ff"/>
<rect x="928" y="550" width="1" height="7.5" fill="#0000ff"/>
<rect x="934" y="550" width="1" height="8.0" fill="#0000ff"/>
<rect x="940" y="550" width="1" height="6.1" fill="#0000ff"/>
<rect x="946" y="550" width="1" height="4.7" fill="#0000ff"/>
<rect x="952" y="550" width="1" height="4.3" fill="#0000ff"/>
<rect x="958" y="550" width="1" height="2.3" fill="#0000ff"/>
<rect x="964" y="550" width="1" height="0.6" fill="#0000ff"/>
<rect x="970" y="548.1" width="1" height="1.9" fill="#ff0000"/>
<rect x="976" y="547.0" width="1" height="3.0" fill="#ff0000"/>
<rect x="982" y="545.5" width="1" height="4.5" fill="#ff0000"/>
<rect x="988" y="546.1" width="1" height="3.9" fill="#ff0000"/>
<rect x="994" y="546.5" width="1" height="3.5" fill="#ff0000"/>
<rect x="1000" y="547.4" width="1" height="2.6" fill="#ff0000"/>
<rect x="1006" y="547.9" width="1" height="2.1" fill="#ff0000"/>
<rect x="1012" y="550" width="1" height="0.1" fill="#0000ff"/>
<rect x="1018" y="550" width="1" height="1.1" fill="#0000ff"/>
<rect x="1024" y="550" width="1" height="2.5" fill="#0000ff"/>
<rect x="1030" y="550" width="1" height="3.9" fill="#0000ff"/>
<rect x="1036" y="550" width="1" height="4.7" fill="#0000ff"/>
<rect x="1042" y="550" width="1" height="5.4" fill="#0000ff"/>
<rect x="1048" y="550" width="1" height="4.7" fill="#0000ff"/>
<rect x="1054" y="550" width="1" height="3.7" fill="#0000ff"/>
<rect x="1060" y="550" width="1" height="3.8" fill="#0000ff"/>
<rect x="1066" y="550" width="1" height="5.2" fill="#0000ff"/>
<rect x="1072" y="550" width="1" height="6.2" fill="#0000ff"/>
<rect x="1078" y="550" width="1" height="6.6" fill="#0000ff"/>
<rect x="1084" y="550" width="1" height="6.0" fill="#0000ff"/>
<rect x="1090" y="550" width="1" height="4.1" fill="#0000ff"/>
<rect x="1096" y="550" width="1" height="1.7" fill="#0000ff"/>
<rect x="1102" y="548.4" width="1" height="1.6" fill="#ff0000"/>
<rect x="1108" y="546.2" width="1" height="3.8" fill="#ff0000"/>
<rect x="1114" y="544.9" width="1" height="5.1" fill="#ff0000"/>
<rect x="1120" y="544.3" width="1" height="5.7" fill="#ff0000"/>
<rect x="1126" y="544.6" width="1" height="5.4" fill="#ff0000"/>
<rect x="1132" y="544.2" width="1" height="5.8" fill="#ff0000"/>
<rect x="1138" y="545.4" width="1" height="4.6" fill="#ff0000"/>
<rect x="1144" y="546.4" width="1" height="3.6" fill="#ff0000"/>
<rect x="1150" y="548.1" width="1" height="1.9" fill="#ff0000"/>
<rect x="1156" y="548.3" width="1" height="1.7" fill="#ff0000"/>
<rect x="1162" y="548.4" width="1" height="1.6" fill="#ff0000"/>
<rect x="1168" y="547.6" width="1" height="2.4" fill="#ff0000"/>
<rect x="1174" y="547.7" width="1" height="2.3" fill="#ff0000"/>
<rect x="1180" y="548.3" width="1" height="1.7" fill="#ff0000"/>
<rect x="1186" y="548.8" width="1" height="1.2" fill="#ff0000"/>
<rect x="1192" y="550" width="1" height="0.3" fill="#0000ff"/>
<rect x="1198" y="550" width="1" height="2.0" fill="#0000ff"/>
<rect x="1204" y="550" width="1" height="3.7" fill="#0000ff"/>
<rect x="1210" y="550" width="1" height="4.7" fill="#0000ff"/>
<rect x="1216" y="550" width="1" height="5.0" fill="#0000ff"/>
<rect x="1222" y="550" width="1" height="3.5" fill="#0000ff"/>
<rect x="1228" y="550" width="1" height="0.6" fill="#0000ff"/>
<rect x="1234" y="547.6" width="1" height="2.4" fill="#ff0000"/>
<rect x="1240" y="546.0" width="1" height="4.0" fill="#ff0000"/>
<rect x="1246" y="544.4" width="1" height="5.6" fill="#ff0000"/>
<rect x="1252" y="542.5" width="1" height="7.5" fill="#ff0000"/>
<rect x="1258" y="541.5" width="1" height="8.5" fill="#ff0000"/>
<rect x="1264" y="541.0" width="1" height="9.0" fill="#ff0000"/>
<rect x="1270" y="542.3" width="1" height="7.7" fill="#ff0000"/>
<rect x="1276" y="542.8" width="1" height="7.2" fill="#ff0000"/>
<rect x="1282" y="543.2" width="1" height="6.8" fill="#ff0000"/>
<rect x="1288" y="543.8" width="1" height="6.2" fill="#ff0000"/>
<rect x="1294" y="544.8" width="1" height="5.2" fill="#ff0000"/>
<rect x="1300" y="545.6" width="1" height="4.4" fill="#ff0000"/>
<rect x="1306" y="545.7" width="1" height="4.3" fill="#ff0000"/>
<rect x="1312" y="546.4" width="1" height="3.6" fill="#ff0000"/>
<rect x="1318" y="547.1" width="1" height="2.9" fill="#ff0000"/>
<rect x="1324" y="548.0" width="1" height="2.0" fill="#ff0000"/>
<rect x="1330" y="548.3" width="1" height="1.7" fill="#ff0000"/>
<rect x="1336" y="547.3" width="1" height="2.7" fill="#ff0000"/>
<rect x="1342" y="547.1" width="1" height="2.9" fill="#ff0000"/>
<rect x="1348" y="546.5" width="1" height="3.5" fill="#ff0000"/>
<rect x="1354" y="545.7" width="1" height="4.3" fill="#ff0000"/>
<rect x="1360" y="543.4" width="1" height="6.6" fill="#ff0000"/>
<rect x="1366" y="543.8" width="1" height="6.2" fill="#ff0000"/>
<rect x="1372" y="545.5" width="1" height="4.5" fill="#ff0000"/>
<rect x="1378" y="545.9" width="1" height="4.1" fill="#ff0000"/>
<rect x="1384" y="545.1" width="1" height="4.9" fill="#ff0000"/>
<rect x="1390" y="544.4" width="1" height="5.6" fill="#ff0000"/>
<rect x="1396" y="543.9" width="1" height="6.1" fill="#ff0000"/>
<rect x="1402" y="541.5" width="1" height="8.5" fill="#ff0000"/>
<rect x="1408" y="541.7" width="1" height="8.3" fill="#ff0000"/>
<rect x="1414" y="543.3" width="1" height="6.7" fill="#ff0000"/>
<rect x="1420" y="544.4" width="1" height="5.6" fill="#ff0000"/>
<rect x="1426" y="545.1" width="1" height="4.9" fill="#ff0000"/>
<rect x="1432" y="544.8" width="1" height="5.2" fill="#ff0000"/>
<rect x="1438" y="544.6" width="1" height="5.4" fill="#ff0000"/>
<rect x="1444" y="547.7" width="1" height="2.3" fill="#ff0000"/>
<rect x="1450" y="550" width="1" height="0.1" fill="#0000ff"/>
<rect x="1456" y="549.3" width="1" height="0.7" fill="#ff0000"/>
<rect x="1462" y="550" width="1" height="0.7" fill="#0000ff"/>
<rect x="1468" y="550" width="1" height="2.3" fill="#0000ff"/>
<rect x="1474" y="550" width="1" height="5.6" fill="#0000ff"/>
<rect x="1480" y="550" width="1" height="6.5" fill="#0000ff"/>
<rect x="1486" y="550" width="1" height="4.4" fill="#0000ff"/>
<rect x="1492" y="550" width="1" height="4.1" fill="#0000ff"/>
<rect x="1498" y="550" width="1" height="3.7" fill="#0000ff"/>
<rect x="1504" y="550" width="1" height="1.4" fill="#0000ff"/>
<rect x="1510" y="550" width="1" height="0.0" fill="#0000ff"/>
<rect x="1516" y="549.2" width="1" height="0.8" fill="#ff0000"/>
<rect x="11" y="550" width="1505" height="1" fill="#ff00ff"/>
<polyline points="10.5,543.3 16.5,542.2 22.5,541.4 28.5,540.7 34.5,540.1 40.5,539.7 46.5,539.2 52.5,538.8 58.5,538.3 64.5,537.7 70.5,537.3 76.5,537.0 82.5,536.6 88.5,535.9 94.5,535.0 100.5,533.8 106.5,532.3 112.5,530.8 118.5,529.3 124.5,527.7 130.5,526.1 136.5,524.8 142.5,523.5 148.5,522.3 154.5,521.5 160.5,520.7 166.5,520.4 172.5,520.4 178.5,520.9 184.5,521.3 190.5,521.4 196.5,521.5 202.5,521.5 208.5,521.3 214.5,520.9 220.5,520.4 226.5,520.0 232.5,519.8 238.5,519.7 244.5,520.0 250.5,520.6 256.5,521.0 262.5,521.3 268.5,521.8 274.5,522.6 280.5,523.5 286.5,524.6 292.5,526.3 298.5,528.4 304.5,530.9 310.5,533.8 316.5,537.0 322.5,540.2 328.5,543.3 334.5,545.8 340.5,548.2 346.5,550.6 352.5,552.2 358.5,553.5 364.5,554.6 370.5,555.6 376.5,556.5 382.5,557.1 388.5,557.5 394.5,557.8 400.5,558.4 406.5,559.0 412.5,560.1 418.5,561.4 424.5,562.9 430.5,564.6 436.5,566.3 442.5,567.8 448.5,569.4 454.5,571.0 460.5,572.3 466.5,573.9 472.5,575.4 478.5,576.6 484.5,577.8 490.5,578.9 496.5,579.7 502.5,580.3 508.5,580.4 514.5,580.3 520.5,580.0 526.5,580.0 532.5,580.2 538.5,580.3 544.5,580.0 550.5,579.2 556.5,578.4 562.5,577.2 568.5,576.0 574.5,574.6 580.5,573.3 586.5,571.9 592.5,570.3 598.5,568.6 604.5,566.8 610.5,564.8 616.5,562.8 622.5,561.0 628.5,559.6 634.5,558.3 640.5,556.8 646.5,555.1 652.5,553.2 658.5,551.2 664.5,549.2 670.5,547.3 676.5,545.7 682.5,544.7 688.5,544.2 694.5,544.0 700.5,544.3 706.5,544.9 712.5,545.7 718.5,546.5 724.5,547.2 730.5,548.1 736.5,549.3 742.5,550.8 748.5,552.6 754.5,554.3 760.5,555.6 766.5,556.5 772.5,556.8 778.5,557.0 784.5,556.9 790.5,557.0 796.5,556.7 802.5,556.0 808.5,555.0 814.5,553.6 820.5,552.2 826.5,550.9 832.5,549.6 838.5,548.5 844.5,547.0 850.5,545.4 856.5,543.8 862.5,542.3 868.5,541.0 874.5,539.8 880.5,538.9 886.5,538.4 892.5,538.2 898.5,538.1 904.5,538.4 910.5,539.2 916.5,540.4 922.5,541.8 928.5,543.5 934.5,545.4 940.5,546.7 946.5,547.8 952.5,548.8 958.5,549.3 964.5,549.4 970.5,549.0 976.5,548.3 982.5,547.3 988.5,546.4 994.5,545.6 1000.5,545.1 1006.5,544.6 1012.5,544.6 1018.5,544.8 1024.5,545.4 1030.5,546.3 1036.5,547.4 1042.5,548.6 1048.5,549.7 1054.5,550.5 1060.5,551.4 1066.5,552.6 1072.5,554.0 1078.5,555.5 1084.5,556.8 1090.5,557.8 1096.5,558.1 1102.5,557.8 1108.5,556.9 1114.5,555.8 1120.5,554.5 1126.5,553.2 1132.5,551.9 1138.5,550.9 1144.5,550.1 1150.5,549.6 1156.5,549.2 1162.5,548.9 1168.5,548.3 1174.5,547.8 1180.5,547.4 1186.5,547.1 1192.5,547.2 1198.5,547.6 1204.5,548.5 1210.5,549.6 1216.5,550.7 1222.5,551.5 1228.5,551.6 1234.5,551.1 1240.5,550.2 1246.5,548.9 1252.5,547.2 1258.5,545.2 1264.5,543.2 1270.5,541.4 1276.5,539.8 1282.5,538.3 1288.5,536.9 1294.5,535.7 1300.5,534.7 1306.5,533.7 1312.5,532.9 1318.5,532.2 1324.5,531.8 1330.5,531.4 1336.5,530.8 1342.5,530.1 1348.5,529.3 1354.5,528.3 1360.5,526.8 1366.5,525.4 1372.5,524.4 1378.5,523.4 1384.5,522.3 1390.5,521.0 1396.5,519.7 1402.5,517.7 1408.5,515.9 1414.5,514.3 1420.5,513.1 1426.5,511.9 1432.5,510.7 1438.5,509.5 1444.5,509.0 1450.5,509.0 1456.5,508.9 1462.5,509.0 1468.5,509.5 1474.5,510.8 1480.5,512.3 1486.5,513.3 1492.5,514.2 1498.5,515.0 1504.5,515.4 1510.5,515.4 1516.5,515.2" fill="none" stroke="#f05a14" stroke-width="1" shape-rendering="crispEdges"/>
<polyline points="10.5,537.8 16.5,538.0 22.5,538.1 28.5,538.0 34.5,537.6 40.5,537.9 46.5,537.4 52.5,537.2 58.5,536.1 64.5,535.5 70.5,535.8 76.5,535.7 82.5,535.2 88.5,532.8 94.5,531.4 100.5,529.1 106.5,526.5 112.5,524.9 118.5,522.9 124.5,521.4 130.5,519.9 136.5,519.3 142.5,518.3 148.5,517.8 154.5,518.0 160.5,517.8 166.5,518.8 172.5,520.6 178.5,522.9 184.5,523.1 190.5,521.8 196.5,521.6 202.5,521.7 208.5,520.7 214.5,519.3 220.5,518.5 226.5,518.2 232.5,518.9 238.5,519.3 244.5,521.3 250.5,523.1 256.5,522.2 262.5,522.7 268.5,523.9 274.5,525.8 280.5,527.0 286.5,528.9 292.5,533.0 298.5,536.9 304.5,540.9 310.5,545.6 316.5,549.5 322.5,553.2 328.5,555.4 334.5,555.9 340.5,558.0 346.5,559.8 352.5,558.8 358.5,558.8 364.5,559.1 370.5,559.3 376.5,560.0 382.5,559.7 388.5,559.2 394.5,559.1 400.5,560.7 406.5,561.5 412.5,564.6 418.5,566.5 424.5,569.0 430.5,571.1 436.5,573.0 442.5,574.2 448.5,575.6 454.5,577.3 460.5,577.5 466.5,580.2 472.5,581.5 478.5,581.3 484.5,582.6 490.5,583.1 496.5,583.0 502.5,582.5 508.5,581.0 514.5,579.7 520.5,579.2 526.5,579.6 532.5,581.0 538.5,580.9 544.5,578.9 550.5,575.9 556.5,575.1 562.5,572.5 568.5,571.2 574.5,569.3 580.5,567.8 586.5,566.4 592.5,563.8 598.5,562.1 604.5,559.6 610.5,556.8 616.5,554.8 622.5,553.9 628.5,553.9 634.5,553.1 640.5,550.9 646.5,548.0 652.5,545.7 658.5,543.2 664.5,541.1 670.5,539.7 676.5,539.4 682.5,540.6 688.5,542.0 694.5,543.3 700.5,545.7 706.5,547.5 712.5,548.6 718.5,549.8 724.5,550.1 730.5,551.6 736.5,554.4 742.5,556.8 748.5,559.8 754.5,561.2 760.5,560.8 766.5,559.8 772.5,558.3 778.5,557.5 784.5,556.8 790.5,557.0 796.5,555.4 802.5,553.3 808.5,551.0 814.5,548.1 820.5,546.7 826.5,545.7 832.5,544.5 838.5,543.7 844.5,541.4 850.5,539.0 856.5,537.3 862.5,536.2 868.5,535.6 874.5,534.9 880.5,535.6 886.5,536.2 892.5,537.3 898.5,538.0 904.5,539.5 910.5,542.4 916.5,545.2 922.5,547.6 928.5,550.4 934.5,552.6 940.5,552.3 946.5,552.1 952.5,552.6 958.5,551.4 964.5,550.0 970.5,547.3 976.5,545.6 982.5,543.2 988.5,542.9 994.5,542.5 1000.5,542.7 1006.5,542.6 1012.5,544.6 1018.5,545.9 1024.5,547.7 1030.5,549.9 1036.5,551.7 1042.5,553.5 1048.5,554.0 1054.5,553.9 1060.5,554.8 1066.5,557.2 1072.5,559.6 1078.5,561.5 1084.5,562.2 1090.5,561.5 1096.5,559.7 1102.5,556.3 1108.5,553.5 1114.5,551.1 1120.5,549.2 1126.5,548.4 1132.5,546.7 1138.5,546.7 1144.5,546.8 1150.5,547.9 1156.5,547.7 1162.5,547.4 1168.5,546.1 1174.5,545.7 1180.5,545.8 1186.5,546.0 1192.5,547.5 1198.5,549.4 1204.5,551.9 1210.5,553.9 1216.5,555.2 1222.5,554.6 1228.5,552.2 1234.5,548.9 1240.5,546.5 1246.5,543.8 1252.5,540.3 1258.5,537.5 1264.5,535.0 1270.5,534.4 1276.5,533.2 1282.5,532.1 1288.5,531.2 1294.5,530.9 1300.5,530.7 1306.5,529.8 1312.5,529.6 1318.5,529.6 1324.5,529.9 1330.5,529.8 1336.5,528.3 1342.5,527.4 1348.5,526.1 1354.5,524.3 1360.5,520.9 1366.5,519.8 1372.5,520.3 1378.5,519.7 1384.5,517.9 1390.5,515.9 1396.5,514.2 1402.5,510.1 1408.5,508.3 1414.5,508.3 1420.5,507.9 1426.5,507.4 1432.5,506.0 1438.5,504.6 1444.5,506.9 1450.5,509.1 1456.5,508.2 1462.5,509.6 1468.5,511.6 1474.5,515.8 1480.5,518.1 1486.5,517.2 1492.5,517.9 1498.5,518.4 1504.5,516.7 1510.5,515.4 1516.5,514.5" fill="none" stroke="#0a8c32" stroke-width="1" shape-rendering="crispEdges"/>
</svg>
<svg x="11" y="591" width="1516" height="100" viewBox="11 591 1516 100" overflow="hidden">
<polyline points="10.5,628.8 16.5,634.4 22.5,634.3 28.5,629.7 34.5,631.3 40.5,626.1 46.5,625.9 52.5,628.4 58.5,627.9 64.5,633.3 70.5,638.6 76.5,637.6 82.5,639.2 88.5,628.8 94.5,629.9 100.5,621.4 106.5,620.4 112.5,621.4 118.5,620.9 124.5,616.3 130.5,616.6 136.5,618.5 142.5,618.5 148.5,617.8 154.5,614.6 160.5,614.4 166.5,621.5 172.5,630.2 178.5,633.0 184.5,631.6 190.5,629.7 196.5,632.3 202.5,634.5 208.5,631.6 214.5,630.9 220.5,629.4 226.5,631.6 232.5,635.0 238.5,632.4 244.5,641.3 250.5,636.8 256.5,628.2 262.5,629.0 268.5,636.3 274.5,644.3 280.5,640.2 286.5,643.6 292.5,658.5 298.5,664.1 304.5,666.3 310.5,669.2 316.5,668.4 322.5,672.2 328.5,666.2 334.5,661.9 340.5,677.1 346.5,676.4 352.5,664.5 358.5,665.0 364.5,667.6 370.5,666.7 376.5,663.0 382.5,657.8 388.5,654.6 394.5,650.9 400.5,656.9 406.5,652.9 412.5,663.3 418.5,666.2 424.5,665.2 430.5,665.3 436.5,678.6 442.5,677.1 448.5,677.6 454.5,678.7 460.5,672.9 466.5,681.3 472.5,680.0 478.5,674.7 484.5,674.8 490.5,675.7 496.5,670.9 502.5,673.4 508.5,666.1 514.5,666.0 520.5,666.8 526.5,669.5 532.5,670.9 538.5,665.0 544.5,661.3 550.5,648.7 556.5,656.0 562.5,653.3 568.5,650.5 574.5,649.1 580.5,650.2 586.5,650.2 592.5,648.4 598.5,649.4 604.5,643.6 610.5,637.9 616.5,632.6 622.5,637.6 628.5,645.6 634.5,646.6 640.5,633.6 646.5,634.7 652.5,629.5 658.5,629.0 664.5,627.2 670.5,628.3 676.5,635.8 682.5,640.1 688.5,645.8 694.5,648.9 700.5,653.9 706.5,650.5 712.5,645.1 718.5,650.3 724.5,654.8 730.5,668.8 736.5,673.0 742.5,679.3 748.5,682.8 754.5,676.6 760.5,667.6 766.5,660.7 772.5,656.5 778.5,657.9 784.5,652.8 790.5,656.9 796.5,650.9 802.5,647.2 808.5,647.4 814.5,639.0 820.5,635.2 826.5,634.1 832.5,626.7 838.5,628.6 844.5,627.6 850.5,627.6 856.5,628.7 862.5,626.5 868.5,627.7 874.5,619.6 880.5,631.6 886.5,633.8 892.5,640.7 898.5,643.7 904.5,644.1 910.5,652.8 916.5,657.4 922.5,657.6 928.5,673.7 934.5,679.2 940.5,663.9 946.5,663.7 952.5,665.3 958.5,658.8 964.5,653.3 970.5,647.1 976.5,646.5 982.5,644.3 988.5,646.5 994.5,639.3 1000.5,639.0 1006.5,637.7 1012.5,642.3 1018.5,641.2 1024.5,650.6 1030.5,652.7 1036.5,650.8 1042.5,659.3 1048.5,656.8 1054.5,663.1 1060.5,664.7 1066.5,675.2 1072.5,673.5 1078.5,675.5 1084.5,670.9 1090.5,665.7 1096.5,653.7 1102.5,648.3 1108.5,644.3 1114.5,640.5 1120.5,639.9 1126.5,640.8 1132.5,640.3 1138.5,647.6 1144.5,643.6 1150.5,639.2 1156.5,633.2 1162.5,631.8 1168.5,630.7 1174.5,636.4 1180.5,643.0 1186.5,651.6 1192.5,658.5 1198.5,662.1 1204.5,664.9 1210.5,663.5 1216.5,669.0 1222.5,654.7 1228.5,646.1 1234.5,637.7 1240.5,641.3 1246.5,639.2 1252.5,638.2 1258.5,635.3 1264.5,631.8 1270.5,637.8 1276.5,629.7 1282.5,624.4 1288.5,618.6 1294.5,619.0 1300.5,618.9 1306.5,619.7 1312.5,624.7 1318.5,627.4 1324.5,627.4 1330.5,628.2 1336.5,627.6 1342.5,628.3 1348.5,627.0 1354.5,613.2 1360.5,612.2 1366.5,623.5 1372.5,630.2 1378.5,626.8 1384.5,624.7 1390.5,624.6 1396.5,622.6 1402.5,619.8 1408.5,623.5 1414.5,627.5 1420.5,628.5 1426.5,627.6 1432.5,626.9 1438.5,627.1 1444.5,639.8 1450.5,635.6 1456.5,628.2 1462.5,635.2 1468.5,638.7 1474.5,646.4 1480.5,644.9 1486.5,645.0 1492.5,645.1 1498.5,642.3 1504.5,639.5 1510.5,640.1 1516.5,642.1" fill="none" stroke="#0a8c32" stroke-width="1" shape-rendering="crispEdges"/>
<rect x="11" y="633" width="1505" height="1" fill="#1e64dc"/>
<rect x="11" y="668" width="1505" height="1" fill="#f05a14"/>
</svg>
<svg x="11" y="693" width="1516" height="77" viewBox="11 693 1516 77" overflow="hidden">
<polyline points="10.5,731.5 16.5,735.0 22.5,734.7 28.5,734.7 34.5,733.1 40.5,735.9 46.5,733.4 52.5,734.4 58.5,731.5 64.5,733.1 70.5,736.2 76.5,735.8 82.5,734.5 88.5,727.9 94.5,729.9 100.5,725.7 106.5,723.7 112.5,725.3 118.5,723.2 124.5,723.3 130.5,722.8 136.5,725.4 142.5,723.6 148.5,725.3 154.5,727.6 160.5,726.9 166.5,731.2 172.5,734.5 178.5,737.7 184.5,732.3 190.5,728.2 196.5,731.6 202.5,732.7 208.5,729.0 214.5,727.7 220.5,728.9 226.5,730.0 232.5,733.0 238.5,732.2 244.5,737.4 250.5,737.5 256.5,730.2 262.5,733.6 268.5,736.3 274.5,738.8 280.5,737.9 286.5,740.5 292.5,748.6 298.5,750.6 304.5,753.3 310.5,757.3 316.5,757.1 322.5,758.9 328.5,755.7 334.5,751.1 340.5,755.9 346.5,755.5 352.5,747.4 358.5,749.3 364.5,749.7 370.5,749.3 376.5,750.4 382.5,746.4 388.5,745.1 394.5,745.6 400.5,750.4 406.5,748.1 412.5,756.1 418.5,753.5 424.5,756.9 430.5,756.9 436.5,757.9 442.5,756.8 448.5,758.3 454.5,760.1 460.5,756.4 466.5,764.7 472.5,761.7 478.5,756.8 484.5,761.8 490.5,759.5 496.5,757.5 502.5,755.6 508.5,751.1 514.5,750.4 520.5,752.2 526.5,754.5 532.5,758.4 538.5,753.9 544.5,746.9 550.5,742.1 556.5,748.2 562.5,741.0 568.5,743.9 574.5,741.3 580.5,741.5 586.5,741.3 592.5,736.2 598.5,738.2 604.5,734.5 610.5,732.4 616.5,733.7 622.5,736.7 628.5,739.8 634.5,737.0 640.5,731.8 646.5,728.2 652.5,729.8 658.5,728.3 664.5,728.4 670.5,729.9 676.5,733.5 682.5,739.0 688.5,741.0 694.5,741.7 700.5,746.9 706.5,746.8 712.5,745.8 718.5,747.1 724.5,744.4 730.5,749.0 736.5,754.7 742.5,755.2 748.5,758.9 754.5,755.3 760.5,750.0 766.5,746.9 772.5,744.0 778.5,745.0 784.5,743.9 790.5,746.6 796.5,739.4 802.5,736.3 808.5,733.8 814.5,729.9 820.5,733.6 826.5,734.1 832.5,732.9 838.5,733.5 844.5,727.3 850.5,725.9 856.5,727.1 862.5,729.0 868.5,731.1 874.5,730.8 880.5,735.7 886.5,736.2 892.5,738.9 898.5,738.0 904.5,742.0 910.5,748.2 916.5,750.2 922.5,750.5 928.5,753.5 934.5,752.9 940.5,745.6 946.5,745.9 952.5,748.2 958.5,742.2 964.5,740.7 970.5,734.7 976.5,736.1 982.5,732.1 988.5,737.5 994.5,736.4 1000.5,738.1 1006.5,737.0 1012.5,744.0 1018.5,742.2 1024.5,745.0 1030.5,747.6 1036.5,748.0 1042.5,749.4 1048.5,746.5 1054.5,745.3 1060.5,748.7 1066.5,754.8 1072.5,756.3 1078.5,756.0 1084.5,753.2 1090.5,747.9 1096.5,743.0 1102.5,736.0 1108.5,735.2 1114.5,734.7 1120.5,734.5 1126.5,736.4 1132.5,732.9 1138.5,737.8 1144.5,738.1 1150.5,741.7 1156.5,738.1 1162.5,737.8 1168.5,734.4 1174.5,736.4 1180.5,738.5 1186.5,739.3 1192.5,744.5 1198.5,748.0 1204.5,751.4 1210.5,751.7 1216.5,750.8 1222.5,744.6 1228.5,737.4 1234.5,732.9 1240.5,733.5 1246.5,730.8 1252.5,726.3 1258.5,726.3 1264.5,725.8 1270.5,731.2 1276.5,728.7 1282.5,728.1 1288.5,728.4 1294.5,729.7 1300.5,729.8 1306.5,727.7 1312.5,730.0 1318.5,731.1 1324.5,733.0 1330.5,732.5 1336.5,728.9 1342.5,730.6 1348.5,729.0 1354.5,727.0 1360.5,720.6 1366.5,726.6 1372.5,731.1 1378.5,727.7 1384.5,723.5 1390.5,722.2 1396.5,721.9 1402.5,713.7 1408.5,719.1 1414.5,723.9 1420.5,723.3 1426.5,722.9 1432.5,720.1 1438.5,720.0 1444.5,731.1 1450.5,732.6 1456.5,724.5 1462.5,731.7 1468.5,734.1 1474.5,742.3 1480.5,738.6 1486.5,730.4 1492.5,735.1 1498.5,735.2 1504.5,728.8 1510.5,729.2 1516.5,729.5" fill="none" stroke="#0a8c32" stroke-width="1" shape-rendering="crispEdges"/>
<rect x="11" y="742" width="1505" height="1" fill="#f05a14"/>
</svg>
<svg x="11" y="772" width="1516" height="101" viewBox="11 772 1516 101" overflow="hidden">
<polyline points="10.5,820.8 16.5,820.8 22.5,820.8 28.5,811.7 34.5,811.7 40.5,820.8 46.5,820.8 52.5,830.0 58.5,820.8 64.5,830.0 70.5,839.2 76.5,830.0 82.5,820.8 88.5,811.7 94.5,820.8 100.5,820.8 106.5,820.8 112.5,820.8 118.5,820.8 124.5,811.7 130.5,811.7 136.5,811.7 142.5,802.5 148.5,802.5 154.5,811.7 160.5,811.7 166.5,811.7 172.5,820.8 178.5,830.0 184.5,820.8 190.5,820.8 196.5,830.0 202.5,830.0 208.5,820.8 214.5,820.8 220.5,820.8 226.5,811.7 232.5,820.8 238.5,811.7 244.5,811.7 250.5,802.5 256.5,802.5 262.5,811.7 268.5,811.7 274.5,820.8 280.5,820.8 286.5,830.0 292.5,839.2 298.5,848.3 304.5,848.3 310.5,857.5 316.5,857.5 322.5,866.7 328.5,866.7 334.5,857.5 340.5,857.5 346.5,857.5 352.5,857.5 358.5,857.5 364.5,857.5 370.5,857.5 376.5,857.5 382.5,848.3 388.5,839.2 394.5,839.2 400.5,848.3 406.5,848.3 412.5,848.3 418.5,839.2 424.5,848.3 430.5,848.3 436.5,848.3 442.5,839.2 448.5,839.2 454.5,848.3 460.5,848.3 466.5,848.3 472.5,839.2 478.5,839.2 484.5,839.2 490.5,839.2 496.5,830.0 502.5,820.8 508.5,811.7 514.5,820.8 520.5,820.8 526.5,820.8 532.5,830.0 538.5,820.8 544.5,820.8 550.5,820.8 556.5,820.8 562.5,820.8 568.5,830.0 574.5,830.0 580.5,839.2 586.5,830.0 592.5,820.8 598.5,820.8 604.5,811.7 610.5,811.7 616.5,820.8 622.5,830.0 628.5,830.0 634.5,830.0 640.5,820.8 646.5,820.8 652.5,820.8 658.5,820.8 664.5,820.8 670.5,820.8 676.5,830.0 682.5,839.2 688.5,839.2 694.5,839.2 700.5,839.2 706.5,839.2 712.5,839.2 718.5,848.3 724.5,839.2 730.5,848.3 736.5,857.5 742.5,857.5 748.5,857.5 754.5,848.3 760.5,839.2 766.5,830.0 772.5,820.8 778.5,830.0 784.5,830.0 790.5,830.0 796.5,830.0 802.5,820.8 808.5,811.7 814.5,802.5 820.5,802.5 826.5,811.7 832.5,811.7 838.5,820.8 844.5,820.8 850.5,811.7 856.5,811.7 862.5,811.7 868.5,820.8 874.5,820.8 880.5,830.0 886.5,830.0 892.5,830.0 898.5,820.8 904.5,830.0 910.5,830.0 916.5,839.2 922.5,848.3 928.5,857.5 934.5,848.3 940.5,839.2 946.5,848.3 952.5,848.3 958.5,848.3 964.5,839.2 970.5,839.2 976.5,839.2 982.5,830.0 988.5,830.0 994.5,820.8 1000.5,820.8 1006.5,820.8 1012.5,830.0 1018.5,820.8 1024.5,820.8 1030.5,830.0 1036.5,839.2 1042.5,848.3 1048.5,839.2 1054.5,839.2 1060.5,839.2 1066.5,848.3 1072.5,848.3 1078.5,857.5 1084.5,848.3 1090.5,848.3 1096.5,839.2 1102.5,830.0 1108.5,820.8 1114.5,811.7 1120.5,811.7 1126.5,820.8 1132.5,811.7 1138.5,811.7 1144.5,811.7 1150.5,811.7 1156.5,811.7 1162.5,811.7 1168.5,811.7 1174.5,820.8 1180.5,830.0 1186.5,839.2 1192.5,848.3 1198.5,848.3 1204.5,857.5 1210.5,857.5 1216.5,848.3 1222.5,839.2 1228.5,839.2 1234.5,839.2 1240.5,848.3 1246.5,839.2 1252.5,830.0 1258.5,820.8 1264.5,811.7 1270.5,811.7 1276.5,802.5 1282.5,793.3 1288.5,793.3 1294.5,802.5 1300.5,802.5 1306.5,802.5 1312.5,802.5 1318.5,802.5 1324.5,811.7 1330.5,811.7 1336.5,811.7 1342.5,811.7 1348.5,811.7 1354.5,811.7 1360.5,811.7 1366.5,811.7 1372.5,820.8 1378.5,820.8 1384.5,811.7 1390.5,811.7 1396.5,802.5 1402.5,802.5 1408.5,811.7 1414.5,811.7 1420.5,811.7 1426.5,811.7 1432.5,811.7 1438.5,802.5 1444.5,802.5 1450.5,802.5 1456.5,802.5 1462.5,811.7 1468.5,820.8 1474.5,830.0 1480.5,820.8 1486.5,811.7 1492.5,820.8 1498.5,820.8 1504.5,820.8 1510.5,820.8 1516.5,811.7" fill="none" stroke="#0a8c32" stroke-width="1" shape-rendering="crispEdges"/>
<rect x="11" y="803" width="1505" height="1" fill="#1e64dc"/>
<rect x="11" y="857" width="1505" height="1" fill="#f05a14"/>
</svg>
<svg x="11" y="875" width="1516" height="80" viewBox="11 875 1516 80" overflow="hidden">
<rect x="15" y="938" width="3" height="16" fill="#009628"/>
<rect x="21" y="931" width="3" height="23" fill="#009628"/>
<rect x="27" y="930" width="3" height="24" fill="#009628"/>
<rect x="33" y="928" width="3" height="26" fill="#009628"/>
<rect x="39" y="927" width="3" height="27" fill="#009628"/>
<rect x="45" y="929" width="3" height="25" fill="#009628"/>
<rect x="51" y="930" width="3" height="24" fill="#009628"/>
<rect x="57" y="925" width="3" height="29" fill="#009628"/>
<rect x="63" y="921" width="3" height="33" fill="#009628"/>
<rect x="69" y="927" width="3" height="27" fill="#009628"/>
<rect x="75" y="932" width="3" height="22" fill="#009628"/>
<rect x="81" y="930" width="3" height="24" fill="#009628"/>
<rect x="87" y="918" width="3" height="36" fill="#009628"/>
<rect x="93" y="925" width="3" height="29" fill="#009628"/>
<rect x="99" y="922" width="3" height="32" fill="#009628"/>
<rect x="105" y="925" width="3" height="29" fill="#009628"/>
<rect x="111" y="926" width="3" height="28" fill="#009628"/>
<rect x="117" y="925" width="3" height="29" fill="#009628"/>
<rect x="123" y="924" width="3" height="30" fill="#009628"/>
<rect x="129" y="923" width="3" height="31" fill="#009628"/>
<rect x="135" y="924" width="3" height="30" fill="#009628"/>
<rect x="141" y="924" width="3" height="30" fill="#009628"/>
<rect x="147" y="915" width="3" height="39" fill="#009628"/>
<rect x="153" y="922" width="3" height="32" fill="#009628"/>
<rect x="159" y="928" width="3" height="26" fill="#009628"/>
<rect x="165" y="934" width="3" height="20" fill="#009628"/>
<rect x="171" y="924" width="3" height="30" fill="#009628"/>
<rect x="177" y="928" width="3" height="26" fill="#009628"/>
<rect x="183" y="931" width="3" height="23" fill="#009628"/>
<rect x="189" y="908" width="3" height="46" fill="#009628"/>
<rect x="195" y="928" width="3" height="26" fill="#009628"/>
<rect x="201" y="920" width="3" height="34" fill="#009628"/>
<rect x="207" y="927" width="3" height="27" fill="#009628"/>
<rect x="213" y="926" width="3" height="28" fill="#009628"/>
<rect x="219" y="929" width="3" height="25" fill="#009628"/>
<rect x="225" y="933" width="3" height="21" fill="#009628"/>
<rect x="231" y="931" width="3" height="23" fill="#009628"/>
<rect x="237" y="933" width="3" height="21" fill="#009628"/>
<rect x="243" y="937" width="3" height="17" fill="#009628"/>
<rect x="249" y="936" width="3" height="18" fill="#009628"/>
<rect x="255" y="928" width="3" height="26" fill="#009628"/>
<rect x="261" y="933" width="3" height="21" fill="#009628"/>
<rect x="267" y="933" width="3" height="21" fill="#009628"/>
<rect x="273" y="934" width="3" height="20" fill="#009628"/>
<rect x="279" y="930" width="3" height="24" fill="#009628"/>
<rect x="285" y="938" width="3" height="16" fill="#009628"/>
<rect x="291" y="931" width="3" height="23" fill="#009628"/>
<rect x="297" y="929" width="3" height="25" fill="#009628"/>
<rect x="303" y="938" width="3" height="16" fill="#009628"/>
<rect x="309" y="939" width="3" height="15" fill="#009628"/>
<rect x="315" y="934" width="3" height="20" fill="#009628"/>
<rect x="321" y="931" width="3" height="23" fill="#009628"/>
<rect x="327" y="936" width="3" height="18" fill="#009628"/>
<rect x="333" y="930" width="3" height="24" fill="#009628"/>
<rect x="339" y="940" width="3" height="14" fill="#009628"/>
<rect x="345" y="940" width="3" height="14" fill="#009628"/>
<rect x="351" y="938" width="3" height="16" fill="#009628"/>
<rect x="357" y="939" width="3" height="15" fill="#009628"/>
<rect x="363" y="940" width="3" height="14" fill="#009628"/>
<rect x="369" y="940" width="3" height="14" fill="#009628"/>
<rect x="375" y="940" width="3" height="14" fill="#009628"/>
<rect x="381" y="942" width="3" height="12" fill="#009628"/>
<rect x="387" y="940" width="3" height="14" fill="#009628"/>
<rect x="393" y="929" width="3" height="25" fill="#009628"/>
<rect x="399" y="938" width="3" height="16" fill="#009628"/>
<rect x="405" y="944" width="3" height="10" fill="#009628"/>
<rect x="411" y="936" width="3" height="18" fill="#009628"/>
<rect x="417" y="939" width="3" height="15" fill="#009628"/>
<rect x="423" y="936" width="3" height="18" fill="#009628"/>
<rect x="429" y="934" width="3" height="20" fill="#009628"/>
<rect x="435" y="933" width="3" height="21" fill="#009628"/>
<rect x="441" y="938" width="3" height="16" fill="#009628"/>
<rect x="447" y="932" width="3" height="22" fill="#009628"/>
<rect x="453" y="933" width="3" height="21" fill="#009628"/>
<rect x="459" y="931" width="3" height="23" fill="#009628"/>
<rect x="465" y="932" width="3" height="22" fill="#009628"/>
<rect x="471" y="941" width="3" height="13" fill="#009628"/>
<rect x="477" y="940" width="3" height="14" fill="#009628"/>
<rect x="483" y="934" width="3" height="20" fill="#009628"/>
<rect x="489" y="936" width="3" height="18" fill="#009628"/>
<rect x="495" y="940" width="3" height="14" fill="#009628"/>
<rect x="501" y="944" width="3" height="10" fill="#009628"/>
<rect x="507" y="936" width="3" height="18" fill="#009628"/>
<rect x="513" y="939" width="3" height="15" fill="#009628"/>
<rect x="519" y="927" width="3" height="27" fill="#009628"/>
<rect x="525" y="937" width="3" height="17" fill="#009628"/>
<rect x="531" y="937" width="3" height="17" fill="#009628"/>
<rect x="537" y="936" width="3" height="18" fill="#009628"/>
<rect x="543" y="931" width="3" height="23" fill="#009628"/>
<rect x="549" y="937" width="3" height="17" fill="#009628"/>
<rect x="555" y="927" width="3" height="27" fill="#009628"/>
<rect x="561" y="942" width="3" height="12" fill="#009628"/>
<rect x="567" y="940" width="3" height="14" fill="#009628"/>
<rect x="573" y="942" width="3" height="12" fill="#009628"/>
<rect x="579" y="943" width="3" height="11" fill="#009628"/>
<rect x="585" y="941" width="3" height="13" fill="#009628"/>
<rect x="591" y="941" width="3" height="13" fill="#009628"/>
<rect x="597" y="943" width="3" height="11" fill="#009628"/>
<rect x="603" y="940" width="3" height="14" fill="#009628"/>
<rect x="609" y="936" width="3" height="18" fill="#009628"/>
<rect x="615" y="939" width="3" height="15" fill="#009628"/>
<rect x="621" y="943" width="3" height="11" fill="#009628"/>
<rect x="627" y="936" width="3" height="18" fill="#009628"/>
<rect x="633" y="939" width="3" height="15" fill="#009628"/>
<rect x="639" y="937" width="3" height="17" fill="#009628"/>
<rect x="645" y="933" width="3" height="21" fill="#009628"/>
<rect x="651" y="941" width="3" height="13" fill="#009628"/>
<rect x="657" y="937" width="3" height="17" fill="#009628"/>
<rect x="663" y="941" width="3" height="13" fill="#009628"/>
<rect x="669" y="942" width="3" height="12" fill="#009628"/>
<rect x="675" y="940" width="3" height="14" fill="#009628"/>
<rect x="681" y="944" width="3" height="10" fill="#009628"/>
<rect x="687" y="940" width="3" height="14" fill="#009628"/>
<rect x="693" y="943" width="3" height="11" fill="#009628"/>
<rect x="699" y="935" width="3" height="19" fill="#009628"/>
<rect x="705" y="939" width="3" height="15" fill="#009628"/>
<rect x="711" y="941" width="3" height="13" fill="#009628"/>
<rect x="717" y="939" width="3" height="15" fill="#009628"/>
<rect x="723" y="941" width="3" height="13" fill="#009628"/>
<rect x="729" y="940" width="3" height="14" fill="#009628"/>
<rect x="735" y="942" width="3" height="12" fill="#009628"/>
<rect x="741" y="938" width="3" height="16" fill="#009628"/>
<rect x="747" y="936" width="3" height="18" fill="#009628"/>
<rect x="753" y="934" width="3" height="20" fill="#009628"/>
<rect x="759" y="938" width="3" height="16" fill="#009628"/>
<rect x="765" y="942" width="3" height="12" fill="#009628"/>
<rect x="771" y="936" width="3" height="18" fill="#009628"/>
<rect x="777" y="940" width="3" height="14" fill="#009628"/>
<rect x="783" y="939" width="3" height="15" fill="#009628"/>
<rect x="789" y="936" width="3" height="18" fill="#009628"/>
<rect x="795" y="942" width="3" height="12" fill="#009628"/>
<rect x="801" y="941" width="3" height="13" fill="#009628"/>
<rect x="807" y="931" width="3" height="23" fill="#009628"/>
<rect x="813" y="933" width="3" height="21" fill="#009628"/>
<rect x="819" y="939" width="3" height="15" fill="#009628"/>
<rect x="825" y="947" width="3" height="7" fill="#009628"/>
<rect x="831" y="938" width="3" height="16" fill="#009628"/>
<rect x="837" y="941" width="3" height="13" fill="#009628"/>
<rect x="843" y="940" width="3" height="14" fill="#009628"/>
<rect x="849" y="937" width="3" height="17" fill="#009628"/>
<rect x="855" y="944" width="3" height="10" fill="#009628"/>
<rect x="861" y="945" width="3" height="9" fill="#009628"/>
<rect x="867" y="945" width="3" height="9" fill="#009628"/>
<rect x="873" y="943" width="3" height="11" fill="#009628"/>
<rect x="879" y="946" width="3" height="8" fill="#009628"/>
<rect x="885" y="948" width="3" height="6" fill="#009628"/>
<rect x="891" y="939" width="3" height="15" fill="#009628"/>
<rect x="897" y="942" width="3" height="12" fill="#009628"/>
<rect x="903" y="943" width="3" height="11" fill="#009628"/>
<rect x="909" y="939" width="3" height="15" fill="#009628"/>
<rect x="915" y="939" width="3" height="15" fill="#009628"/>
<rect x="921" y="941" width="3" height="13" fill="#009628"/>
<rect x="927" y="941" width="3" height="13" fill="#009628"/>
<rect x="933" y="940" width="3" height="14" fill="#009628"/>
<rect x="939" y="933" width="3" height="21" fill="#009628"/>
<rect x="945" y="942" width="3" height="12" fill="#009628"/>
<rect x="951" y="944" width="3" height="10" fill="#009628"/>
<rect x="957" y="940" width="3" height="14" fill="#009628"/>
<rect x="963" y="944" width="3" height="10" fill="#009628"/>
<rect x="969" y="924" width="3" height="30" fill="#009628"/>
<rect x="975" y="936" width="3" height="18" fill="#009628"/>
<rect x="981" y="931" width="3" height="23" fill="#009628"/>
<rect x="987" y="934" width="3" height="20" fill="#009628"/>
<rect x="993" y="939" width="3" height="15" fill="#009628"/>
<rect x="999" y="942" width="3" height="12" fill="#009628"/>
<rect x="1005" y="937" width="3" height="17" fill="#009628"/>
<rect x="1011" y="941" width="3" height="13" fill="#009628"/>
<rect x="1017" y="939" width="3" height="15" fill="#009628"/>
<rect x="1023" y="937" width="3" height="17" fill="#009628"/>
<rect x="1029" y="943" width="3" height="11" fill="#009628"/>
<rect x="1035" y="943" width="3" height="11" fill="#009628"/>
<rect x="1041" y="943" width="3" height="11" fill="#009628"/>
<rect x="1047" y="939" width="3" height="15" fill="#009628"/>
<rect x="1053" y="941" width="3" height="13" fill="#009628"/>
<rect x="1059" y="939" width="3" height="15" fill="#009628"/>
<rect x="1065" y="939" width="3" height="15" fill="#009628"/>
<rect x="1071" y="937" width="3" height="17" fill="#009628"/>
<rect x="1077" y="937" width="3" height="17" fill="#009628"/>
<rect x="1083" y="939" width="3" height="15" fill="#009628"/>
<rect x="1089" y="940" width="3" height="14" fill="#009628"/>
<rect x="1095" y="935" width="3" height="19" fill="#009628"/>
<rect x="1101" y="931" width="3" height="23" fill="#009628"/>
<rect x="1107" y="937" width="3" height="17" fill="#009628"/>
<rect x="1113" y="940" width="3" height="14" fill="#009628"/>
<rect x="1119" y="940" width="3" height="14" fill="#009628"/>
<rect x="1125" y="936" width="3" height="18" fill="#009628"/>
<rect x="1131" y="939" width="3" height="15" fill="#009628"/>
<rect x="1137" y="936" width="3" height="18" fill="#009628"/>
<rect x="1143" y="942" width="3" height="12" fill="#009628"/>
<rect x="1149" y="932" width="3" height="22" fill="#009628"/>
<rect x="1155" y="936" width="3" height="18" fill="#009628"/>
<rect x="1161" y="935" width="3" height="19" fill="#009628"/>
<rect x="1167" y="934" width="3" height="20" fill="#009628"/>
<rect x="1173" y="941" width="3" height="13" fill="#009628"/>
<rect x="1179" y="940" width="3" height="14" fill="#009628"/>
<rect x="1185" y="935" width="3" height="19" fill="#009628"/>
<rect x="1191" y="940" width="3" height="14" fill="#009628"/>
<rect x="1197" y="940" width="3" height="14" fill="#009628"/>
<rect x="1203" y="945" width="3" height="9" fill="#009628"/>
<rect x="1209" y="941" width="3" height="13" fill="#009628"/>
<rect x="1215" y="943" width="3" height="11" fill="#009628"/>
<rect x="1221" y="929" width="3" height="25" fill="#009628"/>
<rect x="1227" y="923" width="3" height="31" fill="#009628"/>
<rect x="1233" y="932" width="3" height="22" fill="#009628"/>
<rect x="1239" y="935" width="3" height="19" fill="#009628"/>
<rect x="1245" y="935" width="3" height="19" fill="#009628"/>
<rect x="1251" y="932" width="3" height="22" fill="#009628"/>
<rect x="1257" y="930" width="3" height="24" fill="#009628"/>
<rect x="1263" y="933" width="3" height="21" fill="#009628"/>
<rect x="1269" y="937" width="3" height="17" fill="#009628"/>
<rect x="1275" y="936" width="3" height="18" fill="#009628"/>
<rect x="1281" y="926" width="3" height="28" fill="#009628"/>
<rect x="1287" y="935" width="3" height="19" fill="#009628"/>
<rect x="1293" y="937" width="3" height="17" fill="#009628"/>
<rect x="1299" y="935" width="3" height="19" fill="#009628"/>
<rect x="1305" y="932" width="3" height="22" fill="#009628"/>
<rect x="1311" y="931" width="3" height="23" fill="#009628"/>
<rect x="1317" y="933" width="3" height="21" fill="#009628"/>
<rect x="1323" y="940" width="3" height="14" fill="#009628"/>
<rect x="1329" y="934" width="3" height="20" fill="#009628"/>
<rect x="1335" y="920" width="3" height="34" fill="#009628"/>
<rect x="1341" y="912" width="3" height="42" fill="#009628"/>
<rect x="1347" y="918" width="3" height="36" fill="#009628"/>
<rect x="1353" y="909" width="3" height="45" fill="#009628"/>
<rect x="1359" y="899" width="3" height="55" fill="#009628"/>
<rect x="1365" y="904" width="3" height="50" fill="#009628"/>
<rect x="1371" y="906" width="3" height="48" fill="#009628"/>
<rect x="1377" y="929" width="3" height="25" fill="#009628"/>
<rect x="1383" y="919" width="3" height="35" fill="#009628"/>
<rect x="1389" y="908" width="3" height="46" fill="#009628"/>
<rect x="1395" y="918" width="3" height="36" fill="#009628"/>
<rect x="1401" y="909" width="3" height="45" fill="#009628"/>
<rect x="1407" y="907" width="3" height="47" fill="#009628"/>
<rect x="1413" y="907" width="3" height="47" fill="#009628"/>
<rect x="1419" y="905" width="3" height="49" fill="#009628"/>
<rect x="1425" y="897" width="3" height="57" fill="#009628"/>
<rect x="1431" y="907" width="3" height="47" fill="#009628"/>
<rect x="1437" y="908" width="3" height="46" fill="#009628"/>
<rect x="1443" y="905" width="3" height="49" fill="#009628"/>
<rect x="1449" y="900" width="3" height="54" fill="#009628"/>
<rect x="1455" y="902" width="3" height="52" fill="#009628"/>
<rect x="1461" y="911" width="3" height="43" fill="#009628"/>
<rect x="1467" y="901" width="3" height="53" fill="#009628"/>
<rect x="1473" y="910" width="3" height="44" fill="#009628"/>
<rect x="1479" y="911" width="3" height="43" fill="#009628"/>
<rect x="1485" y="910" width="3" height="44" fill="#009628"/>
<rect x="1491" y="915" width="3" height="39" fill="#009628"/>
<rect x="1497" y="908" width="3" height="46" fill="#009628"/>
<rect x="1503" y="914" width="3" height="40" fill="#009628"/>
<rect x="1509" y="904" width="3" height="50" fill="#009628"/>
<rect x="1515" y="904" width="3" height="50" fill="#009628"/>
</svg>
<text x="12" y="114.5" fill="#000" font-size="14" textLength="91" lengthAdjust="spacingAndGlyphs">日経平均(指数)</text>
<text x="108" y="114.5" fill="#000" font-size="14" textLength="89" lengthAdjust="spacingAndGlyphs">Bollinger_Bands</text>
<text x="200" y="114.5" fill="#000" font-size="14" textLength="33" lengthAdjust="spacingAndGlyphs">(20,2)</text>
<text x="237" y="114.5" fill="#000" font-size="14" textLength="66" lengthAdjust="spacingAndGlyphs">2013/02/01</text>
<text x="310.5" y="114.5" fill="#009632" font-size="14" textLength="54.5" lengthAdjust="spacingAndGlyphs">10,772.88</text>
<text x="370" y="114.5" fill="#f05a14" font-size="14" textLength="54" lengthAdjust="spacingAndGlyphs">11,177.29</text>
<text x="428.5" y="114.5" fill="#1e64dc" font-size="14" textLength="54.5" lengthAdjust="spacingAndGlyphs">10,368.47</text>
<text x="12" y="496" fill="#000" font-size="14" textLength="228" lengthAdjust="spacingAndGlyphs">MACD_EMA_Signal (12,26,9) 2013/02/01</text>
<text x="248" y="496" fill="#009632" font-size="14" textLength="37" lengthAdjust="spacingAndGlyphs">280.16</text>
<text x="290" y="496" fill="#f05a14" font-size="14" textLength="35" lengthAdjust="spacingAndGlyphs">273.51</text>
<text x="332" y="496" fill="#ff0000" font-size="14" textLength="24" lengthAdjust="spacingAndGlyphs">6.65</text>
<text x="360" y="496" fill="#ff00ff" font-size="14" textLength="24" lengthAdjust="spacingAndGlyphs">0.00</text>
<text x="12" y="603.5" fill="#000" font-size="14" textLength="116" lengthAdjust="spacingAndGlyphs">RSI (14) 2013/02/01</text>
<text x="134" y="603.5" fill="#009632" font-size="14" textLength="31" lengthAdjust="spacingAndGlyphs">59.72</text>
<text x="170" y="603.5" fill="#f05a14" font-size="14" textLength="30" lengthAdjust="spacingAndGlyphs">30.00</text>
<text x="205" y="603.5" fill="#1e64dc" font-size="14" textLength="31" lengthAdjust="spacingAndGlyphs">70.00</text>
<text x="11" y="706" fill="#000" font-size="14" textLength="138" lengthAdjust="spacingAndGlyphs">乖離度 (20) 2013/02/01</text>
<text x="156.5" y="706" fill="#009632" font-size="14" textLength="37.5" lengthAdjust="spacingAndGlyphs">103.88</text>
<text x="198" y="706" fill="#f05a14" font-size="14" textLength="39" lengthAdjust="spacingAndGlyphs">100.00</text>
<text x="12" y="784.5" fill="#000" font-size="14" textLength="218" lengthAdjust="spacingAndGlyphs">サイコロジカルライン (12) 2013/02/01</text>
<text x="238" y="784.5" fill="#009632" font-size="14" textLength="30" lengthAdjust="spacingAndGlyphs">66.67</text>
<text x="272" y="784.5" fill="#f05a14" font-size="14" textLength="31" lengthAdjust="spacingAndGlyphs">25.00</text>
<text x="307" y="784.5" fill="#1e64dc" font-size="14" textLength="31" lengthAdjust="spacingAndGlyphs">75.00</text>
<text x="12" y="888" fill="#000" font-size="14" textLength="112" lengthAdjust="spacingAndGlyphs">出来高 2013/02/01</text>
<text x="130" y="888" fill="#009632" font-size="14" textLength="73" lengthAdjust="spacingAndGlyphs">3,690,580.00</text>
<text x="1405.6" y="130.5" fill="#ff0000" font-size="14" textLength="53.80000000000018" lengthAdjust="spacingAndGlyphs">H: &#8722;0.41%</text>
<text x="1469.8" y="130.5" fill="#000096" font-size="14" textLength="52.200000000000045" lengthAdjust="spacingAndGlyphs">L: 35.83%</text>
<text x="1344.8" y="143.4" fill="#ff0000" font-size="14" textLength="137.20000000000005" lengthAdjust="spacingAndGlyphs">11,237.84 (2013/02/01 )</text>
<path d="M1502 136.5H1517M1511 133.5L1517 136.5" stroke="#ff0000" fill="none"/>
<rect x="1537" y="125" width="52" height="13" fill="#ff0000"/>
<text x="1537.5" y="136.5" fill="#ffffff" font-size="14" textLength="51.0" lengthAdjust="spacingAndGlyphs">11191.34</text>
<path d="M1537.5 146.5L1541.5 142.5L1545.5 146.5Z" fill="#ff0000" shape-rendering="auto"/>
<text x="1557.2" y="150.8" fill="#ff0000" font-size="14" textLength="31.299999999999955" lengthAdjust="spacingAndGlyphs">52.68</text>
<text x="1538.4" y="164.2" fill="#ff0000" font-size="14" textLength="31.299999999999955" lengthAdjust="spacingAndGlyphs">0.47%</text>
<path d="M1538 168.5h1M1542 168.5h3M1548 168.5h3M1554 168.5h3M1560 168.5h3M1566 168.5h3M1572 168.5h1M1575 168.5h3M1581 168.5h3M1586 168.5h2" stroke="#000"/>
<path d="M532 467.5H547M532 467.5L537 470.5" stroke="#000096" fill="none"/>
<text x="551.8" y="474.5" fill="#000096" font-size="14" textLength="130.10000000000002" lengthAdjust="spacingAndGlyphs">8,238.96 (2012/06/04)</text>
<rect x="11" y="481" width="1518" height="2" fill="#000"/>
<rect x="11" y="589" width="1518" height="2" fill="#000"/>
<rect x="11" y="691" width="1518" height="2" fill="#000"/>
<rect x="11" y="770" width="1518" height="2" fill="#000"/>
<rect x="11" y="873" width="1518" height="2" fill="#000"/>
<rect x="1527" y="102" width="2" height="850" fill="#000"/>
<rect x="11" y="949" width="1518" height="2" fill="#000"/>
<rect x="1505.5" y="484.5" width="8" height="7" fill="#fff" stroke="#808080"/>
<line x1="1507" y1="488.5" x2="1512" y2="488.5" stroke="#000"/>
<rect x="1515.5" y="484.5" width="8" height="7" fill="#fff" stroke="#808080"/>
<path d="M1517.5 486L1521.5 490M1521.5 486L1517.5 490" stroke="#000"/>
<rect x="1505.5" y="592.5" width="8" height="7" fill="#fff" stroke="#808080"/>
<line x1="1507" y1="596.5" x2="1512" y2="596.5" stroke="#000"/>
<rect x="1515.5" y="592.5" width="8" height="7" fill="#fff" stroke="#808080"/>
<path d="M1517.5 594L1521.5 598M1521.5 594L1517.5 598" stroke="#000"/>
<rect x="1505.5" y="694.5" width="8" height="7" fill="#fff" stroke="#808080"/>
<line x1="1507" y1="698.5" x2="1512" y2="698.5" stroke="#000"/>
<rect x="1515.5" y="694.5" width="8" height="7" fill="#fff" stroke="#808080"/>
<path d="M1517.5 696L1521.5 700M1521.5 696L1517.5 700" stroke="#000"/>
<rect x="1505.5" y="773.5" width="8" height="7" fill="#fff" stroke="#808080"/>
<line x1="1507" y1="777.5" x2="1512" y2="777.5" stroke="#000"/>
<rect x="1515.5" y="773.5" width="8" height="7" fill="#fff" stroke="#808080"/>
<path d="M1517.5 775L1521.5 779M1521.5 775L1517.5 779" stroke="#000"/>
<rect x="1505.5" y="876.5" width="8" height="7" fill="#fff" stroke="#808080"/>
<line x1="1507" y1="880.5" x2="1512" y2="880.5" stroke="#000"/>
<rect x="1515.5" y="876.5" width="8" height="7" fill="#fff" stroke="#808080"/>
<path d="M1517.5 878L1521.5 882M1521.5 878L1517.5 882" stroke="#000"/>
<line x1="16.5" y1="951" x2="16.5" y2="956" stroke="#000"/>
<line x1="46.5" y1="951" x2="46.5" y2="956" stroke="#000"/>
<line x1="76.5" y1="951" x2="76.5" y2="956" stroke="#000"/>
<line x1="106.5" y1="951" x2="106.5" y2="956" stroke="#000"/>
<line x1="136.5" y1="951" x2="136.5" y2="956" stroke="#000"/>
<line x1="166.5" y1="951" x2="166.5" y2="956" stroke="#000"/>
<line x1="196.5" y1="951" x2="196.5" y2="956" stroke="#000"/>
<line x1="226.5" y1="951" x2="226.5" y2="956" stroke="#000"/>
<line x1="250.5" y1="951" x2="250.5" y2="956" stroke="#000"/>
<line x1="280.5" y1="951" x2="280.5" y2="956" stroke="#000"/>
<line x1="310.5" y1="951" x2="310.5" y2="956" stroke="#000"/>
<line x1="340.5" y1="951" x2="340.5" y2="956" stroke="#000"/>
<line x1="370.5" y1="951" x2="370.5" y2="956" stroke="#000"/>
<line x1="400.5" y1="951" x2="400.5" y2="956" stroke="#000"/>
<line x1="412.5" y1="951" x2="412.5" y2="956" stroke="#000"/>
<line x1="442.5" y1="951" x2="442.5" y2="956" stroke="#000"/>
<line x1="472.5" y1="951" x2="472.5" y2="956" stroke="#000"/>
<line x1="502.5" y1="951" x2="502.5" y2="956" stroke="#000"/>
<line x1="532.5" y1="951" x2="532.5" y2="956" stroke="#000"/>
<line x1="562.5" y1="951" x2="562.5" y2="956" stroke="#000"/>
<line x1="592.5" y1="951" x2="592.5" y2="956" stroke="#000"/>
<line x1="622.5" y1="951" x2="622.5" y2="956" stroke="#000"/>
<line x1="652.5" y1="951" x2="652.5" y2="956" stroke="#000"/>
<line x1="682.5" y1="951" x2="682.5" y2="956" stroke="#000"/>
<line x1="712.5" y1="951" x2="712.5" y2="956" stroke="#000"/>
<line x1="736.5" y1="951" x2="736.5" y2="956" stroke="#000"/>
<line x1="766.5" y1="951" x2="766.5" y2="956" stroke="#000"/>
<line x1="796.5" y1="951" x2="796.5" y2="956" stroke="#000"/>
<line x1="826.5" y1="951" x2="826.5" y2="956" stroke="#000"/>
<line x1="856.5" y1="951" x2="856.5" y2="956" stroke="#000"/>
<line x1="886.5" y1="951" x2="886.5" y2="956" stroke="#000"/>
<line x1="916.5" y1="951" x2="916.5" y2="956" stroke="#000"/>
<line x1="946.5" y1="951" x2="946.5" y2="956" stroke="#000"/>
<line x1="976.5" y1="951" x2="976.5" y2="956" stroke="#000"/>
<line x1="1000.5" y1="951" x2="1000.5" y2="956" stroke="#000"/>
<line x1="1030.5" y1="951" x2="1030.5" y2="956" stroke="#000"/>
<line x1="1060.5" y1="951" x2="1060.5" y2="956" stroke="#000"/>
<line x1="1084.5" y1="951" x2="1084.5" y2="956" stroke="#000"/>
<line x1="1114.5" y1="951" x2="1114.5" y2="956" stroke="#000"/>
<line x1="1144.5" y1="951" x2="1144.5" y2="956" stroke="#000"/>
<line x1="1174.5" y1="951" x2="1174.5" y2="956" stroke="#000"/>
<line x1="1204.5" y1="951" x2="1204.5" y2="956" stroke="#000"/>
<line x1="1234.5" y1="951" x2="1234.5" y2="956" stroke="#000"/>
<line x1="1258.5" y1="951" x2="1258.5" y2="956" stroke="#000"/>
<line x1="1288.5" y1="951" x2="1288.5" y2="956" stroke="#000"/>
<line x1="1318.5" y1="951" x2="1318.5" y2="956" stroke="#000"/>
<line x1="1348.5" y1="951" x2="1348.5" y2="956" stroke="#000"/>
<line x1="1378.5" y1="951" x2="1378.5" y2="956" stroke="#000"/>
<line x1="1402.5" y1="951" x2="1402.5" y2="956" stroke="#000"/>
<line x1="1408.5" y1="951" x2="1408.5" y2="956" stroke="#000"/>
<line x1="1438.5" y1="951" x2="1438.5" y2="956" stroke="#000"/>
<line x1="1462.5" y1="951" x2="1462.5" y2="956" stroke="#000"/>
<line x1="1492.5" y1="951" x2="1492.5" y2="956" stroke="#000"/>
<line x1="28.5" y1="951" x2="28.5" y2="958" stroke="#000"/>
<line x1="154.5" y1="951" x2="154.5" y2="958" stroke="#000"/>
<line x1="280.5" y1="951" x2="280.5" y2="958" stroke="#000"/>
<line x1="400.5" y1="951" x2="400.5" y2="958" stroke="#000"/>
<line x1="526.5" y1="951" x2="526.5" y2="958" stroke="#000"/>
<line x1="652.5" y1="951" x2="652.5" y2="958" stroke="#000"/>
<line x1="778.5" y1="951" x2="778.5" y2="958" stroke="#000"/>
<line x1="916.5" y1="951" x2="916.5" y2="958" stroke="#000"/>
<line x1="1030.5" y1="951" x2="1030.5" y2="958" stroke="#000"/>
<line x1="1162.5" y1="951" x2="1162.5" y2="958" stroke="#000"/>
<line x1="1288.5" y1="951" x2="1288.5" y2="958" stroke="#000"/>
<line x1="1402.5" y1="951" x2="1402.5" y2="958" stroke="#000"/>
<line x1="1516.5" y1="951" x2="1516.5" y2="958" stroke="#000"/>
<text x="24.5" y="972" fill="#000" font-size="14" text-anchor="start" font-weight="bold" textLength="8" lengthAdjust="spacingAndGlyphs">F</text>
<text x="149.5" y="972" fill="#000" font-size="14" text-anchor="start" font-weight="bold" textLength="10" lengthAdjust="spacingAndGlyphs">M</text>
<text x="276.0" y="972" fill="#000" font-size="14" text-anchor="start" font-weight="bold" textLength="9" lengthAdjust="spacingAndGlyphs">A</text>
<text x="395.5" y="972" fill="#000" font-size="14" text-anchor="start" font-weight="bold" textLength="10" lengthAdjust="spacingAndGlyphs">M</text>
<text x="523.5" y="972" fill="#000" font-size="14" text-anchor="start" font-weight="bold" textLength="6" lengthAdjust="spacingAndGlyphs">J</text>
<text x="649.5" y="972" fill="#000" font-size="14" text-anchor="start" font-weight="bold" textLength="6" lengthAdjust="spacingAndGlyphs">J</text>
<text x="774.0" y="972" fill="#000" font-size="14" text-anchor="start" font-weight="bold" textLength="9" lengthAdjust="spacingAndGlyphs">A</text>
<text x="912.5" y="972" fill="#000" font-size="14" text-anchor="start" font-weight="bold" textLength="8" lengthAdjust="spacingAndGlyphs">S</text>
<text x="1026.0" y="972" fill="#000" font-size="14" text-anchor="start" font-weight="bold" textLength="9" lengthAdjust="spacingAndGlyphs">O</text>
<text x="1158.0" y="972" fill="#000" font-size="14" text-anchor="start" font-weight="bold" textLength="9" lengthAdjust="spacingAndGlyphs">N</text>
<text x="1284.0" y="972" fill="#000" font-size="14" text-anchor="start" font-weight="bold" textLength="9" lengthAdjust="spacingAndGlyphs">D</text>
<text x="1395.0" y="972" fill="#000" font-size="14" text-anchor="start" font-weight="bold" textLength="15" lengthAdjust="spacingAndGlyphs">13</text>
<text x="40.0" y="972" fill="#000" font-size="14" text-anchor="start" font-weight="normal" textLength="13" lengthAdjust="spacingAndGlyphs">06</text>
<text x="70.0" y="972" fill="#000" font-size="14" text-anchor="start" font-weight="normal" textLength="13" lengthAdjust="spacingAndGlyphs">13</text>
<text x="100.0" y="972" fill="#000" font-size="14" text-anchor="start" font-weight="normal" textLength="13" lengthAdjust="spacingAndGlyphs">20</text>
<text x="130.0" y="972" fill="#000" font-size="14" text-anchor="start" font-weight="normal" textLength="13" lengthAdjust="spacingAndGlyphs">27</text>
<text x="190.0" y="972" fill="#000" font-size="14" text-anchor="start" font-weight="normal" textLength="13" lengthAdjust="spacingAndGlyphs">12</text>
<text x="220.0" y="972" fill="#000" font-size="14" text-anchor="start" font-weight="normal" textLength="13" lengthAdjust="spacingAndGlyphs">19</text>
<text x="244.0" y="972" fill="#000" font-size="14" text-anchor="start" font-weight="normal" textLength="13" lengthAdjust="spacingAndGlyphs">26</text>
<text x="304.0" y="972" fill="#000" font-size="14" text-anchor="start" font-weight="normal" textLength="13" lengthAdjust="spacingAndGlyphs">09</text>
<text x="334.0" y="972" fill="#000" font-size="14" text-anchor="start" font-weight="normal" textLength="13" lengthAdjust="spacingAndGlyphs">16</text>
<text x="364.0" y="972" fill="#000" font-size="14" text-anchor="start" font-weight="normal" textLength="13" lengthAdjust="spacingAndGlyphs">23</text>
<text x="436.0" y="972" fill="#000" font-size="14" text-anchor="start" font-weight="normal" textLength="13" lengthAdjust="spacingAndGlyphs">14</text>
<text x="466.0" y="972" fill="#000" font-size="14" text-anchor="start" font-weight="normal" textLength="13" lengthAdjust="spacingAndGlyphs">21</text>
<text x="496.0" y="972" fill="#000" font-size="14" text-anchor="start" font-weight="normal" textLength="13" lengthAdjust="spacingAndGlyphs">28</text>
<text x="556.0" y="972" fill="#000" font-size="14" text-anchor="start" font-weight="normal" textLength="13" lengthAdjust="spacingAndGlyphs">11</text>
<text x="586.0" y="972" fill="#000" font-size="14" text-anchor="start" font-weight="normal" textLength="13" lengthAdjust="spacingAndGlyphs">18</text>
<text x="616.0" y="972" fill="#000" font-size="14" text-anchor="start" font-weight="normal" textLength="13" lengthAdjust="spacingAndGlyphs">25</text>
<text x="676.0" y="972" fill="#000" font-size="14" text-anchor="start" font-weight="normal" textLength="13" lengthAdjust="spacingAndGlyphs">09</text>
<text x="706.0" y="972" fill="#000" font-size="14" text-anchor="start" font-weight="normal" textLength="13" lengthAdjust="spacingAndGlyphs">17</text>
<text x="730.0" y="972" fill="#000" font-size="14" text-anchor="start" font-weight="normal" textLength="13" lengthAdjust="spacingAndGlyphs">23</text>
<text x="760.0" y="972" fill="#000" font-size="14" text-anchor="start" font-weight="normal" textLength="13" lengthAdjust="spacingAndGlyphs">30</text>
<text x="790.0" y="972" fill="#000" font-size="14" text-anchor="start" font-weight="normal" textLength="13" lengthAdjust="spacingAndGlyphs">06</text>
<text x="820.0" y="972" fill="#000" font-size="14" text-anchor="start" font-weight="normal" textLength="13" lengthAdjust="spacingAndGlyphs">13</text>
<text x="850.0" y="972" fill="#000" font-size="14" text-anchor="start" font-weight="normal" textLength="13" lengthAdjust="spacingAndGlyphs">20</text>
<text x="880.0" y="972" fill="#000" font-size="14" text-anchor="start" font-weight="normal" textLength="13" lengthAdjust="spacingAndGlyphs">27</text>
<text x="940.0" y="972" fill="#000" font-size="14" text-anchor="start" font-weight="normal" textLength="13" lengthAdjust="spacingAndGlyphs">10</text>
<text x="970.0" y="972" fill="#000" font-size="14" text-anchor="start" font-weight="normal" textLength="13" lengthAdjust="spacingAndGlyphs">18</text>
<text x="994.0" y="972" fill="#000" font-size="14" text-anchor="start" font-weight="normal" textLength="13" lengthAdjust="spacingAndGlyphs">24</text>
<text x="1054.0" y="972" fill="#000" font-size="14" text-anchor="start" font-weight="normal" textLength="13" lengthAdjust="spacingAndGlyphs">09</text>
<text x="1078.0" y="972" fill="#000" font-size="14" text-anchor="start" font-weight="normal" textLength="13" lengthAdjust="spacingAndGlyphs">15</text>
<text x="1108.0" y="972" fill="#000" font-size="14" text-anchor="start" font-weight="normal" textLength="13" lengthAdjust="spacingAndGlyphs">22</text>
<text x="1138.0" y="972" fill="#000" font-size="14" text-anchor="start" font-weight="normal" textLength="13" lengthAdjust="spacingAndGlyphs">29</text>
<text x="1168.0" y="972" fill="#000" font-size="14" text-anchor="start" font-weight="normal" textLength="13" lengthAdjust="spacingAndGlyphs">05</text>
<text x="1198.0" y="972" fill="#000" font-size="14" text-anchor="start" font-weight="normal" textLength="13" lengthAdjust="spacingAndGlyphs">12</text>
<text x="1228.0" y="972" fill="#000" font-size="14" text-anchor="start" font-weight="normal" textLength="13" lengthAdjust="spacingAndGlyphs">19</text>
<text x="1252.0" y="972" fill="#000" font-size="14" text-anchor="start" font-weight="normal" textLength="13" lengthAdjust="spacingAndGlyphs">26</text>
<text x="1312.0" y="972" fill="#000" font-size="14" text-anchor="start" font-weight="normal" textLength="13" lengthAdjust="spacingAndGlyphs">10</text>
<text x="1342.0" y="972" fill="#000" font-size="14" text-anchor="start" font-weight="normal" textLength="13" lengthAdjust="spacingAndGlyphs">17</text>
<text x="1372.0" y="972" fill="#000" font-size="14" text-anchor="start" font-weight="normal" textLength="13" lengthAdjust="spacingAndGlyphs">25</text>
<text x="1432.0" y="972" fill="#000" font-size="14" text-anchor="start" font-weight="normal" textLength="13" lengthAdjust="spacingAndGlyphs">15</text>
<text x="1456.0" y="972" fill="#000" font-size="14" text-anchor="start" font-weight="normal" textLength="13" lengthAdjust="spacingAndGlyphs">21</text>
<text x="1486.0" y="972" fill="#000" font-size="14" text-anchor="start" font-weight="normal" textLength="13" lengthAdjust="spacingAndGlyphs">28</text>
<rect x="1530.5" y="938.5" width="30" height="15" fill="#fff" stroke="#000"/>
<text x="1532" y="951" fill="#000" font-size="13" text-anchor="start" font-weight="normal">x100</text>
</svg>
</body></html>
